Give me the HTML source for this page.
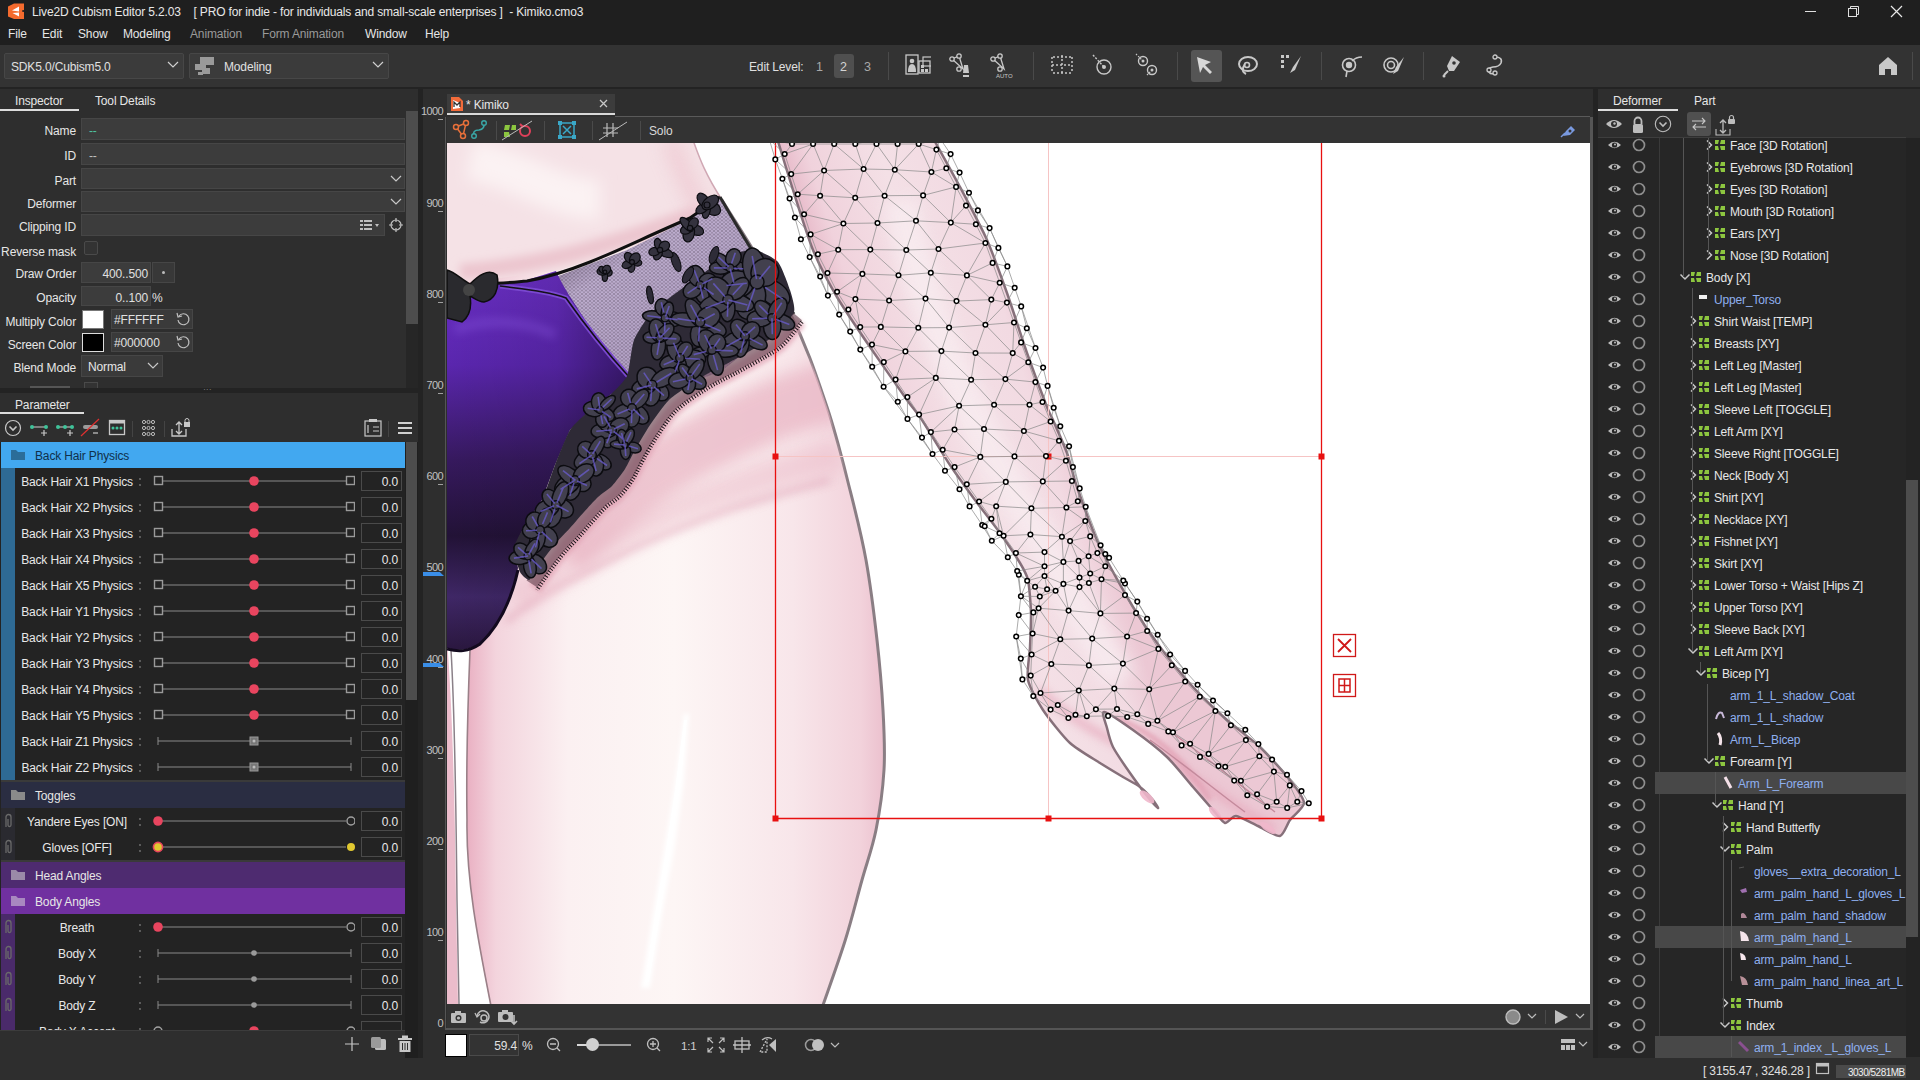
<!DOCTYPE html>
<html><head><meta charset="utf-8"><style>
html,body{margin:0;padding:0;width:1920px;height:1080px;overflow:hidden;background:#2e2e2e;}
.a{position:absolute;}
.t{position:absolute;font-family:"Liberation Sans",sans-serif;white-space:pre;line-height:16px;letter-spacing:-0.15px;}
svg{overflow:hidden}
</style></head><body>
<div class="a" style="left:0px;top:0px;width:1920px;height:45px;background:#1f1f1f;"></div><svg class="a" style="left:7px;top:3px;" width="18" height="18" viewBox="0 0 18 18"><path d="M1 3.5 L7 0.5 L17 0.5 L17 7 L15 7.5 L15 8.5 L17 9 L17 16 L7 16 L1 13.5 Z" fill="#f56b2e"/><path d="M5 7.5 L12 3.5 L12 8.5 Z M5.5 10 L12 9.5 L12 13.5 Z" fill="#fff"/></svg><div class="t" style="left:32px;top:4px;color:#e8e8e8;font-size:12px;">Live2D Cubism Editor 5.2.03&nbsp;&nbsp;&nbsp;&nbsp;[ PRO for indie - for individuals and small-scale enterprises ]&nbsp;&nbsp;- Kimiko.cmo3</div><div class="a" style="left:1805px;top:11px;width:11px;height:1px;background:#e0e0e0;"></div><svg class="a" style="left:1847px;top:5px;" width="14" height="14" viewBox="0 0 14 14"><rect x="1.5" y="3.5" width="8" height="8" fill="none" stroke="#e0e0e0"/><path d="M3.5 3.5 V1.5 H11.5 V9.5 H9.5" fill="none" stroke="#e0e0e0"/></svg><svg class="a" style="left:1890px;top:5px;" width="14" height="14" viewBox="0 0 14 14"><path d="M1 1 L12 12 M12 1 L1 12" stroke="#e8e8e8" stroke-width="1.2"/></svg><div class="t" style="left:8px;top:26px;color:#e6e6e6;font-size:12px;">File</div><div class="t" style="left:42px;top:26px;color:#e6e6e6;font-size:12px;">Edit</div><div class="t" style="left:78px;top:26px;color:#e6e6e6;font-size:12px;">Show</div><div class="t" style="left:123px;top:26px;color:#e6e6e6;font-size:12px;">Modeling</div><div class="t" style="left:190px;top:26px;color:#9a9a9a;font-size:12px;">Animation</div><div class="t" style="left:262px;top:26px;color:#9a9a9a;font-size:12px;">Form Animation</div><div class="t" style="left:365px;top:26px;color:#e6e6e6;font-size:12px;">Window</div><div class="t" style="left:425px;top:26px;color:#e6e6e6;font-size:12px;">Help</div><div class="a" style="left:0px;top:45px;width:1920px;height:42px;background:#333333;"></div><div class="a" style="left:0px;top:87px;width:1920px;height:2px;background:#232323;"></div><div class="a" style="left:4px;top:53px;width:180px;height:26px;background:#3b3b3b;border:1px solid #474747;box-sizing:border-box;border-radius:2px;"></div><div class="t" style="left:11px;top:59px;color:#e0e0e0;font-size:12px;">SDK5.0/Cubism5.0</div><svg class="a" style="left:167px;top:61px;" width="12" height="8" viewBox="0 0 12 8"><path d="M1 1 L6 6 L11 1" fill="none" stroke="#d0d0d0" stroke-width="1.2"/></svg><div class="a" style="left:189px;top:53px;width:200px;height:26px;background:#3b3b3b;border:1px solid #474747;box-sizing:border-box;border-radius:2px;"></div><svg class="a" style="left:194px;top:56px;" width="22" height="20" viewBox="0 0 22 20"><rect x="6" y="1" width="14" height="8" fill="#9a9a9a"/><rect x="1" y="8" width="11" height="6" fill="#9a9a9a"/><rect x="8" y="12" width="8" height="6" fill="#9a9a9a"/><rect x="4" y="16" width="5" height="3" fill="#9a9a9a"/></svg><div class="t" style="left:224px;top:59px;color:#e0e0e0;font-size:12px;">Modeling</div><svg class="a" style="left:372px;top:61px;" width="12" height="8" viewBox="0 0 12 8"><path d="M1 1 L6 6 L11 1" fill="none" stroke="#d0d0d0" stroke-width="1.2"/></svg><div class="t" style="left:749px;top:59px;color:#e0e0e0;font-size:12px;">Edit Level:</div><div class="t" style="left:816px;top:59px;color:#a8a8a8;font-size:12.5px;">1</div><div class="a" style="left:834px;top:54px;width:20px;height:24px;background:#4f4f4f;border-radius:3px;"></div><div class="t" style="left:840px;top:59px;color:#d4d4d4;font-size:12.5px;">2</div><div class="t" style="left:864px;top:59px;color:#a8a8a8;font-size:12.5px;">3</div><div class="a" style="left:888px;top:52px;width:1px;height:28px;background:#4a4a4a;"></div><div class="a" style="left:1033px;top:52px;width:1px;height:28px;background:#4a4a4a;"></div><div class="a" style="left:1177px;top:52px;width:1px;height:28px;background:#4a4a4a;"></div><div class="a" style="left:1321px;top:52px;width:1px;height:28px;background:#4a4a4a;"></div><div class="a" style="left:1423px;top:52px;width:1px;height:28px;background:#4a4a4a;"></div><div class="a" style="left:1191px;top:50px;width:31px;height:32px;background:#555555;border-radius:3px;"></div><svg class="a" style="left:905px;top:53px;" width="26" height="26" viewBox="0 0 26 26"><rect x="1" y="2" width="12" height="19" fill="none" stroke="#c8c8c8" stroke-width="1.3"/><circle cx="7" cy="8" r="2.3" fill="#c8c8c8"/><path d="M3 19 Q3 11 7 11 Q11 11 11 19Z" fill="#c8c8c8"/><rect x="14" y="8" width="11" height="12" fill="none" stroke="#c8c8c8" stroke-width="1.3"/><rect x="18" y="4" width="9" height="9" fill="none" stroke="#c8c8c8" stroke-width="1.2"/><rect x="16" y="12" width="3" height="3" fill="#c8c8c8"/><rect x="16" y="16" width="3" height="3" fill="#c8c8c8"/><rect x="20" y="16" width="3" height="3" fill="#c8c8c8"/></svg><svg class="a" style="left:949px;top:53px;" width="26" height="26" viewBox="0 0 26 26"><path d="M3 6 L10 3 L14 16 Z" fill="none" stroke="#c8c8c8" stroke-width="1.3"/><circle cx="3" cy="6" r="2.2" fill="#333" stroke="#c8c8c8" stroke-width="1.3"/><circle cx="10" cy="3" r="2.2" fill="#333" stroke="#c8c8c8" stroke-width="1.3"/><circle cx="10" cy="16" r="2.2" fill="#333" stroke="#c8c8c8" stroke-width="1.3"/><path d="M15 12 L19 12 L20 20 L14 20 Z" fill="#c8c8c8"/><rect x="14" y="22" width="6" height="2" fill="#c8c8c8"/></svg><svg class="a" style="left:990px;top:53px;" width="26" height="26" viewBox="0 0 26 26"><path d="M3 6 L10 3 L14 16 Z" fill="none" stroke="#c8c8c8" stroke-width="1.3"/><circle cx="3" cy="6" r="2.2" fill="#333" stroke="#c8c8c8" stroke-width="1.3"/><circle cx="10" cy="3" r="2.2" fill="#333" stroke="#c8c8c8" stroke-width="1.3"/><circle cx="10" cy="16" r="2.2" fill="#333" stroke="#c8c8c8" stroke-width="1.3"/><text x="6" y="25" font-size="6" fill="#c8c8c8" font-family="Liberation Sans">AUTO</text></svg><svg class="a" style="left:1050px;top:53px;" width="26" height="26" viewBox="0 0 26 26"><path d="M3 4 H21 M3 20 H21 M2 4 V20 M22 4 V20 M12 2 V22 M2 12 H22" stroke="#c8c8c8" stroke-width="1.5" stroke-dasharray="2 2" fill="none"/></svg><svg class="a" style="left:1091px;top:53px;" width="26" height="26" viewBox="0 0 26 26"><circle cx="13" cy="14" r="7" fill="none" stroke="#c8c8c8" stroke-width="1.4"/><circle cx="13" cy="14" r="2" fill="#c8c8c8"/><path d="M2 2 L13 14" stroke="#c8c8c8" stroke-width="1.4" stroke-dasharray="2 1.5"/></svg><svg class="a" style="left:1135px;top:53px;" width="26" height="26" viewBox="0 0 26 26"><circle cx="8" cy="8" r="4.5" fill="none" stroke="#c8c8c8" stroke-width="1.4"/><circle cx="17" cy="17" r="4.5" fill="none" stroke="#c8c8c8" stroke-width="1.4"/><circle cx="8" cy="8" r="1.5" fill="#c8c8c8"/><circle cx="17" cy="17" r="1.5" fill="#c8c8c8"/><path d="M1 1 L8 8 M12 22 L17 17" stroke="#c8c8c8" stroke-width="1.2" stroke-dasharray="1.5 1.5"/></svg><svg class="a" style="left:1193px;top:53px;" width="26" height="26" viewBox="0 0 26 26"><path d="M4 4 L18 9 L12 12 L19 19 L17 21 L10 14 L7 20 Z" fill="#d8d8d8"/></svg><svg class="a" style="left:1236px;top:53px;" width="26" height="26" viewBox="0 0 26 26"><ellipse cx="12" cy="11" rx="9" ry="7" fill="none" stroke="#c8c8c8" stroke-width="2"/><path d="M9 11 Q4 18 10 21" fill="none" stroke="#c8c8c8" stroke-width="2"/><circle cx="11" cy="12" r="2.5" fill="none" stroke="#c8c8c8" stroke-width="1.6"/></svg><svg class="a" style="left:1279px;top:53px;" width="26" height="26" viewBox="0 0 26 26"><rect x="2" y="2" width="3" height="3" fill="#c8c8c8"/><rect x="7" y="2" width="3" height="3" fill="#c8c8c8"/><rect x="2" y="7" width="3" height="3" fill="#c8c8c8"/><rect x="2" y="12" width="3" height="3" fill="#c8c8c8"/><path d="M22 3 L14 14 L11 20 L16 17 Z" fill="#c8c8c8"/></svg><svg class="a" style="left:1339px;top:53px;" width="26" height="26" viewBox="0 0 26 26"><circle cx="10" cy="12" r="6.5" fill="none" stroke="#c8c8c8" stroke-width="1.6"/><circle cx="10" cy="12" r="3.2" fill="#c8c8c8"/><path d="M13 8 Q17 4 23 4 M8 18 L7 24" stroke="#c8c8c8" stroke-width="1.6" fill="none"/></svg><svg class="a" style="left:1381px;top:53px;" width="26" height="26" viewBox="0 0 26 26"><circle cx="10" cy="12" r="7" fill="none" stroke="#c8c8c8" stroke-width="1.6"/><circle cx="10" cy="12" r="3.5" fill="none" stroke="#c8c8c8" stroke-width="1.6"/><path d="M23 4 L15 14 L12 21 L17 18 Z" fill="#c8c8c8"/></svg><svg class="a" style="left:1440px;top:53px;" width="26" height="26" viewBox="0 0 26 26"><path d="M12 3 L20 9 L14 18 L9 18 L7 13 Z" fill="#c8c8c8"/><circle cx="14" cy="10" r="1.8" fill="#333"/><path d="M8 18 L4 22" stroke="#c8c8c8" stroke-width="2"/><circle cx="4" cy="23" r="1.5" fill="#c8c8c8"/></svg><svg class="a" style="left:1483px;top:53px;" width="26" height="26" viewBox="0 0 26 26"><path d="M12 4 Q20 4 18 10 Q16 14 10 14 Q4 15 6 19 Q8 22 12 20" fill="none" stroke="#c8c8c8" stroke-width="1.6"/><circle cx="12" cy="4" r="2" fill="#333" stroke="#c8c8c8" stroke-width="1.3"/><circle cx="12" cy="20" r="2" fill="#333" stroke="#c8c8c8" stroke-width="1.3"/><circle cx="6" cy="17" r="2" fill="#333" stroke="#c8c8c8" stroke-width="1.3"/></svg><svg class="a" style="left:1877px;top:55px;" width="22" height="22" viewBox="0 0 22 22"><path d="M11 2 L20 10 L20 20 L14 20 L14 14 L8 14 L8 20 L2 20 L2 10 Z" fill="#c8c8c8"/></svg><div class="a" style="left:1912px;top:52px;width:1px;height:28px;background:#4a4a4a;"></div><div class="a" style="left:0px;top:1058px;width:1920px;height:22px;background:#2e2e2e;"></div><div class="t" style="left:1703px;top:1063px;color:#e0e0e0;font-size:12px;">[ 3155.47 , 3246.28 ]</div><svg class="a" style="left:1815px;top:1062px;" width="16" height="14" viewBox="0 0 16 14"><rect x="1.5" y="1.5" width="12" height="10" fill="none" stroke="#c0c0c0" stroke-width="1.2"/><rect x="1.5" y="1.5" width="12" height="3" fill="#c0c0c0"/></svg><div class="a" style="left:1836px;top:1065px;width:70px;height:13px;background:#4a4a4a;"></div><div class="t" style="left:1848px;top:1065px;color:#f0f0f0;font-size:10px;letter-spacing:-0.5px;">3030/5281MB</div>
<div class="a" style="left:0px;top:89px;width:418px;height:299px;background:#2e2e2e;"></div><div class="t" style="left:15px;top:93px;color:#e6e6e6;font-size:12px;">Inspector</div><div class="a" style="left:0px;top:109px;width:79px;height:2px;background:#dcdcdc;"></div><div class="t" style="left:95px;top:93px;color:#e6e6e6;font-size:12px;">Tool Details</div><div class="t" style="right:1844px;top:122.5px;color:#e6e6e6;font-size:12px;">Name</div><div class="t" style="right:1844px;top:147.5px;color:#e6e6e6;font-size:12px;">ID</div><div class="t" style="right:1844px;top:172.5px;color:#e6e6e6;font-size:12px;">Part</div><div class="t" style="right:1844px;top:195.5px;color:#e6e6e6;font-size:12px;">Deformer</div><div class="t" style="right:1844px;top:219px;color:#e6e6e6;font-size:12px;">Clipping ID</div><div class="t" style="right:1844px;top:244px;color:#e6e6e6;font-size:12px;">Reverse mask</div><div class="t" style="right:1844px;top:266px;color:#e6e6e6;font-size:12px;">Draw Order</div><div class="t" style="right:1844px;top:290px;color:#e6e6e6;font-size:12px;">Opacity</div><div class="t" style="right:1844px;top:314px;color:#e6e6e6;font-size:12px;">Multiply Color</div><div class="t" style="right:1844px;top:337px;color:#e6e6e6;font-size:12px;">Screen Color</div><div class="t" style="right:1844px;top:360px;color:#e6e6e6;font-size:12px;">Blend Mode</div><div class="a" style="left:81px;top:118px;width:324px;height:22px;background:#3c3c3c;border:1px solid #464646;box-sizing:border-box;"></div><div class="t" style="left:89px;top:122.5px;color:#4fc3a0;font-size:12px;">--</div><div class="a" style="left:81px;top:143px;width:324px;height:22px;background:#3c3c3c;border:1px solid #464646;box-sizing:border-box;"></div><div class="t" style="left:89px;top:147.5px;color:#c0c0c0;font-size:12px;">--</div><div class="a" style="left:81px;top:168px;width:324px;height:21px;background:#3c3c3c;border:1px solid #464646;box-sizing:border-box;"></div><svg class="a" style="left:390px;top:175px;" width="12" height="8" viewBox="0 0 12 8"><path d="M1 1 L6 6 L11 1" fill="none" stroke="#c8c8c8" stroke-width="1.2"/></svg><div class="a" style="left:81px;top:191px;width:324px;height:21px;background:#3c3c3c;border:1px solid #464646;box-sizing:border-box;"></div><svg class="a" style="left:390px;top:198px;" width="12" height="8" viewBox="0 0 12 8"><path d="M1 1 L6 6 L11 1" fill="none" stroke="#c8c8c8" stroke-width="1.2"/></svg><div class="a" style="left:81px;top:214px;width:304px;height:22px;background:#3c3c3c;border:1px solid #464646;box-sizing:border-box;"></div><svg class="a" style="left:358px;top:218px;" width="24" height="14" viewBox="0 0 24 14"><rect x="2" y="2" width="3" height="2" fill="#c0c0c0"/><rect x="6" y="2" width="8" height="2" fill="#c0c0c0"/><rect x="2" y="6" width="3" height="2" fill="#c0c0c0"/><rect x="6" y="6" width="8" height="2" fill="#c0c0c0"/><rect x="2" y="10" width="3" height="2" fill="#c0c0c0"/><rect x="6" y="10" width="8" height="2" fill="#c0c0c0"/><path d="M17 6 L21 6 L19 9 Z" fill="#c0c0c0"/></svg><svg class="a" style="left:388px;top:217px;" width="16" height="16" viewBox="0 0 16 16"><circle cx="8" cy="8" r="5" fill="none" stroke="#c0c0c0" stroke-width="1.2"/><path d="M8 1 V5 M8 11 V15 M1 8 H5 M11 8 H15" stroke="#c0c0c0" stroke-width="1.2"/></svg><div class="a" style="left:84px;top:241px;width:14px;height:14px;background:#333;border:1px solid #4a4a4a;box-sizing:border-box;border-radius:2px;"></div><div class="a" style="left:81px;top:262px;width:70px;height:21px;background:#3c3c3c;border:1px solid #464646;box-sizing:border-box;"></div><div class="t" style="right:1772px;top:266px;color:#e0e0e0;font-size:12px;">400..500</div><div class="a" style="left:152px;top:262px;width:23px;height:21px;background:#383838;border:1px solid #464646;box-sizing:border-box;"></div><div class="a" style="left:162px;top:271px;width:3px;height:3px;background:#bbb;border-radius:2px;"></div><div class="a" style="left:81px;top:286px;width:70px;height:20px;background:#3c3c3c;border:1px solid #464646;box-sizing:border-box;"></div><div class="t" style="right:1772px;top:290px;color:#e0e0e0;font-size:12px;">0..100</div><div class="t" style="left:152px;top:290px;color:#e0e0e0;font-size:12px;">%</div><div class="a" style="left:82px;top:310px;width:22px;height:19px;background:#ffffff;border:1px solid #777;box-sizing:border-box;"></div><div class="a" style="left:111px;top:309px;width:82px;height:20px;background:#3a3a3a;border:1px solid #464646;box-sizing:border-box;"></div><div class="t" style="left:114px;top:312px;color:#e0e0e0;font-size:12px;">#FFFFFF</div><svg class="a" style="left:175px;top:311px;" width="16" height="16" viewBox="0 0 16 16"><path d="M4 5 A5.5 5.5 0 1 1 3 9" fill="none" stroke="#c0c0c0" stroke-width="1.2"/><path d="M2 2 L3 6 L7 5" fill="none" stroke="#c0c0c0" stroke-width="1.2"/></svg><div class="a" style="left:82px;top:333px;width:22px;height:19px;background:#000000;border:1px solid #ddd;box-sizing:border-box;"></div><div class="a" style="left:111px;top:332px;width:82px;height:20px;background:#3a3a3a;border:1px solid #464646;box-sizing:border-box;"></div><div class="t" style="left:114px;top:335px;color:#e0e0e0;font-size:12px;">#000000</div><svg class="a" style="left:175px;top:334px;" width="16" height="16" viewBox="0 0 16 16"><path d="M4 5 A5.5 5.5 0 1 1 3 9" fill="none" stroke="#c0c0c0" stroke-width="1.2"/><path d="M2 2 L3 6 L7 5" fill="none" stroke="#c0c0c0" stroke-width="1.2"/></svg><div class="a" style="left:81px;top:355px;width:82px;height:22px;background:#3a3a3a;border:1px solid #464646;box-sizing:border-box;"></div><div class="t" style="left:88px;top:359px;color:#e6e6e6;font-size:12px;">Normal</div><svg class="a" style="left:147px;top:362px;" width="12" height="8" viewBox="0 0 12 8"><path d="M1 1 L6 6 L11 1" fill="none" stroke="#c8c8c8" stroke-width="1.2"/></svg><div class="a" style="left:84px;top:382px;width:14px;height:6px;background:#333;border:1px solid #4a4a4a;border-bottom:none;box-sizing:border-box;"></div><div class="a" style="left:30px;top:386px;width:40px;height:2px;background:#555;"></div><div class="a" style="left:406px;top:111px;width:12px;height:277px;background:#262626;"></div><div class="a" style="left:406px;top:111px;width:12px;height:213px;background:#4d4d4d;"></div><div class="a" style="left:0px;top:388px;width:418px;height:5px;background:#232323;"></div><div class="t" style="left:203px;top:381px;color:#777;font-size:9px;">···</div><div class="a" style="left:0px;top:393px;width:418px;height:665px;background:#2e2e2e;"></div><div class="t" style="left:15px;top:397px;color:#e6e6e6;font-size:12px;">Parameter</div><div class="a" style="left:0px;top:412px;width:84px;height:2px;background:#dcdcdc;"></div><svg class="a" style="left:4px;top:419px;" width="18" height="18" viewBox="0 0 18 18"><circle cx="9" cy="9" r="7.5" fill="none" stroke="#c8c8c8" stroke-width="1.2"/><path d="M5.5 7.5 L9 11 L12.5 7.5" fill="none" stroke="#c8c8c8" stroke-width="1.6"/></svg><svg class="a" style="left:29px;top:419px;" width="20" height="18" viewBox="0 0 20 18"><path d="M3 8 H17" stroke="#aaa" stroke-width="1.3"/><circle cx="3" cy="8" r="2" fill="#3fc39a"/><circle cx="17" cy="8" r="2" fill="#3fc39a"/><path d="M12 14 H18 M15 11 V17" stroke="#c8c8c8" stroke-width="1.2"/></svg><svg class="a" style="left:55px;top:419px;" width="20" height="18" viewBox="0 0 20 18"><path d="M3 8 H17" stroke="#aaa" stroke-width="1.3"/><circle cx="3" cy="8" r="2" fill="#3fc39a"/><circle cx="10" cy="8" r="2" fill="#3fc39a"/><circle cx="17" cy="8" r="2" fill="#3fc39a"/><path d="M12 14 H18 M15 11 V17" stroke="#c8c8c8" stroke-width="1.2"/></svg><svg class="a" style="left:80px;top:417px;" width="22" height="20" viewBox="0 0 22 20"><rect x="3" y="8" width="15" height="4" rx="2" fill="#9a9a9a"/><path d="M1 19 L19 2" stroke="#e03030" stroke-width="1.2"/><path d="M13 16 H18" stroke="#c8c8c8" stroke-width="1.2"/></svg><svg class="a" style="left:108px;top:419px;" width="18" height="18" viewBox="0 0 18 18"><rect x="1.5" y="1.5" width="15" height="14" fill="none" stroke="#c8c8c8" stroke-width="1.3"/><rect x="1.5" y="1.5" width="15" height="3" fill="#c8c8c8"/><circle cx="5" cy="9" r="1.5" fill="#3fc39a"/><circle cx="9" cy="9" r="1.5" fill="#3fc39a"/><circle cx="13" cy="9" r="1.5" fill="#3fc39a"/></svg><div class="a" style="left:132px;top:421px;width:1px;height:16px;background:#444;"></div><svg class="a" style="left:141px;top:419px;" width="16" height="18" viewBox="0 0 16 18"><circle cx="3.0" cy="3" r="1.6" fill="none" stroke="#c8c8c8" stroke-width="0.9"/><circle cx="7.5" cy="3" r="1.6" fill="none" stroke="#c8c8c8" stroke-width="0.9"/><circle cx="12.0" cy="3" r="1.6" fill="none" stroke="#c8c8c8" stroke-width="0.9"/><circle cx="3.0" cy="9" r="1.6" fill="none" stroke="#c8c8c8" stroke-width="0.9"/><circle cx="7.5" cy="9" r="1.6" fill="none" stroke="#c8c8c8" stroke-width="0.9"/><circle cx="12.0" cy="9" r="1.6" fill="none" stroke="#c8c8c8" stroke-width="0.9"/><circle cx="3.0" cy="15" r="1.6" fill="none" stroke="#c8c8c8" stroke-width="0.9"/><circle cx="7.5" cy="15" r="1.6" fill="none" stroke="#c8c8c8" stroke-width="0.9"/><circle cx="12.0" cy="15" r="1.6" fill="none" stroke="#c8c8c8" stroke-width="0.9"/></svg><div class="a" style="left:164px;top:421px;width:1px;height:16px;background:#444;"></div><svg class="a" style="left:170px;top:417px;" width="22" height="22" viewBox="0 0 22 22"><path d="M2 12 V19 H16 V12" fill="none" stroke="#c8c8c8" stroke-width="1.3"/><path d="M9 5 V17 M6 8 L9 5 L12 8 M6 14 L9 17 L12 14" fill="none" stroke="#c8c8c8" stroke-width="1.3"/><rect x="14" y="5" width="6" height="5" fill="#c8c8c8"/><path d="M15 5 V3.5 A2 2 0 0 1 19 3.5 V5" fill="none" stroke="#c8c8c8"/></svg><svg class="a" style="left:363px;top:418px;" width="20" height="20" viewBox="0 0 20 20"><rect x="2" y="3" width="16" height="15" fill="none" stroke="#c8c8c8" stroke-width="1.2"/><rect x="6" y="1" width="8" height="3" fill="#c8c8c8"/><path d="M5 7 V15 M10 9 H16 M10 13 H16" stroke="#c8c8c8" stroke-width="1.2"/></svg><div class="a" style="left:388px;top:421px;width:1px;height:16px;background:#444;"></div><svg class="a" style="left:396px;top:419px;" width="18" height="18" viewBox="0 0 18 18"><path d="M2 4 H16 M2 9 H16 M2 14 H16" stroke="#d0d0d0" stroke-width="1.8"/></svg><div class="a" style="left:0px;top:442px;width:405px;height:588px;background:#232323;"></div><div class="a" style="left:1px;top:442px;width:404px;height:26px;background:#42a8f0;"></div><svg class="a" style="left:10px;top:448px;" width="18" height="14" viewBox="0 0 18 14"><path d="M1 2 H6 L8 4 H15 V12 H1 Z" fill="#2b6d99"/></svg><div class="t" style="left:35px;top:448.0px;color:#10304a;font-size:12px;">Back Hair Physics</div><div class="a" style="left:1px;top:468px;width:404px;height:26px;background:#232323;"></div><div class="a" style="left:1px;top:468px;width:14px;height:26px;background:#2e6a94;"></div><div class="t" style="left:0px;top:474px;color:#e8e8e8;font-size:12px;width:154px;text-align:center;">Back Hair X1 Physics</div><svg class="a" style="left:138px;top:477px;" width="4" height="10" viewBox="0 0 4 10"><circle cx="2" cy="2" r="0.9" fill="#777"/><circle cx="2" cy="8" r="0.9" fill="#777"/></svg><svg class="a" style="left:150px;top:468px;" width="205" height="26" viewBox="0 0 205 26"><path d="M12.5 13 H196.5" stroke="#8a8a8a" stroke-width="1"/><rect x="4.5" y="8.5" width="8" height="8" fill="#232323" stroke="#9a9a9a" stroke-width="1.4"/><rect x="196.5" y="8.5" width="8" height="8" fill="#232323" stroke="#9a9a9a" stroke-width="1.4"/><circle cx="104" cy="13" r="4.8" fill="#e8455f"/></svg><div class="a" style="left:361px;top:471px;width:41px;height:20px;background:#232323;border:1px solid #4a4a4a;box-sizing:border-box;"></div><div class="t" style="right:1522px;top:474px;color:#e8e8e8;font-size:12px;">0.0</div><div class="a" style="left:1px;top:494px;width:404px;height:26px;background:#232323;"></div><div class="a" style="left:1px;top:494px;width:14px;height:26px;background:#2e6a94;"></div><div class="t" style="left:0px;top:500px;color:#e8e8e8;font-size:12px;width:154px;text-align:center;">Back Hair X2 Physics</div><svg class="a" style="left:138px;top:503px;" width="4" height="10" viewBox="0 0 4 10"><circle cx="2" cy="2" r="0.9" fill="#777"/><circle cx="2" cy="8" r="0.9" fill="#777"/></svg><svg class="a" style="left:150px;top:494px;" width="205" height="26" viewBox="0 0 205 26"><path d="M12.5 13 H196.5" stroke="#8a8a8a" stroke-width="1"/><rect x="4.5" y="8.5" width="8" height="8" fill="#232323" stroke="#9a9a9a" stroke-width="1.4"/><rect x="196.5" y="8.5" width="8" height="8" fill="#232323" stroke="#9a9a9a" stroke-width="1.4"/><circle cx="104" cy="13" r="4.8" fill="#e8455f"/></svg><div class="a" style="left:361px;top:497px;width:41px;height:20px;background:#232323;border:1px solid #4a4a4a;box-sizing:border-box;"></div><div class="t" style="right:1522px;top:500px;color:#e8e8e8;font-size:12px;">0.0</div><div class="a" style="left:1px;top:520px;width:404px;height:26px;background:#232323;"></div><div class="a" style="left:1px;top:520px;width:14px;height:26px;background:#2e6a94;"></div><div class="t" style="left:0px;top:526px;color:#e8e8e8;font-size:12px;width:154px;text-align:center;">Back Hair X3 Physics</div><svg class="a" style="left:138px;top:529px;" width="4" height="10" viewBox="0 0 4 10"><circle cx="2" cy="2" r="0.9" fill="#777"/><circle cx="2" cy="8" r="0.9" fill="#777"/></svg><svg class="a" style="left:150px;top:520px;" width="205" height="26" viewBox="0 0 205 26"><path d="M12.5 13 H196.5" stroke="#8a8a8a" stroke-width="1"/><rect x="4.5" y="8.5" width="8" height="8" fill="#232323" stroke="#9a9a9a" stroke-width="1.4"/><rect x="196.5" y="8.5" width="8" height="8" fill="#232323" stroke="#9a9a9a" stroke-width="1.4"/><circle cx="104" cy="13" r="4.8" fill="#e8455f"/></svg><div class="a" style="left:361px;top:523px;width:41px;height:20px;background:#232323;border:1px solid #4a4a4a;box-sizing:border-box;"></div><div class="t" style="right:1522px;top:526px;color:#e8e8e8;font-size:12px;">0.0</div><div class="a" style="left:1px;top:546px;width:404px;height:26px;background:#232323;"></div><div class="a" style="left:1px;top:546px;width:14px;height:26px;background:#2e6a94;"></div><div class="t" style="left:0px;top:552px;color:#e8e8e8;font-size:12px;width:154px;text-align:center;">Back Hair X4 Physics</div><svg class="a" style="left:138px;top:555px;" width="4" height="10" viewBox="0 0 4 10"><circle cx="2" cy="2" r="0.9" fill="#777"/><circle cx="2" cy="8" r="0.9" fill="#777"/></svg><svg class="a" style="left:150px;top:546px;" width="205" height="26" viewBox="0 0 205 26"><path d="M12.5 13 H196.5" stroke="#8a8a8a" stroke-width="1"/><rect x="4.5" y="8.5" width="8" height="8" fill="#232323" stroke="#9a9a9a" stroke-width="1.4"/><rect x="196.5" y="8.5" width="8" height="8" fill="#232323" stroke="#9a9a9a" stroke-width="1.4"/><circle cx="104" cy="13" r="4.8" fill="#e8455f"/></svg><div class="a" style="left:361px;top:549px;width:41px;height:20px;background:#232323;border:1px solid #4a4a4a;box-sizing:border-box;"></div><div class="t" style="right:1522px;top:552px;color:#e8e8e8;font-size:12px;">0.0</div><div class="a" style="left:1px;top:572px;width:404px;height:26px;background:#232323;"></div><div class="a" style="left:1px;top:572px;width:14px;height:26px;background:#2e6a94;"></div><div class="t" style="left:0px;top:578px;color:#e8e8e8;font-size:12px;width:154px;text-align:center;">Back Hair X5 Physics</div><svg class="a" style="left:138px;top:581px;" width="4" height="10" viewBox="0 0 4 10"><circle cx="2" cy="2" r="0.9" fill="#777"/><circle cx="2" cy="8" r="0.9" fill="#777"/></svg><svg class="a" style="left:150px;top:572px;" width="205" height="26" viewBox="0 0 205 26"><path d="M12.5 13 H196.5" stroke="#8a8a8a" stroke-width="1"/><rect x="4.5" y="8.5" width="8" height="8" fill="#232323" stroke="#9a9a9a" stroke-width="1.4"/><rect x="196.5" y="8.5" width="8" height="8" fill="#232323" stroke="#9a9a9a" stroke-width="1.4"/><circle cx="104" cy="13" r="4.8" fill="#e8455f"/></svg><div class="a" style="left:361px;top:575px;width:41px;height:20px;background:#232323;border:1px solid #4a4a4a;box-sizing:border-box;"></div><div class="t" style="right:1522px;top:578px;color:#e8e8e8;font-size:12px;">0.0</div><div class="a" style="left:1px;top:598px;width:404px;height:26px;background:#232323;"></div><div class="a" style="left:1px;top:598px;width:14px;height:26px;background:#2e6a94;"></div><div class="t" style="left:0px;top:604px;color:#e8e8e8;font-size:12px;width:154px;text-align:center;">Back Hair Y1 Physics</div><svg class="a" style="left:138px;top:607px;" width="4" height="10" viewBox="0 0 4 10"><circle cx="2" cy="2" r="0.9" fill="#777"/><circle cx="2" cy="8" r="0.9" fill="#777"/></svg><svg class="a" style="left:150px;top:598px;" width="205" height="26" viewBox="0 0 205 26"><path d="M12.5 13 H196.5" stroke="#8a8a8a" stroke-width="1"/><rect x="4.5" y="8.5" width="8" height="8" fill="#232323" stroke="#9a9a9a" stroke-width="1.4"/><rect x="196.5" y="8.5" width="8" height="8" fill="#232323" stroke="#9a9a9a" stroke-width="1.4"/><circle cx="104" cy="13" r="4.8" fill="#e8455f"/></svg><div class="a" style="left:361px;top:601px;width:41px;height:20px;background:#232323;border:1px solid #4a4a4a;box-sizing:border-box;"></div><div class="t" style="right:1522px;top:604px;color:#e8e8e8;font-size:12px;">0.0</div><div class="a" style="left:1px;top:624px;width:404px;height:26px;background:#232323;"></div><div class="a" style="left:1px;top:624px;width:14px;height:26px;background:#2e6a94;"></div><div class="t" style="left:0px;top:630px;color:#e8e8e8;font-size:12px;width:154px;text-align:center;">Back Hair Y2 Physics</div><svg class="a" style="left:138px;top:633px;" width="4" height="10" viewBox="0 0 4 10"><circle cx="2" cy="2" r="0.9" fill="#777"/><circle cx="2" cy="8" r="0.9" fill="#777"/></svg><svg class="a" style="left:150px;top:624px;" width="205" height="26" viewBox="0 0 205 26"><path d="M12.5 13 H196.5" stroke="#8a8a8a" stroke-width="1"/><rect x="4.5" y="8.5" width="8" height="8" fill="#232323" stroke="#9a9a9a" stroke-width="1.4"/><rect x="196.5" y="8.5" width="8" height="8" fill="#232323" stroke="#9a9a9a" stroke-width="1.4"/><circle cx="104" cy="13" r="4.8" fill="#e8455f"/></svg><div class="a" style="left:361px;top:627px;width:41px;height:20px;background:#232323;border:1px solid #4a4a4a;box-sizing:border-box;"></div><div class="t" style="right:1522px;top:630px;color:#e8e8e8;font-size:12px;">0.0</div><div class="a" style="left:1px;top:650px;width:404px;height:26px;background:#232323;"></div><div class="a" style="left:1px;top:650px;width:14px;height:26px;background:#2e6a94;"></div><div class="t" style="left:0px;top:656px;color:#e8e8e8;font-size:12px;width:154px;text-align:center;">Back Hair Y3 Physics</div><svg class="a" style="left:138px;top:659px;" width="4" height="10" viewBox="0 0 4 10"><circle cx="2" cy="2" r="0.9" fill="#777"/><circle cx="2" cy="8" r="0.9" fill="#777"/></svg><svg class="a" style="left:150px;top:650px;" width="205" height="26" viewBox="0 0 205 26"><path d="M12.5 13 H196.5" stroke="#8a8a8a" stroke-width="1"/><rect x="4.5" y="8.5" width="8" height="8" fill="#232323" stroke="#9a9a9a" stroke-width="1.4"/><rect x="196.5" y="8.5" width="8" height="8" fill="#232323" stroke="#9a9a9a" stroke-width="1.4"/><circle cx="104" cy="13" r="4.8" fill="#e8455f"/></svg><div class="a" style="left:361px;top:653px;width:41px;height:20px;background:#232323;border:1px solid #4a4a4a;box-sizing:border-box;"></div><div class="t" style="right:1522px;top:656px;color:#e8e8e8;font-size:12px;">0.0</div><div class="a" style="left:1px;top:676px;width:404px;height:26px;background:#232323;"></div><div class="a" style="left:1px;top:676px;width:14px;height:26px;background:#2e6a94;"></div><div class="t" style="left:0px;top:682px;color:#e8e8e8;font-size:12px;width:154px;text-align:center;">Back Hair Y4 Physics</div><svg class="a" style="left:138px;top:685px;" width="4" height="10" viewBox="0 0 4 10"><circle cx="2" cy="2" r="0.9" fill="#777"/><circle cx="2" cy="8" r="0.9" fill="#777"/></svg><svg class="a" style="left:150px;top:676px;" width="205" height="26" viewBox="0 0 205 26"><path d="M12.5 13 H196.5" stroke="#8a8a8a" stroke-width="1"/><rect x="4.5" y="8.5" width="8" height="8" fill="#232323" stroke="#9a9a9a" stroke-width="1.4"/><rect x="196.5" y="8.5" width="8" height="8" fill="#232323" stroke="#9a9a9a" stroke-width="1.4"/><circle cx="104" cy="13" r="4.8" fill="#e8455f"/></svg><div class="a" style="left:361px;top:679px;width:41px;height:20px;background:#232323;border:1px solid #4a4a4a;box-sizing:border-box;"></div><div class="t" style="right:1522px;top:682px;color:#e8e8e8;font-size:12px;">0.0</div><div class="a" style="left:1px;top:702px;width:404px;height:26px;background:#232323;"></div><div class="a" style="left:1px;top:702px;width:14px;height:26px;background:#2e6a94;"></div><div class="t" style="left:0px;top:708px;color:#e8e8e8;font-size:12px;width:154px;text-align:center;">Back Hair Y5 Physics</div><svg class="a" style="left:138px;top:711px;" width="4" height="10" viewBox="0 0 4 10"><circle cx="2" cy="2" r="0.9" fill="#777"/><circle cx="2" cy="8" r="0.9" fill="#777"/></svg><svg class="a" style="left:150px;top:702px;" width="205" height="26" viewBox="0 0 205 26"><path d="M12.5 13 H196.5" stroke="#8a8a8a" stroke-width="1"/><rect x="4.5" y="8.5" width="8" height="8" fill="#232323" stroke="#9a9a9a" stroke-width="1.4"/><rect x="196.5" y="8.5" width="8" height="8" fill="#232323" stroke="#9a9a9a" stroke-width="1.4"/><circle cx="104" cy="13" r="4.8" fill="#e8455f"/></svg><div class="a" style="left:361px;top:705px;width:41px;height:20px;background:#232323;border:1px solid #4a4a4a;box-sizing:border-box;"></div><div class="t" style="right:1522px;top:708px;color:#e8e8e8;font-size:12px;">0.0</div><div class="a" style="left:1px;top:728px;width:404px;height:26px;background:#232323;"></div><div class="a" style="left:1px;top:728px;width:14px;height:26px;background:#2e6a94;"></div><div class="t" style="left:0px;top:734px;color:#e8e8e8;font-size:12px;width:154px;text-align:center;">Back Hair Z1 Physics</div><svg class="a" style="left:138px;top:737px;" width="4" height="10" viewBox="0 0 4 10"><circle cx="2" cy="2" r="0.9" fill="#777"/><circle cx="2" cy="8" r="0.9" fill="#777"/></svg><svg class="a" style="left:150px;top:728px;" width="205" height="26" viewBox="0 0 205 26"><path d="M8 13 H201 M8 9 V17 M201 9 V17" stroke="#8a8a8a" stroke-width="1"/><rect x="100" y="9" width="8" height="8" fill="#777" stroke="#999"/><circle cx="104" cy="13" r="1.5" fill="#bbb"/></svg><div class="a" style="left:361px;top:731px;width:41px;height:20px;background:#232323;border:1px solid #4a4a4a;box-sizing:border-box;"></div><div class="t" style="right:1522px;top:734px;color:#e8e8e8;font-size:12px;">0.0</div><div class="a" style="left:1px;top:754px;width:404px;height:26px;background:#232323;"></div><div class="a" style="left:1px;top:754px;width:14px;height:26px;background:#2e6a94;"></div><div class="t" style="left:0px;top:760px;color:#e8e8e8;font-size:12px;width:154px;text-align:center;">Back Hair Z2 Physics</div><svg class="a" style="left:138px;top:763px;" width="4" height="10" viewBox="0 0 4 10"><circle cx="2" cy="2" r="0.9" fill="#777"/><circle cx="2" cy="8" r="0.9" fill="#777"/></svg><svg class="a" style="left:150px;top:754px;" width="205" height="26" viewBox="0 0 205 26"><path d="M8 13 H201 M8 9 V17 M201 9 V17" stroke="#8a8a8a" stroke-width="1"/><rect x="100" y="9" width="8" height="8" fill="#777" stroke="#999"/><circle cx="104" cy="13" r="1.5" fill="#bbb"/></svg><div class="a" style="left:361px;top:757px;width:41px;height:20px;background:#232323;border:1px solid #4a4a4a;box-sizing:border-box;"></div><div class="t" style="right:1522px;top:760px;color:#e8e8e8;font-size:12px;">0.0</div><div class="a" style="left:1px;top:780px;width:404px;height:2px;background:#3a3a3a;"></div><div class="a" style="left:1px;top:782px;width:404px;height:26px;background:#2a2d42;"></div><svg class="a" style="left:10px;top:788px;" width="18" height="14" viewBox="0 0 18 14"><path d="M1 2 H6 L8 4 H15 V12 H1 Z" fill="#8a8a8a"/></svg><div class="t" style="left:35px;top:788.0px;color:#e6e6e6;font-size:12px;">Toggles</div><div class="a" style="left:1px;top:808px;width:404px;height:26px;background:#232323;"></div><div class="a" style="left:1px;top:808px;width:14px;height:26px;background:#2a2a30;"></div><svg class="a" style="left:3px;top:813px;" width="10" height="16" viewBox="0 0 10 16"><path d="M3 14 V4 A2.5 2.5 0 0 1 8 4 V12 A1.5 1.5 0 0 1 5 12 V6" fill="none" stroke="#6a6a6a" stroke-width="1.3"/></svg><div class="t" style="left:0px;top:814px;color:#e8e8e8;font-size:12px;width:154px;text-align:center;">Yandere Eyes [ON]</div><svg class="a" style="left:138px;top:817px;" width="4" height="10" viewBox="0 0 4 10"><circle cx="2" cy="2" r="0.9" fill="#777"/><circle cx="2" cy="8" r="0.9" fill="#777"/></svg><svg class="a" style="left:150px;top:808px;" width="205" height="26" viewBox="0 0 205 26"><path d="M8 13 H196" stroke="#8a8a8a" stroke-width="1"/><circle cx="8" cy="13" r="4.8" fill="#e8455f"/><circle cx="201" cy="13" r="4" fill="#232323" stroke="#a0a0a0" stroke-width="1.4"/></svg><div class="a" style="left:361px;top:811px;width:41px;height:20px;background:#232323;border:1px solid #4a4a4a;box-sizing:border-box;"></div><div class="t" style="right:1522px;top:814px;color:#e8e8e8;font-size:12px;">0.0</div><div class="a" style="left:1px;top:834px;width:404px;height:26px;background:#232323;"></div><div class="a" style="left:1px;top:834px;width:14px;height:26px;background:#2a2a30;"></div><svg class="a" style="left:3px;top:839px;" width="10" height="16" viewBox="0 0 10 16"><path d="M3 14 V4 A2.5 2.5 0 0 1 8 4 V12 A1.5 1.5 0 0 1 5 12 V6" fill="none" stroke="#6a6a6a" stroke-width="1.3"/></svg><div class="t" style="left:0px;top:840px;color:#e8e8e8;font-size:12px;width:154px;text-align:center;">Gloves [OFF]</div><svg class="a" style="left:138px;top:843px;" width="4" height="10" viewBox="0 0 4 10"><circle cx="2" cy="2" r="0.9" fill="#777"/><circle cx="2" cy="8" r="0.9" fill="#777"/></svg><svg class="a" style="left:150px;top:834px;" width="205" height="26" viewBox="0 0 205 26"><path d="M8 13 H196" stroke="#8a8a8a" stroke-width="1"/><circle cx="8" cy="13" r="4.6" fill="#e0c830" stroke="#e8455f" stroke-width="1.6"/><circle cx="201" cy="13" r="4" fill="#e0c830"/></svg><div class="a" style="left:361px;top:837px;width:41px;height:20px;background:#232323;border:1px solid #4a4a4a;box-sizing:border-box;"></div><div class="t" style="right:1522px;top:840px;color:#e8e8e8;font-size:12px;">0.0</div><div class="a" style="left:1px;top:860px;width:404px;height:2px;background:#3a3a3a;"></div><div class="a" style="left:1px;top:862px;width:404px;height:26px;background:#4e2b70;"></div><svg class="a" style="left:10px;top:868px;" width="18" height="14" viewBox="0 0 18 14"><path d="M1 2 H6 L8 4 H15 V12 H1 Z" fill="#9a8aa8"/></svg><div class="t" style="left:35px;top:868.0px;color:#e6e6e6;font-size:12px;">Head Angles</div><div class="a" style="left:1px;top:888px;width:404px;height:26px;background:#7030a0;"></div><svg class="a" style="left:10px;top:894px;" width="18" height="14" viewBox="0 0 18 14"><path d="M1 2 H6 L8 4 H15 V12 H1 Z" fill="#a888c0"/></svg><div class="t" style="left:35px;top:894.0px;color:#e6e6e6;font-size:12px;">Body Angles</div><div class="a" style="left:1px;top:914px;width:404px;height:26px;background:#232323;"></div><div class="a" style="left:1px;top:914px;width:14px;height:26px;background:#4a2a6a;"></div><svg class="a" style="left:3px;top:919px;" width="10" height="16" viewBox="0 0 10 16"><path d="M3 14 V4 A2.5 2.5 0 0 1 8 4 V12 A1.5 1.5 0 0 1 5 12 V6" fill="none" stroke="#6a6a6a" stroke-width="1.3"/></svg><div class="t" style="left:0px;top:920px;color:#e8e8e8;font-size:12px;width:154px;text-align:center;">Breath</div><svg class="a" style="left:138px;top:923px;" width="4" height="10" viewBox="0 0 4 10"><circle cx="2" cy="2" r="0.9" fill="#777"/><circle cx="2" cy="8" r="0.9" fill="#777"/></svg><svg class="a" style="left:150px;top:914px;" width="205" height="26" viewBox="0 0 205 26"><path d="M8 13 H196" stroke="#8a8a8a" stroke-width="1"/><circle cx="8" cy="13" r="4.8" fill="#e8455f"/><circle cx="201" cy="13" r="4" fill="#232323" stroke="#a0a0a0" stroke-width="1.4"/></svg><div class="a" style="left:361px;top:917px;width:41px;height:20px;background:#232323;border:1px solid #4a4a4a;box-sizing:border-box;"></div><div class="t" style="right:1522px;top:920px;color:#e8e8e8;font-size:12px;">0.0</div><div class="a" style="left:1px;top:940px;width:404px;height:26px;background:#232323;"></div><div class="a" style="left:1px;top:940px;width:14px;height:26px;background:#4a2a6a;"></div><svg class="a" style="left:3px;top:945px;" width="10" height="16" viewBox="0 0 10 16"><path d="M3 14 V4 A2.5 2.5 0 0 1 8 4 V12 A1.5 1.5 0 0 1 5 12 V6" fill="none" stroke="#6a6a6a" stroke-width="1.3"/></svg><div class="t" style="left:0px;top:946px;color:#e8e8e8;font-size:12px;width:154px;text-align:center;">Body X</div><svg class="a" style="left:138px;top:949px;" width="4" height="10" viewBox="0 0 4 10"><circle cx="2" cy="2" r="0.9" fill="#777"/><circle cx="2" cy="8" r="0.9" fill="#777"/></svg><svg class="a" style="left:150px;top:940px;" width="205" height="26" viewBox="0 0 205 26"><path d="M8 13 H201 M8 9 V17 M201 9 V17" stroke="#8a8a8a" stroke-width="1"/><circle cx="104" cy="13" r="2.8" fill="#9a9a9a"/></svg><div class="a" style="left:361px;top:943px;width:41px;height:20px;background:#232323;border:1px solid #4a4a4a;box-sizing:border-box;"></div><div class="t" style="right:1522px;top:946px;color:#e8e8e8;font-size:12px;">0.0</div><div class="a" style="left:1px;top:966px;width:404px;height:26px;background:#232323;"></div><div class="a" style="left:1px;top:966px;width:14px;height:26px;background:#4a2a6a;"></div><svg class="a" style="left:3px;top:971px;" width="10" height="16" viewBox="0 0 10 16"><path d="M3 14 V4 A2.5 2.5 0 0 1 8 4 V12 A1.5 1.5 0 0 1 5 12 V6" fill="none" stroke="#6a6a6a" stroke-width="1.3"/></svg><div class="t" style="left:0px;top:972px;color:#e8e8e8;font-size:12px;width:154px;text-align:center;">Body Y</div><svg class="a" style="left:138px;top:975px;" width="4" height="10" viewBox="0 0 4 10"><circle cx="2" cy="2" r="0.9" fill="#777"/><circle cx="2" cy="8" r="0.9" fill="#777"/></svg><svg class="a" style="left:150px;top:966px;" width="205" height="26" viewBox="0 0 205 26"><path d="M8 13 H201 M8 9 V17 M201 9 V17" stroke="#8a8a8a" stroke-width="1"/><circle cx="104" cy="13" r="2.8" fill="#9a9a9a"/></svg><div class="a" style="left:361px;top:969px;width:41px;height:20px;background:#232323;border:1px solid #4a4a4a;box-sizing:border-box;"></div><div class="t" style="right:1522px;top:972px;color:#e8e8e8;font-size:12px;">0.0</div><div class="a" style="left:1px;top:992px;width:404px;height:26px;background:#232323;"></div><div class="a" style="left:1px;top:992px;width:14px;height:26px;background:#4a2a6a;"></div><svg class="a" style="left:3px;top:997px;" width="10" height="16" viewBox="0 0 10 16"><path d="M3 14 V4 A2.5 2.5 0 0 1 8 4 V12 A1.5 1.5 0 0 1 5 12 V6" fill="none" stroke="#6a6a6a" stroke-width="1.3"/></svg><div class="t" style="left:0px;top:998px;color:#e8e8e8;font-size:12px;width:154px;text-align:center;">Body Z</div><svg class="a" style="left:138px;top:1001px;" width="4" height="10" viewBox="0 0 4 10"><circle cx="2" cy="2" r="0.9" fill="#777"/><circle cx="2" cy="8" r="0.9" fill="#777"/></svg><svg class="a" style="left:150px;top:992px;" width="205" height="26" viewBox="0 0 205 26"><path d="M8 13 H201 M8 9 V17 M201 9 V17" stroke="#8a8a8a" stroke-width="1"/><circle cx="104" cy="13" r="2.8" fill="#9a9a9a"/></svg><div class="a" style="left:361px;top:995px;width:41px;height:20px;background:#232323;border:1px solid #4a4a4a;box-sizing:border-box;"></div><div class="t" style="right:1522px;top:998px;color:#e8e8e8;font-size:12px;">0.0</div><div class="a" style="left:0;top:1018px;width:405px;height:12px;overflow:hidden"><div class="a" style="left:1px;top:0px;width:404px;height:26px;background:#232323;"></div><div class="a" style="left:1px;top:0px;width:14px;height:26px;background:#4a2a6a;"></div><div class="t" style="left:0px;top:6px;color:#e8e8e8;font-size:12px;width:154px;text-align:center;">Body X Accent</div><svg class="a" style="left:138px;top:9px;" width="4" height="10" viewBox="0 0 4 10"><circle cx="2" cy="2" r="0.9" fill="#777"/><circle cx="2" cy="8" r="0.9" fill="#777"/></svg><svg class="a" style="left:150px;top:0px;" width="205" height="26" viewBox="0 0 205 26"><path d="M12 13 H196" stroke="#8a8a8a" stroke-width="1"/><circle cx="8" cy="13" r="4" fill="#232323" stroke="#a0a0a0" stroke-width="1.4"/><circle cx="104" cy="13" r="4.8" fill="#e8455f"/><circle cx="201" cy="13" r="4" fill="#232323" stroke="#a0a0a0" stroke-width="1.4"/></svg><div class="a" style="left:361px;top:3px;width:41px;height:20px;background:#232323;border:1px solid #4a4a4a;box-sizing:border-box;"></div><div class="t" style="right:1522px;top:6px;color:#e8e8e8;font-size:12px;">0.0</div></div><div class="a" style="left:405px;top:442px;width:13px;height:616px;background:#1f1f1f;"></div><div class="a" style="left:406px;top:442px;width:11px;height:258px;background:#4d4d4d;"></div><div class="a" style="left:0px;top:1030px;width:405px;height:28px;background:#2e2e2e;"></div><div class="a" style="left:0px;top:1030px;width:405px;height:1px;background:#3c3c3c;"></div><svg class="a" style="left:344px;top:1036px;" width="16" height="16" viewBox="0 0 16 16"><path d="M8 1 V15 M1 8 H15" stroke="#c8c8c8" stroke-width="1.2"/></svg><svg class="a" style="left:370px;top:1036px;" width="18" height="16" viewBox="0 0 18 16"><rect x="5" y="3" width="11" height="11" rx="1.5" fill="#bdbdbd"/><rect x="1" y="1" width="10" height="11" rx="1.5" fill="#9a9a9a"/></svg><svg class="a" style="left:397px;top:1035px;" width="16" height="18" viewBox="0 0 16 18"><rect x="1" y="3" width="14" height="2" fill="#c8c8c8"/><rect x="5" y="0.5" width="6" height="2.5" fill="#c8c8c8"/><path d="M2.5 6 H13.5 V17 H2.5 Z" fill="#c8c8c8"/><path d="M5.5 8 V15 M8 8 V15 M10.5 8 V15" stroke="#2e2e2e" stroke-width="1"/></svg>
<div class="a" style="left:418px;top:89px;width:5px;height:969px;background:#232323;"></div><div class="a" style="left:423px;top:89px;width:1170px;height:969px;background:#2e2e2e;"></div><div class="a" style="left:447px;top:94px;width:168px;height:20px;background:#3c3c3c;"></div><div class="a" style="left:447px;top:113px;width:168px;height:2px;background:#d8d8d8;"></div><div class="a" style="left:615px;top:116px;width:975px;height:1px;background:#5a5a5a;"></div><svg class="a" style="left:450px;top:96px;" width="14" height="16" viewBox="0 0 14 16"><path d="M1 1 H9 L13 5 V15 H1 Z" fill="#f26b3a"/><path d="M3 4 L10 7 L10 12 L3 13 Z" fill="#fff"/><path d="M4 11 V6 L7 9 L10 6 V11" fill="none" stroke="#333" stroke-width="1.3"/></svg><div class="t" style="left:466px;top:97px;color:#e6e6e6;font-size:12px;">* Kimiko</div><svg class="a" style="left:598px;top:98px;" width="12" height="12" viewBox="0 0 12 12"><path d="M2 2 L9 9 M9 2 L2 9" stroke="#c8c8c8" stroke-width="1.3"/></svg><div class="t" style="right:1477px;top:103px;color:#c0c0c0;font-size:11px;letter-spacing:-0.6px;">1000</div><div class="a" style="left:438px;top:119px;width:5px;height:1px;background:#a0a0a0;"></div><div class="t" style="right:1477px;top:195px;color:#c0c0c0;font-size:11px;letter-spacing:-0.6px;">900</div><div class="a" style="left:438px;top:211px;width:5px;height:1px;background:#a0a0a0;"></div><div class="t" style="right:1477px;top:286px;color:#c0c0c0;font-size:11px;letter-spacing:-0.6px;">800</div><div class="a" style="left:438px;top:302px;width:5px;height:1px;background:#a0a0a0;"></div><div class="t" style="right:1477px;top:377px;color:#c0c0c0;font-size:11px;letter-spacing:-0.6px;">700</div><div class="a" style="left:438px;top:393px;width:5px;height:1px;background:#a0a0a0;"></div><div class="t" style="right:1477px;top:468px;color:#c0c0c0;font-size:11px;letter-spacing:-0.6px;">600</div><div class="a" style="left:438px;top:484px;width:5px;height:1px;background:#a0a0a0;"></div><div class="t" style="right:1477px;top:559px;color:#c0c0c0;font-size:11px;letter-spacing:-0.6px;">500</div><div class="a" style="left:438px;top:575px;width:5px;height:1px;background:#a0a0a0;"></div><div class="t" style="right:1477px;top:651px;color:#c0c0c0;font-size:11px;letter-spacing:-0.6px;">400</div><div class="a" style="left:438px;top:667px;width:5px;height:1px;background:#a0a0a0;"></div><div class="t" style="right:1477px;top:742px;color:#c0c0c0;font-size:11px;letter-spacing:-0.6px;">300</div><div class="a" style="left:438px;top:758px;width:5px;height:1px;background:#a0a0a0;"></div><div class="t" style="right:1477px;top:833px;color:#c0c0c0;font-size:11px;letter-spacing:-0.6px;">200</div><div class="a" style="left:438px;top:849px;width:5px;height:1px;background:#a0a0a0;"></div><div class="t" style="right:1477px;top:924px;color:#c0c0c0;font-size:11px;letter-spacing:-0.6px;">100</div><div class="a" style="left:438px;top:940px;width:5px;height:1px;background:#a0a0a0;"></div><div class="t" style="right:1477px;top:1015px;color:#c0c0c0;font-size:11px;letter-spacing:-0.6px;">0</div><div class="a" style="left:438px;top:1031px;width:5px;height:1px;background:#a0a0a0;"></div><div class="a" style="left:423px;top:572px;width:21px;height:4px;background:#3a8ee8;clip-path:polygon(0 0,80% 0,100% 100%,0 100%);"></div><div class="a" style="left:423px;top:663px;width:21px;height:4px;background:#3a8ee8;clip-path:polygon(0 0,80% 0,100% 100%,0 100%);"></div><div class="a" style="left:447px;top:117px;width:1143px;height:26px;background:#333333;"></div><svg class="a" style="left:452px;top:119px;" width="36" height="22" viewBox="0 0 36 22"><path d="M4 8 L14 4 L11 17 Z" fill="none" stroke="#e8703a" stroke-width="1.5"/><circle cx="4" cy="8" r="2.5" fill="#333" stroke="#e8703a" stroke-width="1.5"/><circle cx="14" cy="4" r="2.5" fill="#333" stroke="#e8703a" stroke-width="1.5"/><circle cx="11" cy="17" r="2.5" fill="#333" stroke="#e8703a" stroke-width="1.5"/><path d="M22 17 Q20 11 27 11 Q33 10 32 4" fill="none" stroke="#3aa8a8" stroke-width="1.5"/><circle cx="22" cy="17" r="2.3" fill="#333" stroke="#3aa8a8" stroke-width="1.4"/><circle cx="32" cy="4" r="2.3" fill="#333" stroke="#3aa8a8" stroke-width="1.4"/></svg><div class="a" style="left:496px;top:121px;width:1px;height:19px;background:#4a4a4a;"></div><svg class="a" style="left:500px;top:119px;" width="36" height="22" viewBox="0 0 36 22"><path d="M5 6 H10 L9 11 H4 Z M12 6 H16 V11 H11 Z M4 13 H9 L10 18 H4 Z" fill="#8cc63f"/><circle cx="25" cy="12" r="5" fill="none" stroke="#e0405a" stroke-width="2"/><path d="M20 5 L23 8" stroke="#e0405a" stroke-width="2"/><path d="M2 21 L32 2" stroke="#bbb" stroke-width="1"/></svg><div class="a" style="left:544px;top:121px;width:1px;height:19px;background:#4a4a4a;"></div><svg class="a" style="left:557px;top:120px;" width="20" height="20" viewBox="0 0 20 20"><rect x="3" y="3" width="14" height="14" fill="none" stroke="#3aa8c8" stroke-width="1.5"/><rect x="1" y="1" width="4" height="4" fill="#3aa8c8"/><rect x="15" y="1" width="4" height="4" fill="#3aa8c8"/><rect x="1" y="15" width="4" height="4" fill="#3aa8c8"/><rect x="15" y="15" width="4" height="4" fill="#3aa8c8"/><path d="M6 6 L14 14 M14 6 L6 14" stroke="#3aa8c8" stroke-width="1.5"/></svg><div class="a" style="left:592px;top:121px;width:1px;height:19px;background:#4a4a4a;"></div><svg class="a" style="left:597px;top:119px;" width="36" height="22" viewBox="0 0 36 22"><path d="M10 4 V18 M16 4 V18 M6 9 H21 M6 14 H21" stroke="#bbb" stroke-width="1.2"/><path d="M2 21 L30 3" stroke="#bbb" stroke-width="1"/></svg><div class="a" style="left:640px;top:121px;width:1px;height:19px;background:#4a4a4a;"></div><div class="t" style="left:649px;top:123px;color:#d8d8d8;font-size:12px;">Solo</div><svg class="a" style="left:1560px;top:122px;" width="18" height="16" viewBox="0 0 18 16"><path d="M3 14 L6 9 L11 4 L15 8 L10 13 Z" fill="#7a9ae0"/><circle cx="10" cy="9" r="1.5" fill="#333"/><path d="M1 15 L5 11" stroke="#7a9ae0" stroke-width="1.5"/></svg><div class="a" style="left:447px;top:1004px;width:1143px;height:24px;background:#333333;"></div><div class="a" style="left:1590px;top:117px;width:3px;height:913px;background:#555;"></div><div class="a" style="left:445px;top:117px;width:1px;height:913px;background:#555;"></div><div class="a" style="left:445px;top:1028px;width:1148px;height:2px;background:#555;"></div><svg class="a" style="left:450px;top:1009px;" width="18" height="16" viewBox="0 0 18 16"><rect x="1" y="4" width="15" height="10" rx="1" fill="#bdbdbd"/><rect x="5" y="2" width="6" height="3" fill="#bdbdbd"/><circle cx="8.5" cy="9" r="3" fill="#333"/><circle cx="8.5" cy="9" r="1.6" fill="#bdbdbd"/></svg><svg class="a" style="left:474px;top:1008px;" width="18" height="18" viewBox="0 0 18 18"><path d="M3 8 A6 6 0 1 1 6 14" fill="none" stroke="#bdbdbd" stroke-width="1.5"/><circle cx="10" cy="10" r="3" fill="none" stroke="#bdbdbd" stroke-width="1.5"/><path d="M1 5 L3 9 L6 6" fill="none" stroke="#bdbdbd" stroke-width="1.3"/></svg><svg class="a" style="left:497px;top:1008px;" width="22" height="18" viewBox="0 0 22 18"><rect x="1" y="4" width="15" height="10" rx="1" fill="#bdbdbd"/><rect x="5" y="2" width="6" height="3" fill="#bdbdbd"/><circle cx="8.5" cy="9" r="3" fill="#333"/><path d="M17 7 V16 M14 13 L17 16 L20 13" stroke="#bdbdbd" stroke-width="1.6" fill="none"/></svg><svg class="a" style="left:1503px;top:1008px;" width="20" height="18" viewBox="0 0 20 18"><circle cx="10" cy="9" r="7" fill="#8a8a8a" stroke="#bdbdbd" stroke-width="1.4"/></svg><svg class="a" style="left:1527px;top:1012px;" width="10" height="8" viewBox="0 0 10 8"><path d="M1 2 L5 6 L9 2" fill="none" stroke="#bbb" stroke-width="1.2"/></svg><div class="a" style="left:1545px;top:1010px;width:1px;height:14px;background:#4a4a4a;"></div><svg class="a" style="left:1552px;top:1008px;" width="18" height="18" viewBox="0 0 18 18"><path d="M3 2 L16 9 L3 16 Z" fill="#bdbdbd"/></svg><svg class="a" style="left:1575px;top:1012px;" width="10" height="8" viewBox="0 0 10 8"><path d="M1 2 L5 6 L9 2" fill="none" stroke="#bbb" stroke-width="1.2"/></svg><div class="a" style="left:423px;top:1030px;width:1170px;height:28px;background:#2e2e2e;"></div><div class="a" style="left:445px;top:1034px;width:22px;height:23px;background:#ffffff;border:1px solid #000;box-sizing:border-box;"></div><div class="a" style="left:469px;top:1034px;width:50px;height:22px;background:#333333;border:1px solid #4a4a4a;box-sizing:border-box;"></div><div class="t" style="right:1403px;top:1038px;color:#e0e0e0;font-size:12px;">59.4</div><div class="t" style="left:522px;top:1038px;color:#e0e0e0;font-size:12px;">%</div><svg class="a" style="left:546px;top:1037px;" width="16" height="16" viewBox="0 0 16 16"><circle cx="7" cy="7" r="5.5" fill="none" stroke="#c0c0c0" stroke-width="1.3"/><path d="M4 7 H10 M11 11 L14 14" stroke="#c0c0c0" stroke-width="1.3"/></svg><div class="a" style="left:577px;top:1044px;width:54px;height:2px;background:#9a9a9a;"></div><div class="a" style="left:577px;top:1044px;width:16px;height:2px;background:#d8d8d8;"></div><div class="a" style="left:586px;top:1038px;width:13px;height:13px;background:#d0d0d0;border-radius:50%;"></div><svg class="a" style="left:646px;top:1037px;" width="16" height="16" viewBox="0 0 16 16"><circle cx="7" cy="7" r="5.5" fill="none" stroke="#c0c0c0" stroke-width="1.3"/><path d="M4 7 H10 M7 4 V10 M11 11 L14 14" stroke="#c0c0c0" stroke-width="1.3"/></svg><div class="t" style="left:681px;top:1038px;color:#d0d0d0;font-size:11.5px;">1:1</div><svg class="a" style="left:706px;top:1036px;" width="20" height="18" viewBox="0 0 20 18"><path d="M2 6 V2 H6 M14 2 H18 V6 M18 12 V16 H14 M6 16 H2 V12 M2 2 L7 7 M18 2 L13 7 M18 16 L13 11 M2 16 L7 11" fill="none" stroke="#c0c0c0" stroke-width="1.2"/></svg><svg class="a" style="left:732px;top:1036px;" width="20" height="18" viewBox="0 0 20 18"><rect x="3" y="5" width="14" height="8" fill="none" stroke="#c0c0c0" stroke-width="1.3"/><path d="M10 1 V17 M1 9 H19" stroke="#c0c0c0" stroke-width="1.3"/></svg><svg class="a" style="left:758px;top:1036px;" width="20" height="18" viewBox="0 0 20 18"><path d="M2 16 L9 3 L9 16 Z" fill="none" stroke="#c0c0c0" stroke-width="1.3" stroke-dasharray="2 1.5"/><path d="M11 9 L18 3 L18 16 Z" fill="#c0c0c0"/><path d="M4 4 Q9 0 14 3" fill="none" stroke="#c0c0c0" stroke-width="1.2"/></svg><svg class="a" style="left:803px;top:1037px;" width="26" height="16" viewBox="0 0 26 16"><circle cx="8" cy="8" r="5.5" fill="none" stroke="#9a9a9a" stroke-width="1.5"/><circle cx="15" cy="8" r="6" fill="#c0c0c0"/></svg><svg class="a" style="left:830px;top:1041px;" width="10" height="8" viewBox="0 0 10 8"><path d="M1 2 L5 6 L9 2" fill="none" stroke="#bbb" stroke-width="1.2"/></svg><svg class="a" style="left:1559px;top:1036px;" width="22" height="18" viewBox="0 0 22 18"><rect x="2" y="3" width="14" height="4" fill="#c0c0c0"/><rect x="2" y="9" width="4" height="5" fill="#c0c0c0"/><rect x="7" y="9" width="4" height="5" fill="#c0c0c0"/><rect x="12" y="9" width="4" height="5" fill="#c0c0c0"/></svg><svg class="a" style="left:1578px;top:1040px;" width="10" height="8" viewBox="0 0 10 8"><path d="M1 2 L5 6 L9 2" fill="none" stroke="#bbb" stroke-width="1.2"/></svg>
<svg class="a" style="left:447px;top:143px" width="1143" height="861" viewBox="447 143 1143 861"><defs><linearGradient id="thighG" x1="462" y1="0" x2="886" y2="0" gradientUnits="userSpaceOnUse"><stop offset="0" stop-color="#e8aabe"/><stop offset="0.08" stop-color="#f3d4dd"/><stop offset="0.25" stop-color="#fbf0f1"/><stop offset="0.5" stop-color="#fdf6f5"/><stop offset="0.78" stop-color="#f8e6ea"/><stop offset="0.94" stop-color="#f2d2db"/><stop offset="1" stop-color="#ebbfcd"/></linearGradient><linearGradient id="purG" x1="0" y1="270" x2="0" y2="650" gradientUnits="userSpaceOnUse"><stop offset="0" stop-color="#6a2fc4"/><stop offset="0.25" stop-color="#5a26ae"/><stop offset="0.5" stop-color="#36195e"/><stop offset="0.7" stop-color="#221236"/><stop offset="0.86" stop-color="#3f2766"/><stop offset="1" stop-color="#2a173f"/></linearGradient><linearGradient id="purH" x1="447" y1="0" x2="630" y2="0" gradientUnits="userSpaceOnUse"><stop offset="0" stop-color="#000" stop-opacity="0"/><stop offset="0.6" stop-color="#000" stop-opacity="0.1"/><stop offset="1" stop-color="#000" stop-opacity="0.4"/></linearGradient><linearGradient id="armG" x1="800" y1="230" x2="990" y2="170" gradientUnits="userSpaceOnUse"><stop offset="0" stop-color="#e6b6c6"/><stop offset="0.15" stop-color="#f0d2dc"/><stop offset="0.5" stop-color="#f4e0e6"/><stop offset="0.85" stop-color="#f2dae2"/><stop offset="1" stop-color="#ecc8d4"/></linearGradient><linearGradient id="laceG" x1="600" y1="200" x2="700" y2="360" gradientUnits="userSpaceOnUse"><stop offset="0" stop-color="#70607a"/><stop offset="0.35" stop-color="#c4b4d6"/><stop offset="1" stop-color="#b4a2c8"/></linearGradient><filter id="b2" filterUnits="userSpaceOnUse" x="400" y="100" width="1250" height="950"><feGaussianBlur stdDeviation="2"/></filter><filter id="b4" filterUnits="userSpaceOnUse" x="400" y="100" width="1250" height="950"><feGaussianBlur stdDeviation="4"/></filter><filter id="b8" filterUnits="userSpaceOnUse" x="400" y="100" width="1250" height="950"><feGaussianBlur stdDeviation="8"/></filter><pattern id="net" width="4" height="3.5" patternUnits="userSpaceOnUse"><circle cx="2" cy="1.75" r="1.5" fill="none" stroke="#4a4050" stroke-width="0.6" opacity="0.55"/></pattern><clipPath id="cv"><rect x="447" y="143" width="1143" height="861"/></clipPath></defs><g clip-path="url(#cv)"><rect x="447" y="143" width="1143" height="861" fill="#fff"/><path d="M447,640 C452,700 455,800 456,900 L458,1004 L447,1004 Z" fill="#ebbccb"/><path d="M451,650 C454,700 456,800 457,900 L459,1004" fill="none" stroke="#8a8088" stroke-width="1.5"/><path d="M447,138 L693,138 C700,160 706,175 722,200 C733.3,218.8 772.5,278.5 790.0,313.0 C807.5,347.5 817.0,377.5 827.0,407.0 C837.0,436.5 843.5,464.5 850.0,490.0 C856.5,515.5 861.5,535.0 866.0,560.0 C870.5,585.0 874.2,615.0 877.0,640.0 C879.8,665.0 881.8,688.3 883.0,710.0 C884.2,731.7 885.2,750.0 884.0,770.0 C882.8,790.0 879.7,811.7 876.0,830.0 C872.3,848.3 867.2,861.5 862.0,880.0 C856.8,898.5 851.7,919.7 845.0,941.0 C838.3,962.3 825.8,996.8 822.0,1008.0  L491,1008 C478,940 466,880 467,820 C466,760 468,700 470,650 L447,647 Z" fill="url(#thighG)"/><clipPath id="thc"><path d="M447,138 L693,138 C700,160 706,175 722,200 C733.3,218.8 772.5,278.5 790.0,313.0 C807.5,347.5 817.0,377.5 827.0,407.0 C837.0,436.5 843.5,464.5 850.0,490.0 C856.5,515.5 861.5,535.0 866.0,560.0 C870.5,585.0 874.2,615.0 877.0,640.0 C879.8,665.0 881.8,688.3 883.0,710.0 C884.2,731.7 885.2,750.0 884.0,770.0 C882.8,790.0 879.7,811.7 876.0,830.0 C872.3,848.3 867.2,861.5 862.0,880.0 C856.8,898.5 851.7,919.7 845.0,941.0 C838.3,962.3 825.8,996.8 822.0,1008.0  L491,1008 C478,940 466,880 467,820 C466,760 468,700 470,650 L447,647 Z"/></clipPath><g clip-path="url(#thc)"><path d="M447,138 L693,138 C700,160 706,175 722,200 L650,240 L560,270 L447,285 Z" fill="#f5e2e6"/><path d="M470,160 C520,170 560,200 600,200" fill="none" stroke="#fbf2f3" stroke-width="40" filter="url(#b8)"/><path d="M460,272 C540,265 600,250 700,212" fill="none" stroke="#ecc6cf" stroke-width="16" filter="url(#b4)"/><path d="M670,140 C685,180 695,200 705,215" fill="none" stroke="#efcad3" stroke-width="20" opacity="0.7" filter="url(#b8)"/></g><path d="M722.0,200.0 C733.3,218.8 772.5,278.5 790.0,313.0 C807.5,347.5 817.0,377.5 827.0,407.0 C837.0,436.5 843.5,464.5 850.0,490.0 C856.5,515.5 861.5,535.0 866.0,560.0 C870.5,585.0 874.2,615.0 877.0,640.0 C879.8,665.0 881.8,688.3 883.0,710.0 C884.2,731.7 885.2,750.0 884.0,770.0 C882.8,790.0 879.7,811.7 876.0,830.0 C872.3,848.3 867.2,861.5 862.0,880.0 C856.8,898.5 851.7,919.7 845.0,941.0 C838.3,962.3 825.8,996.8 822.0,1008.0 " fill="none" stroke="#8a7e84" stroke-width="3"/><path d="M693,140 C700,160 706,175 722,200" fill="none" stroke="#d0a8b4" stroke-width="1.5"/><path d="M491,1006 C478,940 466,880 467,820 C466,760 468,700 470,650" fill="none" stroke="#9a8088" stroke-width="1.6"/><g clip-path="url(#thc)"><path d="M506,622 C530,600 558,586 620,555 C650,540 687,524 739,506 C760,500 790,490 830,480" fill="none" stroke="#dc98ae" stroke-width="5" opacity="0.6" filter="url(#b4)"/><path d="M515,600 C560,570 620,530 700,500 C740,485 780,470 840,455" fill="none" stroke="#eab8c6" stroke-width="30" opacity="0.5" filter="url(#b8)"/><path d="M560,550 C600,510 650,470 710,440 C750,420 790,400 840,390" fill="none" stroke="#e9b6c4" stroke-width="60" filter="url(#b8)" opacity="0.75"/></g><path d="M684,714 L674,790 L664,850 L652,920 L641,988 L650,988 L662,915 L675,845 L684,780 L689,714 Z" fill="#fff" filter="url(#b2)"/><path d="M684,720 L675,790 L666,850 L655,915 L645,982 L649,982 L660,915 L671,845 L681,780 L687,720 Z" fill="#fff"/><path d="M540,283 L590,264 L627,250 L690,219 L720,199 L794,314 L720,372 L640,400 L600,380 L560,320 Z" fill="url(#laceG)"/><path d="M540,283 L590,264 L627,250 L690,219 L720,199 L794,314 L720,372 L640,400 L600,380 L560,320 Z" fill="url(#net)"/><path d="M447,285 L500,283 L527,280 L556,271 C562,285 572,300 590,327 C600,340 615,358 633,380 L610,395 L590,410 L570,430 L555,465 L542,500 L525,525 L514,548 L518,568 C512,595 502,622 480,643 C468,651 458,651 447,648 Z" fill="url(#purG)"/><path d="M447,285 L500,283 L527,280 L556,271 C562,285 572,300 590,327 C600,340 615,358 633,380 L610,395 L590,410 L570,430 L555,465 L542,500 L525,525 L514,548 L518,568 C512,595 502,622 480,643 C468,651 458,651 447,648 Z" fill="url(#purH)"/><path d="M455,330 C480,320 520,318 555,335" fill="none" stroke="#8a58e0" stroke-width="10" opacity="0.35" filter="url(#b4)"/><path d="M518,570 C512,597 502,623 480,644 C468,652 458,652 447,649" fill="none" stroke="#130a1e" stroke-width="3"/><path d="M500,286 C530,290 550,292 566,298 C580,318 600,345 630,378" fill="none" stroke="#7a48d0" stroke-width="5"/><path d="M500,286 C530,290 550,292 566,298 C580,318 600,345 630,378" fill="none" stroke="#141018" stroke-width="1.6"/><path d="M447,286 C480,284 510,283 527,281 C550,277 575,268 590,262 C620,250 650,235 690,218 L720,197" fill="none" stroke="#101010" stroke-width="3"/><path d="M720,197 C745,240 770,280 794,314" fill="none" stroke="#2a2a2a" stroke-width="3"/><path d="M800.0,321.0 C796.8,324.8 787.2,338.2 781.0,344.0 C774.8,349.8 770.5,351.5 763.0,356.0 C755.5,360.5 745.5,365.8 736.0,371.0 C726.5,376.2 716.2,380.7 706.0,387.0 C695.8,393.3 683.3,401.2 675.0,409.0 C666.7,416.8 661.7,425.7 656.0,434.0 C650.3,442.3 645.2,451.7 641.0,459.0 C636.8,466.3 634.8,472.0 631.0,478.0 C627.2,484.0 622.5,490.3 618.0,495.0 C613.5,499.7 608.7,501.7 604.0,506.0 C599.3,510.3 594.7,515.8 590.0,521.0 C585.3,526.2 580.7,531.8 576.0,537.0 C571.3,542.2 566.2,547.2 562.0,552.0 C557.8,556.8 554.5,561.3 551.0,566.0 C547.5,570.7 543.7,576.2 541.0,580.0 C538.3,583.8 536.0,587.5 535.0,589.0 " fill="none" stroke="#e0a0b2" stroke-width="14" opacity="0.7" filter="url(#b2)"/><path d="M797.0,316.0 C795.1,318.3 781.7,335.5 778.0,339.0 C774.3,342.5 764.5,348.3 760.0,351.0 C755.5,353.7 738.7,362.9 733.0,366.0 C727.3,369.1 709.1,378.2 703.0,382.0 C696.9,385.8 677.0,399.3 672.0,404.0 C667.0,408.7 656.4,424.0 653.0,429.0 C649.6,434.0 640.5,449.6 638.0,454.0 C635.5,458.4 630.3,469.4 628.0,473.0 C625.7,476.6 617.7,487.2 615.0,490.0 C612.3,492.8 603.8,498.4 601.0,501.0 C598.2,503.6 589.8,512.9 587.0,516.0 C584.2,519.1 575.8,528.9 573.0,532.0 C570.2,535.1 561.5,544.1 559.0,547.0 C556.5,549.9 550.1,558.2 548.0,561.0 C545.9,563.8 539.6,572.7 538.0,575.0 C536.4,577.3 532.6,583.1 532.0,584.0 " fill="none" stroke="#6a4a56" stroke-width="13" opacity="0.65"/><path d="M802.0,322.0 C798.8,325.8 789.2,339.2 783.0,345.0 C776.8,350.8 772.5,352.5 765.0,357.0 C757.5,361.5 747.5,366.8 738.0,372.0 C728.5,377.2 718.2,381.7 708.0,388.0 C697.8,394.3 685.3,402.2 677.0,410.0 C668.7,417.8 663.7,426.7 658.0,435.0 C652.3,443.3 647.2,452.7 643.0,460.0 C638.8,467.3 636.8,473.0 633.0,479.0 C629.2,485.0 624.5,491.3 620.0,496.0 C615.5,500.7 610.7,502.7 606.0,507.0 C601.3,511.3 596.7,516.8 592.0,522.0 C587.3,527.2 582.7,532.8 578.0,538.0 C573.3,543.2 568.2,548.2 564.0,553.0 C559.8,557.8 556.5,562.3 553.0,567.0 C549.5,571.7 545.7,577.2 543.0,581.0 C540.3,584.8 538.0,588.5 537.0,590.0 " fill="none" stroke="#1a1418" stroke-width="4" stroke-dasharray="1 1.8" /><path d="M794.0,312.0 C792.5,316.5 778.7,331.5 775.0,335.0 C771.3,338.5 761.5,344.3 757.0,347.0 C752.5,349.7 735.7,358.9 730.0,362.0 C724.3,365.1 706.1,374.2 700.0,378.0 C693.9,381.8 674.0,395.3 669.0,400.0 C664.0,404.7 653.4,420.0 650.0,425.0 C646.6,430.0 637.5,445.6 635.0,450.0 C632.5,454.4 627.3,465.4 625.0,469.0 C622.7,472.6 614.7,483.2 612.0,486.0 C609.3,488.8 600.8,494.4 598.0,497.0 C595.2,499.6 586.8,508.9 584.0,512.0 C581.2,515.1 572.8,524.9 570.0,528.0 C567.2,531.1 558.5,540.1 556.0,543.0 C553.5,545.9 547.1,554.2 545.0,557.0 C542.9,559.8 536.6,568.7 535.0,571.0 C533.4,573.3 530.5,579.9 529.0,580.0 C527.5,580.1 521.5,575.2 520.0,572.0 C518.5,568.8 513.5,552.7 514.0,548.0 C514.5,543.3 522.2,529.8 525.0,525.0 C527.8,520.2 539.0,506.0 542.0,500.0 C545.0,494.0 552.2,472.0 555.0,465.0 C557.8,458.0 566.5,435.5 570.0,430.0 C573.5,424.5 586.0,413.5 590.0,410.0 C594.0,406.5 606.3,398.4 610.0,395.0 C613.7,391.6 624.6,381.5 627.0,376.0 C629.4,370.5 631.5,346.4 634.0,340.0 C636.5,333.6 647.4,317.0 652.0,312.0 C656.6,307.0 674.7,294.0 680.0,290.0 C685.3,286.0 700.0,275.5 705.0,272.0 C710.0,268.5 725.0,257.2 730.0,255.0 C735.0,252.8 750.2,249.3 755.0,250.0 C759.8,250.7 774.5,258.0 778.0,262.0 C781.5,266.0 788.4,285.0 790.0,290.0 C791.6,295.0 795.5,307.5 794.0,312.0 Z" fill="#2e2a36"/><g fill="#42404e" stroke="#0c0c10" stroke-width="1.5"><ellipse cx="671.6" cy="319.0" rx="10.2" ry="7.6" transform="rotate(8 671.6 319.0)"/><ellipse cx="664.8" cy="327.1" rx="7.9" ry="6.8" transform="rotate(91 664.8 327.1)"/><ellipse cx="654.1" cy="316.6" rx="11.6" ry="5.6" transform="rotate(187 654.1 316.6)"/><ellipse cx="662.5" cy="307.3" rx="8.7" ry="7.3" transform="rotate(257 662.5 307.3)"/><ellipse cx="667.3" cy="311.3" rx="9.5" ry="5.7" transform="rotate(289 667.3 311.3)"/><circle cx="665" cy="318" r="3.9"/><ellipse cx="708.9" cy="291.2" rx="9.6" ry="6.3" transform="rotate(35 708.9 291.2)"/><ellipse cx="701.6" cy="291.8" rx="11.6" ry="7.2" transform="rotate(77 701.6 291.8)"/><ellipse cx="692.5" cy="290.0" rx="9.9" ry="8.0" transform="rotate(147 692.5 290.0)"/><ellipse cx="696.5" cy="276.0" rx="10.7" ry="8.3" transform="rotate(249 696.5 276.0)"/><ellipse cx="707.4" cy="281.3" rx="9.1" ry="7.8" transform="rotate(333 707.4 281.3)"/><circle cx="700" cy="285" r="3.9"/><ellipse cx="738.4" cy="268.4" rx="8.2" ry="6.3" transform="rotate(3 738.4 268.4)"/><ellipse cx="732.1" cy="275.8" rx="12.0" ry="8.2" transform="rotate(75 732.1 275.8)"/><ellipse cx="720.5" cy="267.9" rx="11.0" ry="6.4" transform="rotate(180 720.5 267.9)"/><ellipse cx="723.6" cy="261.9" rx="11.7" ry="5.4" transform="rotate(224 723.6 261.9)"/><ellipse cx="733.4" cy="258.0" rx="9.4" ry="7.5" transform="rotate(289 733.4 258.0)"/><circle cx="730" cy="268" r="3.9"/><ellipse cx="773.9" cy="293.2" rx="17.6" ry="11.4" transform="rotate(34 773.9 293.2)"/><ellipse cx="750.9" cy="299.7" rx="20.0" ry="14.0" transform="rotate(109 750.9 299.7)"/><ellipse cx="736.6" cy="284.3" rx="17.0" ry="13.6" transform="rotate(173 736.6 284.3)"/><ellipse cx="754.3" cy="267.5" rx="19.6" ry="11.4" transform="rotate(260 754.3 267.5)"/><ellipse cx="764.8" cy="272.5" rx="14.1" ry="13.7" transform="rotate(309 764.8 272.5)"/><circle cx="757" cy="282" r="7.0"/><ellipse cx="782.2" cy="321.8" rx="13.0" ry="7.3" transform="rotate(21 782.2 321.8)"/><ellipse cx="772.2" cy="326.2" rx="13.3" ry="8.8" transform="rotate(89 772.2 326.2)"/><ellipse cx="759.7" cy="318.5" rx="12.5" ry="8.3" transform="rotate(178 759.7 318.5)"/><ellipse cx="763.7" cy="309.7" rx="10.6" ry="7.4" transform="rotate(225 763.7 309.7)"/><ellipse cx="777.7" cy="309.1" rx="12.5" ry="7.9" transform="rotate(303 777.7 309.1)"/><circle cx="772" cy="318" r="4.3"/><ellipse cx="737.9" cy="302.6" rx="16.3" ry="8.3" transform="rotate(15 737.9 302.6)"/><ellipse cx="727.7" cy="309.3" rx="12.5" ry="7.3" transform="rotate(92 727.7 309.3)"/><ellipse cx="715.2" cy="304.7" rx="17.2" ry="9.7" transform="rotate(160 715.2 304.7)"/><ellipse cx="719.2" cy="290.1" rx="14.8" ry="10.6" transform="rotate(228 719.2 290.1)"/><ellipse cx="738.2" cy="288.9" rx="13.3" ry="8.2" transform="rotate(312 738.2 288.9)"/><circle cx="728" cy="300" r="5.2"/><ellipse cx="712.7" cy="327.6" rx="14.2" ry="8.3" transform="rotate(24 712.7 327.6)"/><ellipse cx="699.0" cy="334.1" rx="12.4" ry="8.6" transform="rotate(95 699.0 334.1)"/><ellipse cx="686.2" cy="319.9" rx="14.9" ry="6.9" transform="rotate(189 686.2 319.9)"/><ellipse cx="695.1" cy="312.9" rx="15.4" ry="7.6" transform="rotate(242 695.1 312.9)"/><ellipse cx="708.3" cy="317.3" rx="12.3" ry="10.2" transform="rotate(331 708.3 317.3)"/><circle cx="700" cy="322" r="4.8"/><ellipse cx="756.2" cy="341.8" rx="11.8" ry="6.6" transform="rotate(27 756.2 341.8)"/><ellipse cx="742.4" cy="345.9" rx="11.6" ry="6.3" transform="rotate(105 742.4 345.9)"/><ellipse cx="734.0" cy="342.2" rx="14.2" ry="9.3" transform="rotate(151 734.0 342.2)"/><ellipse cx="740.4" cy="330.0" rx="11.9" ry="8.5" transform="rotate(232 740.4 330.0)"/><ellipse cx="750.6" cy="330.9" rx="10.1" ry="8.4" transform="rotate(318 750.6 330.9)"/><circle cx="745" cy="336" r="4.3"/><ellipse cx="724.1" cy="350.5" rx="14.4" ry="6.7" transform="rotate(3 724.1 350.5)"/><ellipse cx="715.5" cy="362.5" rx="13.1" ry="7.4" transform="rotate(74 715.5 362.5)"/><ellipse cx="699.8" cy="353.1" rx="10.8" ry="6.0" transform="rotate(166 699.8 353.1)"/><ellipse cx="708.0" cy="341.8" rx="12.7" ry="9.2" transform="rotate(244 708.0 341.8)"/><ellipse cx="716.9" cy="342.8" rx="9.0" ry="8.8" transform="rotate(305 716.9 342.8)"/><circle cx="712" cy="350" r="4.3"/><ellipse cx="692.7" cy="358.8" rx="12.8" ry="9.1" transform="rotate(4 692.7 358.8)"/><ellipse cx="677.2" cy="365.9" rx="9.7" ry="9.3" transform="rotate(109 677.2 365.9)"/><ellipse cx="669.1" cy="362.6" rx="9.7" ry="6.9" transform="rotate(157 669.1 362.6)"/><ellipse cx="676.6" cy="350.0" rx="13.1" ry="9.0" transform="rotate(247 676.6 350.0)"/><ellipse cx="684.9" cy="350.4" rx="8.9" ry="7.3" transform="rotate(303 684.9 350.4)"/><circle cx="680" cy="358" r="4.3"/><ellipse cx="669.5" cy="338.5" rx="11.4" ry="7.1" transform="rotate(3 669.5 338.5)"/><ellipse cx="658.4" cy="347.5" rx="12.5" ry="7.0" transform="rotate(100 658.4 347.5)"/><ellipse cx="651.7" cy="337.5" rx="8.6" ry="5.9" transform="rotate(183 651.7 337.5)"/><ellipse cx="657.7" cy="330.6" rx="11.9" ry="8.2" transform="rotate(252 657.7 330.6)"/><ellipse cx="665.0" cy="332.7" rx="11.1" ry="6.5" transform="rotate(313 665.0 332.7)"/><circle cx="660" cy="338" r="3.9"/><ellipse cx="659.0" cy="391.2" rx="11.1" ry="8.3" transform="rotate(42 659.0 391.2)"/><ellipse cx="651.3" cy="394.1" rx="12.0" ry="9.0" transform="rotate(95 651.3 394.1)"/><ellipse cx="643.9" cy="387.1" rx="12.2" ry="8.0" transform="rotate(166 643.9 387.1)"/><ellipse cx="647.5" cy="378.2" rx="11.3" ry="10.2" transform="rotate(237 647.5 378.2)"/><ellipse cx="663.9" cy="377.7" rx="14.4" ry="8.1" transform="rotate(328 663.9 377.7)"/><circle cx="652" cy="385" r="4.8"/><ellipse cx="638.6" cy="414.1" rx="12.1" ry="7.9" transform="rotate(43 638.6 414.1)"/><ellipse cx="631.7" cy="416.7" rx="10.6" ry="8.1" transform="rotate(92 631.7 416.7)"/><ellipse cx="623.5" cy="411.6" rx="10.8" ry="7.0" transform="rotate(157 623.5 411.6)"/><ellipse cx="629.1" cy="398.0" rx="8.8" ry="8.5" transform="rotate(254 629.1 398.0)"/><ellipse cx="639.7" cy="399.1" rx="11.6" ry="6.9" transform="rotate(311 639.7 399.1)"/><circle cx="632" cy="408" r="4.3"/><ellipse cx="618.5" cy="435.1" rx="10.3" ry="7.6" transform="rotate(38 618.5 435.1)"/><ellipse cx="609.1" cy="437.4" rx="10.7" ry="7.7" transform="rotate(111 609.1 437.4)"/><ellipse cx="604.2" cy="430.7" rx="13.1" ry="7.8" transform="rotate(175 604.2 430.7)"/><ellipse cx="607.2" cy="421.8" rx="10.5" ry="9.0" transform="rotate(240 607.2 421.8)"/><ellipse cx="619.4" cy="426.3" rx="9.9" ry="8.2" transform="rotate(334 619.4 426.3)"/><circle cx="612" cy="430" r="4.3"/><ellipse cx="601.8" cy="461.9" rx="10.5" ry="6.6" transform="rotate(35 601.8 461.9)"/><ellipse cx="594.4" cy="464.1" rx="12.0" ry="9.0" transform="rotate(75 594.4 464.1)"/><ellipse cx="585.6" cy="459.4" rx="12.5" ry="8.2" transform="rotate(146 585.6 459.4)"/><ellipse cx="586.2" cy="449.8" rx="8.9" ry="8.2" transform="rotate(222 586.2 449.8)"/><ellipse cx="596.4" cy="447.6" rx="12.6" ry="6.2" transform="rotate(301 596.4 447.6)"/><circle cx="592" cy="455" r="4.3"/><ellipse cx="582.1" cy="483.2" rx="9.1" ry="8.2" transform="rotate(25 582.1 483.2)"/><ellipse cx="571.9" cy="489.4" rx="11.0" ry="8.3" transform="rotate(108 571.9 489.4)"/><ellipse cx="567.5" cy="484.8" rx="14.0" ry="9.2" transform="rotate(147 567.5 484.8)"/><ellipse cx="569.3" cy="475.5" rx="13.2" ry="7.4" transform="rotate(218 569.3 475.5)"/><ellipse cx="583.8" cy="473.4" rx="11.3" ry="8.4" transform="rotate(323 583.8 473.4)"/><circle cx="575" cy="480" r="4.3"/><ellipse cx="562.5" cy="508.4" rx="11.4" ry="9.0" transform="rotate(28 562.5 508.4)"/><ellipse cx="552.6" cy="515.5" rx="12.3" ry="8.8" transform="rotate(108 552.6 515.5)"/><ellipse cx="547.2" cy="508.7" rx="12.4" ry="8.8" transform="rotate(157 547.2 508.7)"/><ellipse cx="550.8" cy="498.6" rx="10.3" ry="7.4" transform="rotate(231 550.8 498.6)"/><ellipse cx="560.2" cy="494.9" rx="13.9" ry="7.0" transform="rotate(293 560.2 494.9)"/><circle cx="556" cy="505" r="4.3"/><ellipse cx="547.0" cy="536.7" rx="11.8" ry="9.3" transform="rotate(44 547.0 536.7)"/><ellipse cx="537.4" cy="539.9" rx="13.1" ry="7.5" transform="rotate(105 537.4 539.9)"/><ellipse cx="531.5" cy="530.4" rx="9.1" ry="8.0" transform="rotate(177 531.5 530.4)"/><ellipse cx="535.0" cy="521.4" rx="9.4" ry="9.2" transform="rotate(240 535.0 521.4)"/><ellipse cx="545.1" cy="518.2" rx="10.5" ry="6.8" transform="rotate(293 545.1 518.2)"/><circle cx="540" cy="530" r="4.3"/><ellipse cx="536.4" cy="563.9" rx="11.5" ry="8.3" transform="rotate(43 536.4 563.9)"/><ellipse cx="529.9" cy="566.8" rx="11.1" ry="6.2" transform="rotate(80 529.9 566.8)"/><ellipse cx="521.0" cy="557.1" rx="12.0" ry="7.3" transform="rotate(171 521.0 557.1)"/><ellipse cx="522.2" cy="551.0" rx="9.4" ry="6.8" transform="rotate(221 522.2 551.0)"/><ellipse cx="531.9" cy="548.9" rx="10.7" ry="5.7" transform="rotate(299 531.9 548.9)"/><circle cx="528" cy="556" r="3.9"/><ellipse cx="606.5" cy="414.5" rx="8.8" ry="6.3" transform="rotate(35 606.5 414.5)"/><ellipse cx="601.9" cy="419.8" rx="7.5" ry="6.2" transform="rotate(79 601.9 419.8)"/><ellipse cx="593.6" cy="409.1" rx="10.2" ry="7.5" transform="rotate(188 593.6 409.1)"/><ellipse cx="598.9" cy="402.7" rx="9.9" ry="7.4" transform="rotate(262 598.9 402.7)"/><ellipse cx="607.2" cy="403.2" rx="10.2" ry="4.7" transform="rotate(317 607.2 403.2)"/><circle cx="600" cy="410" r="3.5"/><ellipse cx="633.4" cy="447.4" rx="8.0" ry="5.2" transform="rotate(16 633.4 447.4)"/><ellipse cx="625.4" cy="450.7" rx="8.8" ry="5.1" transform="rotate(86 625.4 450.7)"/><ellipse cx="619.8" cy="444.6" rx="9.6" ry="4.3" transform="rotate(184 619.8 444.6)"/><ellipse cx="623.1" cy="438.3" rx="9.1" ry="5.2" transform="rotate(254 623.1 438.3)"/><ellipse cx="628.8" cy="436.9" rx="8.7" ry="4.6" transform="rotate(295 628.8 436.9)"/><circle cx="625" cy="445" r="3.0"/><ellipse cx="696.8" cy="381.5" rx="9.9" ry="7.2" transform="rotate(27 696.8 381.5)"/><ellipse cx="688.8" cy="385.0" rx="8.8" ry="6.7" transform="rotate(100 688.8 385.0)"/><ellipse cx="679.3" cy="380.4" rx="10.8" ry="7.9" transform="rotate(168 679.3 380.4)"/><ellipse cx="685.5" cy="372.0" rx="9.3" ry="5.3" transform="rotate(233 685.5 372.0)"/><ellipse cx="695.6" cy="369.9" rx="12.2" ry="6.0" transform="rotate(305 695.6 369.9)"/><circle cx="690" cy="378" r="3.9"/></g><g stroke="#6a5cd0" stroke-width="1.6" fill="none" opacity="0.75"><path d="M665.5,318.1 L677.6,319.8"/><path d="M664.9,322.3 L664.7,331.8"/><path d="M661.0,317.5 L647.2,315.8"/><path d="M663.7,312.4 L661.3,302.2"/><path d="M665.5,316.6 L669.2,305.9"/><path d="M704.1,287.9 L713.6,294.5"/><path d="M700.0,285.0 L703.1,298.5"/><path d="M697.4,286.7 L687.5,293.3"/><path d="M698.8,282.0 L694.2,270.0"/><path d="M702.5,283.7 L712.3,278.8"/><path d="M733.5,268.2 L743.3,268.7"/><path d="M730.2,268.8 L733.9,282.7"/><path d="M727.2,268.0 L713.9,267.9"/><path d="M728.7,266.7 L718.6,257.1"/><path d="M731.6,263.4 L735.3,252.7"/><path d="M765.1,287.4 L782.7,299.1"/><path d="M754.8,288.3 L747.0,311.0"/><path d="M746.8,283.2 L726.5,285.5"/><path d="M756.5,279.1 L752.2,256.0"/><path d="M759.4,279.0 L770.1,265.9"/><path d="M774.9,319.1 L789.4,324.6"/><path d="M772.0,318.2 L772.3,334.2"/><path d="M767.2,318.2 L752.2,318.8"/><path d="M768.2,314.2 L759.2,305.2"/><path d="M773.6,315.4 L781.7,302.8"/><path d="M728.4,300.1 L747.4,305.0"/><path d="M727.9,301.8 L727.4,316.8"/><path d="M724.9,301.1 L705.5,308.3"/><path d="M725.1,296.7 L713.3,283.4"/><path d="M732.8,294.8 L743.6,283.0"/><path d="M704.9,324.2 L720.5,331.0"/><path d="M699.6,326.6 L698.4,341.5"/><path d="M695.1,321.3 L677.4,318.6"/><path d="M699.5,321.1 L690.7,304.8"/><path d="M701.9,320.9 L714.7,313.7"/><path d="M749.9,338.6 L762.6,345.1"/><path d="M744.2,339.2 L740.6,352.7"/><path d="M741.4,338.0 L726.5,346.4"/><path d="M744.8,335.7 L736.1,324.4"/><path d="M746.1,335.0 L755.1,326.9"/><path d="M715.5,350.2 L732.8,350.9"/><path d="M713.3,354.9 L717.6,370.1"/><path d="M706.1,351.5 L693.6,354.6"/><path d="M711.4,348.7 L704.7,335.0"/><path d="M713.9,347.3 L720.0,338.4"/><path d="M685.1,358.3 L700.4,359.3"/><path d="M679.2,360.4 L675.3,371.4"/><path d="M674.4,360.3 L663.7,364.8"/><path d="M679.7,357.2 L673.5,342.8"/><path d="M682.0,354.9 L687.7,346.0"/><path d="M662.7,338.1 L676.4,338.9"/><path d="M659.6,340.1 L657.1,354.9"/><path d="M656.8,337.8 L646.5,337.2"/><path d="M659.8,337.4 L655.5,323.9"/><path d="M660.4,337.5 L669.5,327.8"/><path d="M654.1,386.8 L664.0,395.7"/><path d="M651.8,387.0 L650.7,401.3"/><path d="M651.0,385.3 L636.8,388.9"/><path d="M651.3,383.9 L643.8,372.6"/><path d="M656.5,382.2 L671.3,373.2"/><path d="M633.3,409.2 L643.9,419.1"/><path d="M631.9,410.3 L631.4,423.1"/><path d="M629.4,409.1 L617.5,414.1"/><path d="M630.6,403.1 L627.7,392.9"/><path d="M635.2,404.4 L644.3,393.9"/><path d="M613.6,431.3 L623.3,439.0"/><path d="M611.4,431.4 L606.8,443.3"/><path d="M612.0,430.0 L596.3,431.3"/><path d="M610.4,427.3 L604.0,416.4"/><path d="M614.1,429.0 L624.7,423.7"/><path d="M596.7,458.3 L607.0,465.5"/><path d="M592.6,457.2 L596.2,471.1"/><path d="M591.8,455.2 L579.4,463.6"/><path d="M590.1,453.3 L582.2,446.3"/><path d="M592.6,454.0 L600.3,441.1"/><path d="M577.1,481.0 L587.0,485.5"/><path d="M574.0,483.1 L569.8,495.7"/><path d="M574.6,480.3 L560.5,489.3"/><path d="M575.5,480.4 L563.0,470.7"/><path d="M578.4,477.5 L589.2,469.3"/><path d="M556.4,505.2 L568.6,511.6"/><path d="M554.9,508.5 L550.4,522.6"/><path d="M554.0,505.8 L540.4,511.5"/><path d="M554.7,503.4 L546.9,493.9"/><path d="M557.0,502.6 L563.4,487.2"/><path d="M541.9,531.8 L552.1,541.6"/><path d="M539.4,532.3 L535.5,547.4"/><path d="M537.0,530.2 L526.0,530.7"/><path d="M537.9,526.3 L532.2,516.5"/><path d="M542.6,524.0 L547.5,512.4"/><path d="M531.4,559.2 L541.5,568.6"/><path d="M528.8,560.3 L531.1,573.4"/><path d="M528.1,556.0 L513.9,558.1"/><path d="M526.4,554.7 L518.0,547.3"/><path d="M528.8,554.5 L534.9,543.3"/><path d="M602.1,411.5 L610.9,417.5"/><path d="M601.0,415.3 L602.7,424.2"/><path d="M599.7,410.0 L587.6,408.2"/><path d="M599.8,408.5 L598.1,396.8"/><path d="M602.7,407.4 L611.6,399.0"/><path d="M628.8,446.1 L638.0,448.7"/><path d="M625.0,445.4 L625.8,456.0"/><path d="M625.5,445.0 L614.0,444.1"/><path d="M624.6,443.6 L621.5,433.1"/><path d="M626.6,441.6 L631.0,432.2"/><path d="M691.5,378.8 L702.1,384.2"/><path d="M689.7,379.8 L687.9,390.2"/><path d="M685.6,379.0 L672.9,381.7"/><path d="M688.8,376.5 L682.1,367.6"/><path d="M691.4,375.9 L699.8,363.9"/></g><g fill="#2e2c38" stroke="#0c0c10" stroke-width="1"><ellipse cx="676" cy="262" rx="4" ry="10" transform="rotate(-20 676 262)"/><ellipse cx="688" cy="275" rx="4" ry="9" transform="rotate(30 688 275)"/><ellipse cx="650" cy="295" rx="3" ry="9" transform="rotate(-10 650 295)"/><ellipse cx="714" cy="255" rx="4" ry="9" transform="rotate(20 714 255)"/></g><g fill="#34323e" stroke="#0c0c10" stroke-width="1.2"><ellipse cx="712.3" cy="208.3" rx="8.8" ry="6.4" transform="rotate(32 712.3 208.3)"/><ellipse cx="706.2" cy="210.3" rx="8.1" ry="4.0" transform="rotate(99 706.2 210.3)"/><ellipse cx="702.5" cy="208.2" rx="7.5" ry="4.3" transform="rotate(144 702.5 208.2)"/><ellipse cx="703.4" cy="200.3" rx="8.1" ry="5.0" transform="rotate(232 703.4 200.3)"/><ellipse cx="710.3" cy="202.5" rx="9.5" ry="5.7" transform="rotate(323 710.3 202.5)"/><circle cx="707" cy="205" r="3.0"/><ellipse cx="695.2" cy="229.8" rx="8.8" ry="5.1" transform="rotate(19 695.2 229.8)"/><ellipse cx="688.8" cy="233.4" rx="8.7" ry="5.6" transform="rotate(103 688.8 233.4)"/><ellipse cx="686.6" cy="229.4" rx="6.4" ry="4.4" transform="rotate(157 686.6 229.4)"/><ellipse cx="686.7" cy="224.4" rx="8.8" ry="4.0" transform="rotate(227 686.7 224.4)"/><ellipse cx="693.4" cy="223.2" rx="5.9" ry="4.4" transform="rotate(305 693.4 223.2)"/><circle cx="690" cy="228" r="2.7"/><ellipse cx="665.1" cy="252.4" rx="8.5" ry="4.2" transform="rotate(25 665.1 252.4)"/><ellipse cx="657.9" cy="254.3" rx="5.9" ry="4.0" transform="rotate(116 657.9 254.3)"/><ellipse cx="654.4" cy="251.6" rx="5.6" ry="4.1" transform="rotate(164 654.4 251.6)"/><ellipse cx="658.3" cy="244.4" rx="6.1" ry="3.7" transform="rotate(253 658.3 244.4)"/><ellipse cx="664.3" cy="246.2" rx="5.6" ry="4.8" transform="rotate(318 664.3 246.2)"/><circle cx="660" cy="250" r="2.7"/><ellipse cx="636.6" cy="262.5" rx="5.2" ry="3.5" transform="rotate(7 636.6 262.5)"/><ellipse cx="631.4" cy="267.4" rx="4.9" ry="3.4" transform="rotate(97 631.4 267.4)"/><ellipse cx="627.4" cy="264.3" rx="5.6" ry="3.7" transform="rotate(153 627.4 264.3)"/><ellipse cx="629.0" cy="257.7" rx="5.7" ry="4.1" transform="rotate(236 629.0 257.7)"/><ellipse cx="634.8" cy="258.6" rx="6.2" ry="4.8" transform="rotate(310 634.8 258.6)"/><circle cx="632" cy="262" r="2.4"/><ellipse cx="608.3" cy="272.5" rx="3.9" ry="3.7" transform="rotate(9 608.3 272.5)"/><ellipse cx="604.9" cy="276.2" rx="5.2" ry="2.7" transform="rotate(91 604.9 276.2)"/><ellipse cx="602.1" cy="271.7" rx="5.1" ry="3.5" transform="rotate(186 602.1 271.7)"/><ellipse cx="602.9" cy="270.2" rx="4.6" ry="2.9" transform="rotate(221 602.9 270.2)"/><ellipse cx="606.5" cy="269.6" rx="4.5" ry="3.9" transform="rotate(302 606.5 269.6)"/><circle cx="605" cy="272" r="1.8"/></g><path d="M447,270 C455,272 462,280 470,284 C478,276 488,268 497,275 C500,290 494,300 484,302 C478,302 474,298 470,296 C472,308 470,316 462,322 L447,318 Z" fill="#2a2a2e" stroke="#0e0e0e" stroke-width="1.5"/><ellipse cx="469" cy="290" rx="6" ry="6" fill="#444"/><path d="M777.0,138.0 C778.9,144.1 788.8,176.9 793.0,190.0 C797.2,203.1 807.9,237.5 813.0,250.0 C818.1,262.5 830.4,285.7 837.0,297.0 C843.6,308.3 861.8,335.0 870.0,347.0 C878.2,359.0 900.9,391.5 907.0,400.0 C913.1,408.5 917.0,412.4 922.0,420.0 C927.0,427.6 943.8,455.7 950.0,465.0 C956.2,474.3 969.2,492.1 975.0,500.0 C980.8,507.9 994.8,525.6 1000.0,533.0 C1005.2,540.4 1016.7,557.5 1020.0,563.0 C1023.3,568.5 1026.7,574.2 1028.0,580.0 C1029.3,585.8 1030.8,605.2 1031.0,613.0 C1031.2,620.8 1030.3,639.2 1030.0,647.0 C1029.7,654.8 1026.5,672.6 1028.0,680.0 C1029.5,687.4 1038.1,702.6 1043.0,710.0 C1047.9,717.4 1063.3,736.8 1070.0,743.0 C1076.7,749.2 1093.8,759.0 1100.0,763.0 C1106.2,767.0 1118.3,774.2 1123.0,777.0 C1127.7,779.8 1136.5,784.3 1140.0,787.0 C1143.5,789.7 1150.9,797.5 1153.0,800.0 C1155.1,802.5 1158.7,808.5 1158.0,808.0 C1157.3,807.5 1150.3,800.1 1147.0,796.0 C1143.7,791.9 1134.0,778.7 1130.0,773.0 C1126.0,767.3 1115.7,752.2 1113.0,747.0 C1110.3,741.8 1108.0,732.1 1107.0,728.0 C1106.0,723.9 1101.0,711.8 1104.0,712.0 C1107.0,712.2 1125.7,724.8 1133.0,730.0 C1140.3,735.2 1160.0,750.4 1167.0,757.0 C1174.0,763.6 1187.6,780.8 1193.0,787.0 C1198.4,793.2 1209.3,805.8 1213.0,810.0 C1216.7,814.2 1222.3,822.3 1225.0,823.0 C1227.7,823.7 1232.2,815.6 1236.0,816.0 C1239.8,816.4 1252.9,823.7 1258.0,826.0 C1263.1,828.3 1276.3,836.7 1280.0,836.0 C1283.7,835.3 1287.2,823.9 1290.0,820.0 C1292.8,816.1 1304.0,807.7 1304.0,803.0 C1304.0,798.3 1295.1,786.5 1290.0,780.0 C1284.9,773.5 1267.3,754.0 1260.0,747.0 C1252.7,740.0 1234.8,727.0 1227.0,720.0 C1219.2,713.0 1200.8,695.5 1193.0,687.0 C1185.2,678.5 1167.0,656.3 1160.0,647.0 C1153.0,637.7 1140.0,618.7 1133.0,607.0 C1126.0,595.3 1106.5,561.0 1100.0,547.0 C1093.5,533.0 1080.8,498.0 1077.0,487.0 C1073.2,476.0 1069.8,460.8 1067.0,453.0 C1064.2,445.2 1055.3,425.4 1053.0,420.0 C1050.7,414.6 1050.0,414.8 1047.0,407.0 C1044.0,399.2 1031.7,366.3 1027.0,353.0 C1022.3,339.7 1011.7,306.2 1007.0,293.0 C1002.3,279.8 992.5,252.4 987.0,240.0 C981.5,227.6 966.3,198.9 960.0,187.0 C953.7,175.1 936.1,143.7 933.0,138.0  Z" fill="url(#armG)"/><clipPath id="armc"><path d="M777.0,138.0 C778.9,144.1 788.8,176.9 793.0,190.0 C797.2,203.1 807.9,237.5 813.0,250.0 C818.1,262.5 830.4,285.7 837.0,297.0 C843.6,308.3 861.8,335.0 870.0,347.0 C878.2,359.0 900.9,391.5 907.0,400.0 C913.1,408.5 917.0,412.4 922.0,420.0 C927.0,427.6 943.8,455.7 950.0,465.0 C956.2,474.3 969.2,492.1 975.0,500.0 C980.8,507.9 994.8,525.6 1000.0,533.0 C1005.2,540.4 1016.7,557.5 1020.0,563.0 C1023.3,568.5 1026.7,574.2 1028.0,580.0 C1029.3,585.8 1030.8,605.2 1031.0,613.0 C1031.2,620.8 1030.3,639.2 1030.0,647.0 C1029.7,654.8 1026.5,672.6 1028.0,680.0 C1029.5,687.4 1038.1,702.6 1043.0,710.0 C1047.9,717.4 1063.3,736.8 1070.0,743.0 C1076.7,749.2 1093.8,759.0 1100.0,763.0 C1106.2,767.0 1118.3,774.2 1123.0,777.0 C1127.7,779.8 1136.5,784.3 1140.0,787.0 C1143.5,789.7 1150.9,797.5 1153.0,800.0 C1155.1,802.5 1158.7,808.5 1158.0,808.0 C1157.3,807.5 1150.3,800.1 1147.0,796.0 C1143.7,791.9 1134.0,778.7 1130.0,773.0 C1126.0,767.3 1115.7,752.2 1113.0,747.0 C1110.3,741.8 1108.0,732.1 1107.0,728.0 C1106.0,723.9 1101.0,711.8 1104.0,712.0 C1107.0,712.2 1125.7,724.8 1133.0,730.0 C1140.3,735.2 1160.0,750.4 1167.0,757.0 C1174.0,763.6 1187.6,780.8 1193.0,787.0 C1198.4,793.2 1209.3,805.8 1213.0,810.0 C1216.7,814.2 1222.3,822.3 1225.0,823.0 C1227.7,823.7 1232.2,815.6 1236.0,816.0 C1239.8,816.4 1252.9,823.7 1258.0,826.0 C1263.1,828.3 1276.3,836.7 1280.0,836.0 C1283.7,835.3 1287.2,823.9 1290.0,820.0 C1292.8,816.1 1304.0,807.7 1304.0,803.0 C1304.0,798.3 1295.1,786.5 1290.0,780.0 C1284.9,773.5 1267.3,754.0 1260.0,747.0 C1252.7,740.0 1234.8,727.0 1227.0,720.0 C1219.2,713.0 1200.8,695.5 1193.0,687.0 C1185.2,678.5 1167.0,656.3 1160.0,647.0 C1153.0,637.7 1140.0,618.7 1133.0,607.0 C1126.0,595.3 1106.5,561.0 1100.0,547.0 C1093.5,533.0 1080.8,498.0 1077.0,487.0 C1073.2,476.0 1069.8,460.8 1067.0,453.0 C1064.2,445.2 1055.3,425.4 1053.0,420.0 C1050.7,414.6 1050.0,414.8 1047.0,407.0 C1044.0,399.2 1031.7,366.3 1027.0,353.0 C1022.3,339.7 1011.7,306.2 1007.0,293.0 C1002.3,279.8 992.5,252.4 987.0,240.0 C981.5,227.6 966.3,198.9 960.0,187.0 C953.7,175.1 936.1,143.7 933.0,138.0  Z"/></clipPath><g clip-path="url(#armc)"><path d="M900,200 C920,300 960,400 1030,520 C1060,570 1080,620 1120,680" fill="none" stroke="#f8ecf0" stroke-width="34" filter="url(#b8)" opacity="0.8"/><path d="M1040,690 C1080,730 1130,750 1180,770 C1220,795 1250,815 1275,830" fill="none" stroke="#e6a6ba" stroke-width="8" filter="url(#b4)" opacity="0.7"/><path d="M1115,718 C1150,730 1180,755 1210,800" fill="none" stroke="#e2a0b4" stroke-width="6" filter="url(#b2)" opacity="0.8"/></g><path d="M777.0,138.0 C778.9,144.1 788.8,176.9 793.0,190.0 C797.2,203.1 807.9,237.5 813.0,250.0 C818.1,262.5 830.4,285.7 837.0,297.0 C843.6,308.3 861.8,335.0 870.0,347.0 C878.2,359.0 900.9,391.5 907.0,400.0 C913.1,408.5 917.0,412.4 922.0,420.0 C927.0,427.6 943.8,455.7 950.0,465.0 C956.2,474.3 969.2,492.1 975.0,500.0 C980.8,507.9 994.8,525.6 1000.0,533.0 C1005.2,540.4 1016.7,557.5 1020.0,563.0 C1023.3,568.5 1026.7,574.2 1028.0,580.0 C1029.3,585.8 1030.8,605.2 1031.0,613.0 C1031.2,620.8 1030.3,639.2 1030.0,647.0 C1029.7,654.8 1026.5,672.6 1028.0,680.0 C1029.5,687.4 1038.1,702.6 1043.0,710.0 C1047.9,717.4 1063.3,736.8 1070.0,743.0 C1076.7,749.2 1093.8,759.0 1100.0,763.0 C1106.2,767.0 1118.3,774.2 1123.0,777.0 C1127.7,779.8 1136.5,784.3 1140.0,787.0 C1143.5,789.7 1150.9,797.5 1153.0,800.0 C1155.1,802.5 1158.7,808.5 1158.0,808.0 C1157.3,807.5 1150.3,800.1 1147.0,796.0 C1143.7,791.9 1134.0,778.7 1130.0,773.0 C1126.0,767.3 1115.7,752.2 1113.0,747.0 C1110.3,741.8 1108.0,732.1 1107.0,728.0 C1106.0,723.9 1101.0,711.8 1104.0,712.0 C1107.0,712.2 1125.7,724.8 1133.0,730.0 C1140.3,735.2 1160.0,750.4 1167.0,757.0 C1174.0,763.6 1187.6,780.8 1193.0,787.0 C1198.4,793.2 1209.3,805.8 1213.0,810.0 C1216.7,814.2 1222.3,822.3 1225.0,823.0 C1227.7,823.7 1232.2,815.6 1236.0,816.0 C1239.8,816.4 1252.9,823.7 1258.0,826.0 C1263.1,828.3 1276.3,836.7 1280.0,836.0 C1283.7,835.3 1287.2,823.9 1290.0,820.0 C1292.8,816.1 1304.0,807.7 1304.0,803.0 C1304.0,798.3 1295.1,786.5 1290.0,780.0 C1284.9,773.5 1267.3,754.0 1260.0,747.0 C1252.7,740.0 1234.8,727.0 1227.0,720.0 C1219.2,713.0 1200.8,695.5 1193.0,687.0 C1185.2,678.5 1167.0,656.3 1160.0,647.0 C1153.0,637.7 1140.0,618.7 1133.0,607.0 C1126.0,595.3 1106.5,561.0 1100.0,547.0 C1093.5,533.0 1080.8,498.0 1077.0,487.0 C1073.2,476.0 1069.8,460.8 1067.0,453.0 C1064.2,445.2 1055.3,425.4 1053.0,420.0 C1050.7,414.6 1050.0,414.8 1047.0,407.0 C1044.0,399.2 1031.7,366.3 1027.0,353.0 C1022.3,339.7 1011.7,306.2 1007.0,293.0 C1002.3,279.8 992.5,252.4 987.0,240.0 C981.5,227.6 966.3,198.9 960.0,187.0 C953.7,175.1 936.1,143.7 933.0,138.0 " fill="none" stroke="#86707a" stroke-width="2.5"/><path d="M1150,740 C1185,765 1215,790 1245,812 M1175,735 C1210,760 1240,785 1275,812" fill="none" stroke="#c48a9c" stroke-width="1.5"/><g fill="#f0b8cc" opacity="0.9"><ellipse cx="1147" cy="797" rx="9" ry="4" transform="rotate(40 1147 797)"/><ellipse cx="1215" cy="813" rx="8" ry="3.5" transform="rotate(45 1215 813)"/><ellipse cx="1268" cy="828" rx="9" ry="3.5" transform="rotate(35 1268 828)"/></g><g stroke="#f6c4c4" stroke-width="1"><path d="M1048.5,143 V818 M775,456.5 H1321"/></g><g stroke="#e81010" stroke-width="1.3" fill="none"><path d="M775.5,143 V818.5 H1321.5 V143"/></g><g fill="#e81010"><rect x="772.5" y="453.5" width="6" height="6"/><rect x="1045.5" y="453.5" width="6" height="6"/><rect x="1318.5" y="453.5" width="6" height="6"/><rect x="772.5" y="815.5" width="6" height="6"/><rect x="1045.5" y="815.5" width="6" height="6"/><rect x="1318.5" y="815.5" width="6" height="6"/></g><path d="M1157.7,634.8L1137.3,601.6 M877.5,223.0L870.3,249.6 M775.3,159.4L784.7,154.0 M1035.5,348.0L1026.8,328.3 M883.6,386.7L883.8,362.1 M907.4,397.1L919.1,414.6 M998.4,247.9L985.4,243.0 M946.3,168.3L936.4,149.6 M1147.1,618.7L1147.2,631.0 M827.9,295.6L839.2,314.6 M1234.2,780.6L1247.3,795.2 M1039.8,596.5L1020.9,596.2 M919.1,414.6L930.9,432.1 M784.7,154.0L813.1,144.0 M1190.1,743.7L1215.4,711.0 M1230.9,725.3L1215.4,711.0 M1137.3,601.6L1136.1,613.1 M1147.2,631.0L1127.1,636.5 M862.4,273.9L889.1,300.5 M1247.3,795.2L1267.1,806.6 M989.6,228.1L977.9,210.4 M959.5,489.2L954.6,467.1 M999.7,282.8L991.3,299.6 M897.6,144.0L894.8,169.7 M1215.4,711.0L1199.8,696.7 M1079.5,587.1L1079.5,577.6 M897.8,401.8L907.5,418.9 M919.1,414.6L959.1,405.8 M977.9,210.4L969.0,192.8 M969.6,506.4L966.8,484.3 M1208.6,753.9L1215.4,711.0 M813.1,144.0L792.0,144.0 M1042.8,481.4L1031.4,508.3 M1137.3,601.6L1123.3,580.5 M907.5,418.9L922.0,437.6 M1085.3,521.0L1061.9,536.7 M1272.1,759.5L1258.4,744.1 M1078.8,690.5L1114.3,688.6 M1003.6,535.8L1015.9,553.0 M966.8,484.3L980.3,456.9 M1032.6,633.5L1038.6,608.2 M1053.7,407.8L1050.6,421.5 M975.5,353.0L1012.7,353.1 M956.5,301.1L985.4,324.8 M1258.4,744.1L1245.3,729.8 M1158.4,648.9L1122.9,663.6 M897.0,138.7L876.3,139.5 M1101.5,579.2L1123.3,580.5 M1200.0,756.9L1190.1,743.7 M1092.2,638.6L1088.9,665.4 M1061.9,536.7L1070.1,541.1 M876.3,139.5L853.6,137.8 M1005.4,379.1L1029.5,404.7 M1020.8,658.6L1031.6,654.5 M999.7,282.8L966.9,275.4 M1061.9,536.7L1063.4,561.9 M1086.8,716.3L1078.8,690.5 M1021.1,342.4L1012.7,353.1 M855.2,197.8L884.6,195.7 M1007.4,266.4L992.6,262.9 M991.8,540.8L1007.8,557.2 M810.6,234.4L843.4,223.5 M1070.1,541.1L1090.2,536.4 M1057.8,705.0L1075.5,714.8 M1105.3,554.0L1097.4,553.1 M949.1,327.6L941.4,351.1 M1157.7,634.8L1147.1,618.7 M1301.5,791.1L1289.8,785.4 M1042.5,402.0L1035.4,382.1 M954.5,429.5L984.0,429.0 M1097.4,553.1L1088.6,556.2 M980.3,456.9L1005.8,481.9 M1287.0,774.8L1273.9,771.6 M1028.3,362.2L1005.4,379.1 M872.0,344.6L905.4,351.4 M940.3,138.9L918.7,144.0 M1005.8,481.9L996.2,506.2 M1088.6,556.2L1078.6,560.9 M862.4,273.9L855.4,299.1 M827.9,295.6L837.1,291.8 M1003.6,535.8L996.2,506.2 M971.1,379.7L994.1,404.7 M870.3,249.6L906.3,250.0 M917.7,137.1L897.6,144.0 M1257.1,794.2L1273.9,771.6 M1060.3,426.2L1059.0,440.8 M1027.2,580.8L1035.1,586.8 M843.4,223.5L838.2,249.7 M1197.6,684.7L1185.2,681.5 M1007.8,557.2L1015.9,553.0 M956.1,186.9L931.4,172.0 M1055.6,590.8L1063.4,583.9 M1185.1,670.9L1171.8,665.2 M982.2,525.0L991.8,540.8 M956.5,301.1L949.1,327.6 M907.5,418.9L919.1,414.6 M1040.5,693.0L1057.8,705.0 M1014.7,287.7L1006.9,302.6 M994.1,404.7L1029.5,404.7 M1170.1,654.5L1157.7,634.8 M1050.6,421.5L1042.5,402.0 M1137.3,714.3L1149.2,689.3 M1007.4,266.4L999.7,282.8 M834.2,144.0L863.6,169.0 M1027.2,580.8L1020.9,596.2 M791.2,174.1L797.7,194.2 M1108.1,715.9L1117.0,709.0 M1079.7,488.4L1071.9,481.0 M794.9,217.5L810.6,234.4 M1085.3,521.0L1066.4,507.5 M1022.4,679.4L1033.3,696.1 M1032.6,633.5L1060.3,639.3 M1085.3,521.0L1100.6,545.2 M941.4,351.1L971.1,379.7 M991.8,540.8L1003.6,535.8 M797.7,194.2L804.1,214.3 M1127.2,717.0L1137.3,714.3 M1173.0,732.3L1190.1,743.7 M1301.5,791.1L1297.3,801.8 M838.2,249.7L870.3,249.6 M966.0,205.6L950.8,222.6 M1033.3,696.1L1050.6,709.6 M1072.9,467.1L1069.1,446.3 M820.2,276.5L817.9,254.2 M1057.8,705.0L1078.8,690.5 M1158.4,648.9L1149.2,689.3 M1190.1,743.7L1208.6,753.9 M999.7,282.8L992.6,262.9 M940.3,138.9L936.4,149.6 M782.4,178.7L789.6,198.5 M820.1,195.7L843.4,223.5 M1005.8,481.9L1042.8,481.4 M1018.7,615.1L1020.9,596.2 M907.4,397.1L935.8,377.9 M1069.1,446.3L1060.3,426.2 M848.4,309.5L860.2,327.1 M827.9,295.6L827.5,273.0 M1234.2,780.6L1240.9,780.8 M992.6,262.9L985.4,243.0 M971.1,379.7L959.1,405.8 M789.6,198.5L794.9,217.5 M827.5,273.0L838.2,249.7 M1148.2,723.9L1168.3,731.4 M1027.2,580.8L1017.2,571.0 M860.2,327.1L872.0,344.6 M1247.3,795.2L1257.1,794.2 M1297.3,801.8L1289.8,785.4 M1197.6,684.7L1199.8,696.7 M839.2,314.6L860.3,349.6 M1100.6,545.2L1109.1,557.8 M1168.3,731.4L1181.6,745.4 M1026.8,328.3L1021.2,306.4 M897.8,401.8L895.6,379.6 M1289.8,785.4L1273.9,771.6 M936.4,149.6L918.7,144.0 M1059.0,440.8L1023.9,431.0 M1023.9,431.0L1046.0,456.1 M791.2,137.3L792.0,144.0 M1173.0,732.3L1199.8,696.7 M1060.3,639.3L1092.2,638.6 M1105.3,566.3L1090.2,573.5 M1021.2,306.4L1014.7,287.7 M907.5,418.9L907.4,397.1 M930.9,432.1L942.7,449.7 M918.7,144.0L897.6,144.0 M1085.7,506.8L1077.8,501.2 M850.2,331.6L860.3,349.6 M918.7,144.0L931.4,172.0 M1063.4,561.9L1044.5,576.0 M1063.4,561.9L1063.4,583.9 M950.6,154.1L946.3,168.3 M942.7,449.7L954.6,467.1 M938.5,249.0L930.8,272.8 M918.3,327.8L949.1,327.6 M1287.2,807.9L1308.8,803.3 M827.5,273.0L862.4,273.9 M1185.2,681.5L1171.8,665.2 M1108.1,715.9L1095.9,709.2 M1065.9,460.7L1046.0,456.1 M966.9,275.4L991.3,299.6 M1213.0,700.5L1215.4,711.0 M1114.3,688.6L1149.2,689.3 M1109.1,557.8L1123.3,580.5 M959.6,172.6L950.6,154.1 M824.1,170.5L863.6,169.0 M1043.1,367.6L1028.3,362.2 M1227.4,713.2L1197.6,684.7 M1078.6,560.9L1090.2,573.5 M1068.6,610.6L1079.5,587.1 M1117.0,709.0L1114.3,688.6 M833.1,137.5L791.2,137.3 M994.1,404.7L1023.9,431.0 M1100.4,613.4L1088.9,583.0 M1063.4,561.9L1079.5,577.6 M1225.2,766.7L1259.4,756.3 M1234.2,780.6L1225.2,766.7 M1051.3,664.0L1078.8,690.5 M1125.0,595.1L1100.4,613.4 M989.6,228.1L975.9,224.3 M1044.5,576.0L1055.6,590.8 M984.0,429.0L980.3,456.9 M839.2,314.6L850.2,331.6 M1088.9,583.0L1101.5,579.2 M950.8,222.6L938.5,249.0 M789.6,198.5L797.7,194.2 M942.7,449.7L980.3,456.9 M1031.4,508.3L1061.9,536.7 M930.8,272.8L956.5,301.1 M824.1,170.5L855.2,197.8 M1023.9,431.0L1014.5,456.4 M1267.1,806.6L1287.2,807.9 M1068.6,610.6L1055.6,590.8 M931.4,172.0L923.1,195.4 M797.7,194.2L824.1,170.5 M1272.1,759.5L1259.4,756.3 M1199.8,696.7L1185.2,681.5 M1015.9,553.0L1044.5,566.3 M1063.4,561.9L1044.5,566.3 M1136.1,613.1L1127.1,636.5 M1090.2,536.4L1088.6,556.2 M969.0,192.8L959.6,172.6 M1014.0,322.5L985.4,324.8 M982.2,525.0L979.1,501.5 M959.1,405.8L984.0,429.0 M897.0,138.7L876.5,144.0 M922.0,437.6L932.5,454.0 M1030.4,534.5L1044.5,552.1 M930.9,432.1L959.1,405.8 M850.2,331.6L860.2,327.1 M1085.7,506.8L1100.6,545.2 M769.2,139.1L792.0,144.0 M876.3,139.5L855.3,144.0 M1044.5,576.0L1063.4,583.9 M1245.3,729.8L1227.4,713.2 M1287.2,807.9L1289.8,785.4 M811.8,137.9L813.1,144.0 M916.0,220.8L906.3,250.0 M1033.4,612.4L1032.6,633.5 M1043.1,367.6L1035.4,382.1 M935.8,377.9L971.1,379.7 M860.2,327.1L880.8,326.9 M1047.1,589.3L1039.8,596.5 M1227.4,713.2L1213.0,700.5 M853.6,137.8L833.1,137.5 M1105.3,566.3L1123.3,580.5 M1022.4,679.4L1030.7,675.6 M1068.6,610.6L1063.4,583.9 M1157.7,634.8L1147.2,631.0 M1077.8,501.2L1071.9,481.0 M797.7,194.2L820.1,195.7 M1090.2,536.4L1100.6,545.2 M1125.0,583.5L1125.0,595.1 M833.1,137.5L811.8,137.9 M1033.3,696.1L1040.5,693.0 M1014.0,322.5L1012.7,353.1 M985.4,324.8L975.5,353.0 M1147.1,618.7L1137.3,601.6 M996.2,506.2L999.5,533.2 M1006.9,302.6L991.3,299.6 M898.5,275.3L889.1,300.5 M1095.9,709.2L1117.0,709.0 M989.6,228.1L985.4,243.0 M1044.5,576.0L1047.1,589.3 M1030.7,675.6L1051.3,664.0 M984.0,429.0L1023.9,431.0 M1088.9,583.0L1079.5,577.6 M1137.3,601.6L1125.0,583.5 M804.1,214.3L810.6,234.4 M1148.2,723.9L1157.4,720.7 M930.8,272.8L925.5,298.6 M791.2,174.1L813.1,144.0 M1028.3,362.2L1021.1,342.4 M860.2,327.1L855.4,299.1 M1050.6,709.6L1068.4,718.0 M1060.3,426.2L1047.6,385.9 M1047.6,385.9L1042.5,402.0 M839.2,314.6L848.4,309.5 M1078.6,560.9L1063.4,561.9 M810.6,234.4L817.9,254.2 M1168.3,731.4L1173.0,732.3 M1272.1,759.5L1273.9,771.6 M876.5,144.0L894.8,169.7 M883.8,362.1L905.4,351.4 M906.3,250.0L938.5,249.0 M1015.9,553.0L1044.5,552.1 M1068.4,718.0L1086.8,716.3 M1225.2,766.7L1240.9,780.8 M959.1,405.8L954.5,429.5 M897.0,138.7L897.6,144.0 M996.2,506.2L1031.4,508.3 M884.6,195.7L923.1,195.4 M1053.7,407.8L1047.6,385.9 M850.2,331.6L848.4,309.5 M880.8,326.9L905.4,351.4 M975.9,224.3L966.0,205.6 M1170.1,654.5L1158.4,648.9 M800.9,239.2L809.7,257.1 M1200.0,756.9L1234.2,780.6 M1035.1,586.8L1047.1,589.3 M998.4,247.9L992.6,262.9 M922.0,437.6L930.9,432.1 M883.8,362.1L895.6,379.6 M1287.2,807.9L1297.3,801.8 M1071.9,481.0L1042.8,481.4 M860.3,349.6L883.6,386.7 M889.1,300.5L925.5,298.6 M1035.4,382.1L1028.3,362.2 M979.1,501.5L996.2,506.2 M1185.2,681.5L1149.2,689.3 M1007.4,266.4L989.6,228.1 M932.5,454.0L942.7,449.7 M1068.6,610.6L1038.6,608.2 M1014.5,456.4L1042.8,481.4 M810.6,234.4L838.2,249.7 M1072.9,467.1L1065.9,460.7 M1208.6,753.9L1225.2,766.7 M1044.5,566.3L1017.2,571.0 M1208.6,753.9L1230.9,725.3 M930.9,432.1L954.5,429.5 M1050.6,421.5L1029.5,404.7 M1044.5,576.0L1035.1,586.8 M1276.7,801.8L1273.9,771.6 M1125.0,583.5L1123.3,580.5 M1148.2,723.9L1137.3,714.3 M1068.6,610.6L1092.2,638.6 M982.2,525.0L984.7,526.3 M889.1,300.5L918.3,327.8 M1060.3,426.2L1053.7,407.8 M839.2,314.6L837.1,291.8 M991.3,299.6L985.4,324.8 M1042.5,402.0L1029.5,404.7 M1026.8,328.3L1014.0,322.5 M1100.4,613.4L1127.1,636.5 M876.5,144.0L863.6,169.0 M1005.4,379.1L994.1,404.7 M794.9,217.5L800.9,239.2 M1007.8,557.2L1017.2,571.0 M1267.1,806.6L1276.7,801.8 M1070.1,541.1L1063.4,561.9 M992.6,262.9L966.9,275.4 M895.6,379.6L905.4,351.4 M1105.3,554.0L1105.3,566.3 M1181.6,745.4L1200.0,756.9 M985.4,243.0L950.8,222.6 M956.1,186.9L923.1,195.4 M1016.2,636.5L1022.4,679.4 M966.8,484.3L1005.8,481.9 M1014.7,287.7L1007.4,266.4 M922.0,437.6L919.1,414.6 M1259.4,756.3L1245.9,740.1 M975.5,353.0L1005.4,379.1 M860.3,349.6L872.2,366.8 M1287.0,774.8L1289.8,785.4 M800.9,239.2L810.6,234.4 M1060.3,639.3L1038.6,608.2 M932.5,454.0L930.9,432.1 M876.5,144.0L855.3,144.0 M1014.5,456.4L1005.8,481.9 M1308.8,803.3L1301.5,791.1 M809.7,257.1L817.9,254.2 M1079.5,587.1L1088.9,583.0 M917.7,137.1L918.7,144.0 M855.2,197.8L877.5,223.0 M1077.8,501.2L1066.4,507.5 M1044.5,566.3L1027.2,580.8 M985.4,243.0L975.9,224.3 M1031.6,654.5L1060.3,639.3 M1208.6,753.9L1245.9,740.1 M1007.8,557.2L1003.6,535.8 M884.6,195.7L916.0,220.8 M1158.4,648.9L1147.2,631.0 M872.0,344.6L883.8,362.1 M985.4,243.0L938.5,249.0 M945.0,470.8L959.5,489.2 M956.1,186.9L950.8,222.6 M1055.6,590.8L1038.6,608.2 M984.7,526.3L999.5,533.2 M1185.1,670.9L1185.2,681.5 M855.4,299.1L889.1,300.5 M1276.7,801.8L1289.8,785.4 M1075.5,714.8L1078.8,690.5 M946.3,168.3L931.4,172.0 M894.8,169.7L931.4,172.0 M1068.6,610.6L1060.3,639.3 M1273.9,771.6L1259.4,756.3 M1031.6,654.5L1030.7,675.6 M1092.2,638.6L1127.1,636.5 M1088.9,665.4L1114.3,688.6 M897.6,144.0L876.5,144.0 M1137.3,714.3L1114.3,688.6 M1050.6,709.6L1057.8,705.0 M870.3,249.6L898.5,275.3 M834.2,144.0L824.1,170.5 M1267.1,806.6L1257.1,794.2 M1065.9,460.7L1059.0,440.8 M1063.4,583.9L1079.5,587.1 M954.6,467.1L966.8,484.3 M1122.9,663.6L1149.2,689.3 M1070.1,541.1L1078.6,560.9 M1105.3,554.0L1109.1,557.8 M1079.7,488.4L1077.8,501.2 M794.9,217.5L804.1,214.3 M1157.4,720.7L1149.2,689.3 M949.1,327.6L985.4,324.8 M1068.4,718.0L1075.5,714.8 M1085.3,521.0L1090.2,536.4 M941.4,351.1L935.8,377.9 M877.5,223.0L916.0,220.8 M969.0,192.8L956.1,186.9 M1017.2,571.0L1020.9,596.2 M1171.8,665.2L1158.4,648.9 M1127.2,717.0L1117.0,709.0 M855.4,299.1L880.8,326.9 M1137.3,714.3L1157.4,720.7 M837.1,291.8L862.4,273.9 M950.6,154.1L940.3,138.9 M975.5,353.0L971.1,379.7 M980.3,456.9L1014.5,456.4 M863.6,169.0L894.8,169.7 M1035.5,348.0L1021.1,342.4 M991.4,518.7L999.5,533.2 M1014.0,322.5L1006.9,302.6 M1245.3,729.8L1230.9,725.3 M1032.6,633.5L1031.6,654.5 M1044.5,552.1L1044.5,566.3 M860.3,349.6L872.0,344.6 M971.1,379.7L1005.4,379.1 M1003.6,535.8L1030.4,534.5 M1213.0,700.5L1197.6,684.7 M855.2,197.8L843.4,223.5 M919.1,414.6L935.8,377.9 M853.6,137.8L834.2,144.0 M1247.3,795.2L1240.9,780.8 M1071.9,481.0L1065.9,460.7 M872.2,366.8L883.8,362.1 M1100.6,545.2L1105.3,554.0 M1029.5,404.7L1023.9,431.0 M775.3,159.4L791.2,174.1 M977.9,210.4L966.0,205.6 M1173.0,732.3L1215.4,711.0 M838.2,249.7L862.4,273.9 M1147.1,618.7L1136.1,613.1 M837.1,291.8L855.4,299.1 M1158.4,648.9L1127.1,636.5 M945.0,470.8L954.6,467.1 M1085.7,506.8L1085.3,521.0 M863.6,169.0L884.6,195.7 M784.7,154.0L792.0,144.0 M918.7,144.0L894.8,169.7 M820.2,276.5L827.9,295.6 M804.1,214.3L820.1,195.7 M1088.9,665.4L1078.8,690.5 M1258.4,744.1L1245.9,740.1 M1018.7,615.1L1016.2,636.5 M989.6,228.1L969.0,192.8 M959.5,489.2L966.8,484.3 M1050.6,709.6L1040.5,693.0 M932.5,454.0L945.0,470.8 M1125.0,595.1L1101.5,579.2 M966.9,275.4L956.5,301.1 M1085.3,521.0L1070.1,541.1 M809.7,257.1L827.9,295.6 M1059.0,440.8L1046.0,456.1 M1181.6,745.4L1190.1,743.7 M1060.3,639.3L1088.9,665.4 M897.0,138.7L853.6,137.8 M1016.2,636.5L1031.6,654.5 M1035.5,348.0L1028.3,362.2 M1028.3,362.2L1012.7,353.1 M991.4,518.7L984.7,526.3 M1092.2,638.6L1122.9,663.6 M994.1,404.7L984.0,429.0 M1100.4,613.4L1079.5,587.1 M769.2,139.1L784.7,154.0 M860.3,349.6L860.2,327.1 M918.3,327.8L941.4,351.1 M811.8,137.9L791.2,137.3 M1063.4,583.9L1079.5,577.6 M1240.9,780.8L1259.4,756.3 M843.4,223.5L877.5,223.0 M949.1,327.6L975.5,353.0 M1031.4,508.3L1030.4,534.5 M1117.0,709.0L1137.3,714.3 M1055.6,590.8L1039.8,596.5 M977.9,210.4L975.9,224.3 M824.1,170.5L820.1,195.7 M1090.2,573.5L1101.5,579.2 M954.6,467.1L980.3,456.9 M956.5,301.1L991.3,299.6 M1021.1,342.4L1014.0,322.5 M991.4,518.7L996.2,506.2 M945.0,470.8L942.7,449.7 M863.6,169.0L855.2,197.8 M1063.4,561.9L1044.5,552.1 M1090.2,536.4L1097.4,553.1 M817.9,254.2L827.5,273.0 M1005.8,481.9L1031.4,508.3 M1088.9,665.4L1122.9,663.6 M1258.4,744.1L1259.4,756.3 M991.8,540.8L999.5,533.2 M1003.6,535.8L1031.4,508.3 M1100.4,613.4L1101.5,579.2 M1086.8,716.3L1108.1,715.9 M1033.4,612.4L1038.6,608.2 M1060.3,426.2L1050.6,421.5 M834.2,144.0L813.1,144.0 M1006.9,302.6L985.4,324.8 M1240.9,780.8L1257.1,794.2 M1040.5,693.0L1051.3,664.0 M876.3,139.5L876.5,144.0 M1018.7,615.1L1032.6,633.5 M843.4,223.5L870.3,249.6 M1031.4,508.3L1066.4,507.5 M1047.6,385.9L1043.1,367.6 M1100.6,545.2L1097.4,553.1 M941.4,351.1L975.5,353.0 M966.0,205.6L956.1,186.9 M809.7,257.1L820.2,276.5 M1181.6,745.4L1173.0,732.3 M1047.1,589.3L1055.6,590.8 M1136.1,613.1L1125.0,595.1 M895.6,379.6L907.4,397.1 M1060.3,639.3L1051.3,664.0 M1105.3,566.3L1101.5,579.2 M1157.7,634.8L1158.4,648.9 M925.5,298.6L956.5,301.1 M1016.2,636.5L1032.6,633.5 M1218.5,766.1L1234.2,780.6 M872.0,344.6L880.8,326.9 M1015.9,553.0L1017.2,571.0 M820.1,195.7L855.2,197.8 M1014.7,287.7L999.7,282.8 M1035.4,382.1L1005.4,379.1 M1033.3,696.1L1030.7,675.6 M1245.9,740.1L1230.9,725.3 M769.2,139.1L791.2,137.3 M883.6,386.7L907.5,418.9 M1051.3,664.0L1088.9,665.4 M998.4,247.9L989.6,228.1 M918.3,327.8L905.4,351.4 M855.3,144.0L834.2,144.0 M1240.9,780.8L1273.9,771.6 M1069.1,446.3L1059.0,440.8 M1308.8,803.3L1297.3,801.8 M1088.9,583.0L1090.2,573.5 M1065.9,460.7L1042.8,481.4 M975.9,224.3L950.8,222.6 M905.4,351.4L941.4,351.1 M1090.2,573.5L1079.5,577.6 M1168.3,731.4L1157.4,720.7 M1157.4,720.7L1185.2,681.5 M820.2,276.5L827.5,273.0 M925.5,298.6L949.1,327.6 M782.4,178.7L794.9,217.5 M1021.2,306.4L1006.9,302.6 M991.8,540.8L984.7,526.3 M1185.1,670.9L1157.7,634.8 M923.1,195.4L950.8,222.6 M1030.4,534.5L1061.9,536.7 M1033.4,612.4L1020.9,596.2 M1170.1,654.5L1171.8,665.2 M855.3,144.0L863.6,169.0 M1018.7,615.1L1033.4,612.4 M1200.0,756.9L1218.5,766.1 M1287.2,807.9L1276.7,801.8 M897.8,401.8L907.4,397.1 M1105.3,566.3L1088.6,556.2 M1007.4,266.4L998.4,247.9 M936.4,149.6L931.4,172.0 M959.6,172.6L946.3,168.3 M872.2,366.8L883.6,386.7 M1079.7,488.4L1069.1,446.3 M906.3,250.0L930.8,272.8 M1171.8,665.2L1149.2,689.3 M966.8,484.3L979.1,501.5 M950.6,154.1L936.4,149.6 M1072.9,467.1L1071.9,481.0 M1046.0,456.1L1042.8,481.4 M883.6,386.7L897.8,401.8 M1018.8,574.7L1020.9,596.2 M1301.5,791.1L1287.0,774.8 M895.6,379.6L935.8,377.9 M938.5,249.0L966.9,275.4 M979.1,501.5L991.4,518.7 M817.9,254.2L838.2,249.7 M1069.1,446.3L1065.9,460.7 M1040.5,693.0L1078.8,690.5 M1287.0,774.8L1272.1,759.5 M940.3,138.9L917.7,137.1 M1035.1,586.8L1020.9,596.2 M942.7,449.7L954.5,429.5 M1213.0,700.5L1199.8,696.7 M1125.0,583.5L1101.5,579.2 M1147.2,631.0L1136.1,613.1 M1071.9,481.0L1066.4,507.5 M959.5,489.2L969.6,506.4 M889.1,300.5L880.8,326.9 M917.7,137.1L897.0,138.7 M935.8,377.9L959.1,405.8 M1095.9,709.2L1114.3,688.6 M1157.4,720.7L1199.8,696.7 M1026.8,328.3L1021.1,342.4 M1100.4,613.4L1092.2,638.6 M1078.6,560.9L1079.5,577.6 M969.6,506.4L982.2,525.0 M925.5,298.6L918.3,327.8 M1197.6,684.7L1185.1,670.9 M1136.1,613.1L1100.4,613.4 M1030.7,675.6L1040.5,693.0 M1035.4,382.1L1029.5,404.7 M1021.2,306.4L1014.0,322.5 M1225.2,766.7L1245.9,740.1 M959.1,405.8L994.1,404.7 M1018.8,574.7L1017.2,571.0 M1185.1,670.9L1170.1,654.5 M923.1,195.4L916.0,220.8 M782.4,178.7L797.7,194.2 M1059.0,440.8L1050.6,421.5 M1050.6,421.5L1023.9,431.0 M1016.2,636.5L1020.8,658.6 M985.4,243.0L966.9,275.4 M1109.1,557.8L1105.3,566.3 M784.7,154.0L791.2,174.1 M984.0,429.0L1014.5,456.4 M1086.8,716.3L1095.9,709.2 M789.6,198.5L804.1,214.3 M916.0,220.8L950.8,222.6 M894.8,169.7L923.1,195.4 M1020.8,658.6L1022.4,679.4 M791.2,174.1L824.1,170.5 M905.4,351.4L935.8,377.9 M1105.3,566.3L1097.4,553.1 M979.1,501.5L1005.8,481.9 M1157.4,720.7L1173.0,732.3 M1012.7,353.1L1005.4,379.1 M959.6,172.6L956.1,186.9 M1014.5,456.4L1046.0,456.1 M1079.7,488.4L1072.9,467.1 M906.3,250.0L898.5,275.3 M809.7,257.1L810.6,234.4 M1088.6,556.2L1090.2,573.5 M1006.9,302.6L999.7,282.8 M1227.4,713.2L1215.4,711.0 M775.3,159.4L782.4,178.7 M982.2,525.0L991.4,518.7 M1044.5,566.3L1044.5,576.0 M837.1,291.8L848.4,309.5 M1218.5,766.1L1225.2,766.7 M884.6,195.7L877.5,223.0 M898.5,275.3L930.8,272.8 M833.1,137.5L813.1,144.0 M877.5,223.0L906.3,250.0 M1044.5,576.0L1027.2,580.8 M1035.5,348.0L1021.2,306.4 M883.6,386.7L895.6,379.6 M1035.1,586.8L1039.8,596.5 M954.5,429.5L980.3,456.9 M930.8,272.8L966.9,275.4 M811.8,137.9L792.0,144.0 M916.0,220.8L938.5,249.0 M1068.6,610.6L1100.4,613.4 M1039.8,596.5L1038.6,608.2 M1137.3,601.6L1125.0,595.1 M1095.9,709.2L1078.8,690.5 M1015.9,553.0L1030.4,534.5 M1127.1,636.5L1122.9,663.6 M870.3,249.6L862.4,273.9 M1122.9,663.6L1114.3,688.6 M1070.1,541.1L1088.6,556.2 M1018.8,574.7L1027.2,580.8 M1020.9,596.2L1038.6,608.2 M985.4,324.8L1012.7,353.1 M969.6,506.4L979.1,501.5 M1066.4,507.5L1061.9,536.7 M1031.6,654.5L1051.3,664.0 M1068.4,718.0L1057.8,705.0 M813.1,144.0L824.1,170.5 M782.4,178.7L791.2,174.1 M1042.8,481.4L1066.4,507.5 M907.5,418.9L932.5,454.0 M969.0,192.8L966.0,205.6 M880.8,326.9L918.3,327.8 M898.5,275.3L925.5,298.6 M1085.7,506.8L1079.7,488.4 M848.4,309.5L855.4,299.1 M1086.8,716.3L1075.5,714.8 M1053.7,407.8L1042.5,402.0 M769.2,139.1L775.3,159.4 M894.8,169.7L884.6,195.7 M827.5,273.0L837.1,291.8 M1200.0,756.9L1208.6,753.9 M1047.6,385.9L1035.4,382.1 M1245.3,729.8L1245.9,740.1 M862.4,273.9L898.5,275.3 M804.1,214.3L843.4,223.5 M1108.1,715.9L1127.2,717.0 M1061.9,536.7L1044.5,552.1 M1020.8,658.6L1030.7,675.6 M1003.6,535.8L999.5,533.2 M1257.1,794.2L1276.7,801.8 M1227.4,713.2L1230.9,725.3 M853.6,137.8L855.3,144.0 M1127.2,717.0L1148.2,723.9 M1043.1,367.6L1035.5,348.0 M872.2,366.8L872.0,344.6 M1085.7,506.8L1066.4,507.5 M1218.5,766.1L1208.6,753.9 M956.1,186.9L946.3,168.3 M833.1,137.5L834.2,144.0" stroke="#8a8a8a" stroke-width="0.8" fill="none" opacity="0.9"/><g fill="#fff" stroke="#000" stroke-width="1.5"><circle cx="775.3" cy="159.4" r="2.3"/><circle cx="782.4" cy="178.7" r="2.3"/><circle cx="789.6" cy="198.5" r="2.3"/><circle cx="794.9" cy="217.5" r="2.3"/><circle cx="800.9" cy="239.2" r="2.3"/><circle cx="809.7" cy="257.1" r="2.3"/><circle cx="820.2" cy="276.5" r="2.3"/><circle cx="827.9" cy="295.6" r="2.3"/><circle cx="839.2" cy="314.6" r="2.3"/><circle cx="850.2" cy="331.6" r="2.3"/><circle cx="860.3" cy="349.6" r="2.3"/><circle cx="872.2" cy="366.8" r="2.3"/><circle cx="883.6" cy="386.7" r="2.3"/><circle cx="897.8" cy="401.8" r="2.3"/><circle cx="907.5" cy="418.9" r="2.3"/><circle cx="922.0" cy="437.6" r="2.3"/><circle cx="932.5" cy="454.0" r="2.3"/><circle cx="945.0" cy="470.8" r="2.3"/><circle cx="959.5" cy="489.2" r="2.3"/><circle cx="969.6" cy="506.4" r="2.3"/><circle cx="982.2" cy="525.0" r="2.3"/><circle cx="991.8" cy="540.8" r="2.3"/><circle cx="1007.8" cy="557.2" r="2.3"/><circle cx="1018.8" cy="574.7" r="2.3"/><circle cx="1018.7" cy="615.1" r="2.3"/><circle cx="1016.2" cy="636.5" r="2.3"/><circle cx="1020.8" cy="658.6" r="2.3"/><circle cx="1022.4" cy="679.4" r="2.3"/><circle cx="1033.3" cy="696.1" r="2.3"/><circle cx="1050.6" cy="709.6" r="2.3"/><circle cx="1068.4" cy="718.0" r="2.3"/><circle cx="1086.8" cy="716.3" r="2.3"/><circle cx="1108.1" cy="715.9" r="2.3"/><circle cx="1127.2" cy="717.0" r="2.3"/><circle cx="1148.2" cy="723.9" r="2.3"/><circle cx="1168.3" cy="731.4" r="2.3"/><circle cx="1181.6" cy="745.4" r="2.3"/><circle cx="1200.0" cy="756.9" r="2.3"/><circle cx="1218.5" cy="766.1" r="2.3"/><circle cx="1234.2" cy="780.6" r="2.3"/><circle cx="1247.3" cy="795.2" r="2.3"/><circle cx="1267.1" cy="806.6" r="2.3"/><circle cx="1287.2" cy="807.9" r="2.3"/><circle cx="1308.8" cy="803.3" r="2.3"/><circle cx="1301.5" cy="791.1" r="2.3"/><circle cx="1287.0" cy="774.8" r="2.3"/><circle cx="1272.1" cy="759.5" r="2.3"/><circle cx="1258.4" cy="744.1" r="2.3"/><circle cx="1245.3" cy="729.8" r="2.3"/><circle cx="1227.4" cy="713.2" r="2.3"/><circle cx="1213.0" cy="700.5" r="2.3"/><circle cx="1197.6" cy="684.7" r="2.3"/><circle cx="1185.1" cy="670.9" r="2.3"/><circle cx="1170.1" cy="654.5" r="2.3"/><circle cx="1157.7" cy="634.8" r="2.3"/><circle cx="1147.1" cy="618.7" r="2.3"/><circle cx="1137.3" cy="601.6" r="2.3"/><circle cx="1125.0" cy="583.5" r="2.3"/><circle cx="1085.7" cy="506.8" r="2.3"/><circle cx="1079.7" cy="488.4" r="2.3"/><circle cx="1072.9" cy="467.1" r="2.3"/><circle cx="1069.1" cy="446.3" r="2.3"/><circle cx="1060.3" cy="426.2" r="2.3"/><circle cx="1053.7" cy="407.8" r="2.3"/><circle cx="1047.6" cy="385.9" r="2.3"/><circle cx="1043.1" cy="367.6" r="2.3"/><circle cx="1035.5" cy="348.0" r="2.3"/><circle cx="1026.8" cy="328.3" r="2.3"/><circle cx="1021.2" cy="306.4" r="2.3"/><circle cx="1014.7" cy="287.7" r="2.3"/><circle cx="1007.4" cy="266.4" r="2.3"/><circle cx="998.4" cy="247.9" r="2.3"/><circle cx="989.6" cy="228.1" r="2.3"/><circle cx="977.9" cy="210.4" r="2.3"/><circle cx="969.0" cy="192.8" r="2.3"/><circle cx="959.6" cy="172.6" r="2.3"/><circle cx="950.6" cy="154.1" r="2.3"/><circle cx="784.7" cy="154.0" r="2.3"/><circle cx="791.2" cy="174.1" r="2.3"/><circle cx="797.7" cy="194.2" r="2.3"/><circle cx="804.1" cy="214.3" r="2.3"/><circle cx="810.6" cy="234.4" r="2.3"/><circle cx="817.9" cy="254.2" r="2.3"/><circle cx="827.5" cy="273.0" r="2.3"/><circle cx="837.1" cy="291.8" r="2.3"/><circle cx="848.4" cy="309.5" r="2.3"/><circle cx="860.2" cy="327.1" r="2.3"/><circle cx="872.0" cy="344.6" r="2.3"/><circle cx="883.8" cy="362.1" r="2.3"/><circle cx="895.6" cy="379.6" r="2.3"/><circle cx="907.4" cy="397.1" r="2.3"/><circle cx="919.1" cy="414.6" r="2.3"/><circle cx="930.9" cy="432.1" r="2.3"/><circle cx="942.7" cy="449.7" r="2.3"/><circle cx="954.6" cy="467.1" r="2.3"/><circle cx="966.8" cy="484.3" r="2.3"/><circle cx="979.1" cy="501.5" r="2.3"/><circle cx="991.4" cy="518.7" r="2.3"/><circle cx="1003.6" cy="535.8" r="2.3"/><circle cx="1015.9" cy="553.0" r="2.3"/><circle cx="1033.4" cy="612.4" r="2.3"/><circle cx="1032.6" cy="633.5" r="2.3"/><circle cx="1031.6" cy="654.5" r="2.3"/><circle cx="1030.7" cy="675.6" r="2.3"/><circle cx="1040.5" cy="693.0" r="2.3"/><circle cx="1057.8" cy="705.0" r="2.3"/><circle cx="1075.5" cy="714.8" r="2.3"/><circle cx="1095.9" cy="709.2" r="2.3"/><circle cx="1117.0" cy="709.0" r="2.3"/><circle cx="1137.3" cy="714.3" r="2.3"/><circle cx="1157.4" cy="720.7" r="2.3"/><circle cx="1173.0" cy="732.3" r="2.3"/><circle cx="1190.1" cy="743.7" r="2.3"/><circle cx="1208.6" cy="753.9" r="2.3"/><circle cx="1225.2" cy="766.7" r="2.3"/><circle cx="1240.9" cy="780.8" r="2.3"/><circle cx="1257.1" cy="794.2" r="2.3"/><circle cx="1276.7" cy="801.8" r="2.3"/><circle cx="1297.3" cy="801.8" r="2.3"/><circle cx="1289.8" cy="785.4" r="2.3"/><circle cx="1273.9" cy="771.6" r="2.3"/><circle cx="1259.4" cy="756.3" r="2.3"/><circle cx="1245.9" cy="740.1" r="2.3"/><circle cx="1230.9" cy="725.3" r="2.3"/><circle cx="1215.4" cy="711.0" r="2.3"/><circle cx="1199.8" cy="696.7" r="2.3"/><circle cx="1185.2" cy="681.5" r="2.3"/><circle cx="1171.8" cy="665.2" r="2.3"/><circle cx="1158.4" cy="648.9" r="2.3"/><circle cx="1147.2" cy="631.0" r="2.3"/><circle cx="1136.1" cy="613.1" r="2.3"/><circle cx="1125.0" cy="595.1" r="2.3"/><circle cx="1085.3" cy="521.0" r="2.3"/><circle cx="1077.8" cy="501.2" r="2.3"/><circle cx="1071.9" cy="481.0" r="2.3"/><circle cx="1065.9" cy="460.7" r="2.3"/><circle cx="1059.0" cy="440.8" r="2.3"/><circle cx="1050.6" cy="421.5" r="2.3"/><circle cx="1042.5" cy="402.0" r="2.3"/><circle cx="1035.4" cy="382.1" r="2.3"/><circle cx="1028.3" cy="362.2" r="2.3"/><circle cx="1021.1" cy="342.4" r="2.3"/><circle cx="1014.0" cy="322.5" r="2.3"/><circle cx="1006.9" cy="302.6" r="2.3"/><circle cx="999.7" cy="282.8" r="2.3"/><circle cx="992.6" cy="262.9" r="2.3"/><circle cx="985.4" cy="243.0" r="2.3"/><circle cx="975.9" cy="224.3" r="2.3"/><circle cx="966.0" cy="205.6" r="2.3"/><circle cx="956.1" cy="186.9" r="2.3"/><circle cx="946.3" cy="168.3" r="2.3"/><circle cx="936.4" cy="149.6" r="2.3"/><circle cx="918.7" cy="144.0" r="2.3"/><circle cx="897.6" cy="144.0" r="2.3"/><circle cx="876.5" cy="144.0" r="2.3"/><circle cx="855.3" cy="144.0" r="2.3"/><circle cx="834.2" cy="144.0" r="2.3"/><circle cx="813.1" cy="144.0" r="2.3"/><circle cx="792.0" cy="144.0" r="2.3"/><circle cx="824.1" cy="170.5" r="2.3"/><circle cx="863.6" cy="169.0" r="2.3"/><circle cx="894.8" cy="169.7" r="2.3"/><circle cx="931.4" cy="172.0" r="2.3"/><circle cx="820.1" cy="195.7" r="2.3"/><circle cx="855.2" cy="197.8" r="2.3"/><circle cx="884.6" cy="195.7" r="2.3"/><circle cx="923.1" cy="195.4" r="2.3"/><circle cx="843.4" cy="223.5" r="2.3"/><circle cx="877.5" cy="223.0" r="2.3"/><circle cx="916.0" cy="220.8" r="2.3"/><circle cx="950.8" cy="222.6" r="2.3"/><circle cx="838.2" cy="249.7" r="2.3"/><circle cx="870.3" cy="249.6" r="2.3"/><circle cx="906.3" cy="250.0" r="2.3"/><circle cx="938.5" cy="249.0" r="2.3"/><circle cx="862.4" cy="273.9" r="2.3"/><circle cx="898.5" cy="275.3" r="2.3"/><circle cx="930.8" cy="272.8" r="2.3"/><circle cx="966.9" cy="275.4" r="2.3"/><circle cx="855.4" cy="299.1" r="2.3"/><circle cx="889.1" cy="300.5" r="2.3"/><circle cx="925.5" cy="298.6" r="2.3"/><circle cx="956.5" cy="301.1" r="2.3"/><circle cx="991.3" cy="299.6" r="2.3"/><circle cx="880.8" cy="326.9" r="2.3"/><circle cx="918.3" cy="327.8" r="2.3"/><circle cx="949.1" cy="327.6" r="2.3"/><circle cx="985.4" cy="324.8" r="2.3"/><circle cx="905.4" cy="351.4" r="2.3"/><circle cx="941.4" cy="351.1" r="2.3"/><circle cx="975.5" cy="353.0" r="2.3"/><circle cx="1012.7" cy="353.1" r="2.3"/><circle cx="935.8" cy="377.9" r="2.3"/><circle cx="971.1" cy="379.7" r="2.3"/><circle cx="1005.4" cy="379.1" r="2.3"/><circle cx="959.1" cy="405.8" r="2.3"/><circle cx="994.1" cy="404.7" r="2.3"/><circle cx="1029.5" cy="404.7" r="2.3"/><circle cx="954.5" cy="429.5" r="2.3"/><circle cx="984.0" cy="429.0" r="2.3"/><circle cx="1023.9" cy="431.0" r="2.3"/><circle cx="980.3" cy="456.9" r="2.3"/><circle cx="1014.5" cy="456.4" r="2.3"/><circle cx="1046.0" cy="456.1" r="2.3"/><circle cx="1005.8" cy="481.9" r="2.3"/><circle cx="1042.8" cy="481.4" r="2.3"/><circle cx="996.2" cy="506.2" r="2.3"/><circle cx="1031.4" cy="508.3" r="2.3"/><circle cx="1066.4" cy="507.5" r="2.3"/><circle cx="1068.6" cy="610.6" r="2.3"/><circle cx="1100.4" cy="613.4" r="2.3"/><circle cx="1060.3" cy="639.3" r="2.3"/><circle cx="1092.2" cy="638.6" r="2.3"/><circle cx="1127.1" cy="636.5" r="2.3"/><circle cx="1051.3" cy="664.0" r="2.3"/><circle cx="1088.9" cy="665.4" r="2.3"/><circle cx="1122.9" cy="663.6" r="2.3"/><circle cx="1078.8" cy="690.5" r="2.3"/><circle cx="1114.3" cy="688.6" r="2.3"/><circle cx="1149.2" cy="689.3" r="2.3"/><circle cx="984.7" cy="526.3" r="2.3"/><circle cx="999.5" cy="533.2" r="2.3"/><circle cx="1030.4" cy="534.5" r="2.3"/><circle cx="1061.9" cy="536.7" r="2.3"/><circle cx="1070.1" cy="541.1" r="2.3"/><circle cx="1090.2" cy="536.4" r="2.3"/><circle cx="1100.6" cy="545.2" r="2.3"/><circle cx="1105.3" cy="554.0" r="2.3"/><circle cx="1109.1" cy="557.8" r="2.3"/><circle cx="1105.3" cy="566.3" r="2.3"/><circle cx="1097.4" cy="553.1" r="2.3"/><circle cx="1088.6" cy="556.2" r="2.3"/><circle cx="1078.6" cy="560.9" r="2.3"/><circle cx="1063.4" cy="561.9" r="2.3"/><circle cx="1044.5" cy="552.1" r="2.3"/><circle cx="1044.5" cy="566.3" r="2.3"/><circle cx="1044.5" cy="576.0" r="2.3"/><circle cx="1027.2" cy="580.8" r="2.3"/><circle cx="1017.2" cy="571.0" r="2.3"/><circle cx="1035.1" cy="586.8" r="2.3"/><circle cx="1047.1" cy="589.3" r="2.3"/><circle cx="1055.6" cy="590.8" r="2.3"/><circle cx="1039.8" cy="596.5" r="2.3"/><circle cx="1020.9" cy="596.2" r="2.3"/><circle cx="1038.6" cy="608.2" r="2.3"/><circle cx="1063.4" cy="583.9" r="2.3"/><circle cx="1079.5" cy="587.1" r="2.3"/><circle cx="1088.9" cy="583.0" r="2.3"/><circle cx="1090.2" cy="573.5" r="2.3"/><circle cx="1079.5" cy="577.6" r="2.3"/><circle cx="1101.5" cy="579.2" r="2.3"/><circle cx="1123.3" cy="580.5" r="2.3"/></g><g fill="#fff" stroke="#d01818" stroke-width="1.3"><rect x="1333.5" y="634.5" width="22" height="22"/><rect x="1333.5" y="674.5" width="22" height="22"/></g><path d="M1338,639 L1351,652 M1351,639 L1338,652" stroke="#d01818" stroke-width="1.8"/><path d="M1339,679 H1350 V692 H1339 Z M1344.5,679 V692 M1339,685.5 H1350" stroke="#d01818" stroke-width="1.5" fill="none"/></g></svg>
<div class="a" style="left:1593px;top:89px;width:5px;height:969px;background:#232323;"></div><div class="a" style="left:1598px;top:89px;width:322px;height:969px;background:#2e2e2e;"></div><div class="t" style="left:1613px;top:93px;color:#e6e6e6;font-size:12px;">Deformer</div><div class="a" style="left:1598px;top:109px;width:80px;height:2px;background:#dcdcdc;"></div><div class="t" style="left:1694px;top:93px;color:#e6e6e6;font-size:12px;">Part</div><svg class="a" style="left:1605px;top:117px;" width="18" height="14" viewBox="0 0 18 14"><path d="M1 7 Q9 -1 17 7 Q9 15 1 7Z" fill="#bdbdbd"/><circle cx="9" cy="7" r="3" fill="#2e2e2e"/><circle cx="9.5" cy="6.5" r="1.2" fill="#bdbdbd"/></svg><svg class="a" style="left:1631px;top:116px;" width="14" height="18" viewBox="0 0 14 18"><path d="M3.5 8 V5 A3.5 3.5 0 0 1 10.5 5 V8" fill="none" stroke="#bdbdbd" stroke-width="1.8"/><rect x="2" y="8" width="10" height="9" rx="1.5" fill="#bdbdbd"/></svg><svg class="a" style="left:1654px;top:115px;" width="18" height="18" viewBox="0 0 18 18"><circle cx="9" cy="9" r="7.7" fill="none" stroke="#bdbdbd" stroke-width="1.1"/><path d="M5.5 7.5 L9 11 L12.5 7.5" fill="none" stroke="#bdbdbd" stroke-width="1.6"/></svg><div class="a" style="left:1687px;top:112px;width:24px;height:24px;background:#505050;border-radius:3px;"></div><svg class="a" style="left:1689px;top:115px;" width="20" height="18" viewBox="0 0 20 18"><path d="M3 6 H16 M13 3 L16 6 L13 9 M17 12 H4 M7 9 L4 12 L7 15" fill="none" stroke="#c8c8c8" stroke-width="1.1"/></svg><svg class="a" style="left:1714px;top:114px;" width="24" height="22" viewBox="0 0 24 22"><path d="M2 15 V21 H16 V15" fill="none" stroke="#bdbdbd" stroke-width="1.1"/><path d="M9 6 V19 M6 9 L9 6 L12 9 M6 16 L9 19 L12 16" fill="none" stroke="#bdbdbd" stroke-width="1.3"/><rect x="14" y="5" width="7" height="5" rx="1" fill="#bdbdbd"/><path d="M15.5 5 V3.5 A2 2 0 0 1 19.5 3.5 V5" fill="none" stroke="#bdbdbd" stroke-width="1.2"/></svg><div class="a" style="left:1598px;top:137px;width:308px;height:921px;background:#262626;border-top:1px solid #3e3e3e;box-sizing:border-box;"></div><div class="a" style="left:1659px;top:138px;width:1px;height:920px;background:#3a3a3a;"></div><div class="a" style="left:1906px;top:138px;width:14px;height:919px;background:#232323;"></div><div class="a" style="left:1906px;top:480px;width:12px;height:457px;background:#4d4d4d;"></div><svg class="a" style="left:1607px;top:139px;" width="15" height="12" viewBox="0 0 15 12"><path d="M1 6 Q7.5 -0.5 14 6 Q7.5 12.5 1 6Z" fill="#bdbdbd"/><circle cx="7.5" cy="6" r="2.6" fill="#262626"/><circle cx="8" cy="5.6" r="1" fill="#bdbdbd"/></svg><svg class="a" style="left:1632px;top:138px;" width="14" height="14" viewBox="0 0 14 14"><circle cx="7" cy="7" r="5.5" fill="none" stroke="#8e8e8e" stroke-width="1.7"/></svg><svg class="a" style="left:1704px;top:139px;" width="10" height="12" viewBox="0 0 10 12"><path d="M3 1.5 L7.5 6 L3 10.5" fill="none" stroke="#c8c8c8" stroke-width="1.5"/></svg><svg class="a" style="left:1714px;top:139px;" width="12" height="12" viewBox="0 0 12 12"><path d="M1 1 H5 L4 5 H1 Z M7 1 H11 V5 H6 Z M1 7 H4 L5 11 H1 Z M6 7 H11 V11 H7 Z" fill="#8dc63f"/></svg><div class="t" style="left:1730px;top:138px;color:#e8e8e8;font-size:12px;">Face [3D Rotation]</div><svg class="a" style="left:1607px;top:161px;" width="15" height="12" viewBox="0 0 15 12"><path d="M1 6 Q7.5 -0.5 14 6 Q7.5 12.5 1 6Z" fill="#bdbdbd"/><circle cx="7.5" cy="6" r="2.6" fill="#262626"/><circle cx="8" cy="5.6" r="1" fill="#bdbdbd"/></svg><svg class="a" style="left:1632px;top:160px;" width="14" height="14" viewBox="0 0 14 14"><circle cx="7" cy="7" r="5.5" fill="none" stroke="#8e8e8e" stroke-width="1.7"/></svg><svg class="a" style="left:1704px;top:161px;" width="10" height="12" viewBox="0 0 10 12"><path d="M3 1.5 L7.5 6 L3 10.5" fill="none" stroke="#c8c8c8" stroke-width="1.5"/></svg><svg class="a" style="left:1714px;top:161px;" width="12" height="12" viewBox="0 0 12 12"><path d="M1 1 H5 L4 5 H1 Z M7 1 H11 V5 H6 Z M1 7 H4 L5 11 H1 Z M6 7 H11 V11 H7 Z" fill="#8dc63f"/></svg><div class="t" style="left:1730px;top:160px;color:#e8e8e8;font-size:12px;">Eyebrows [3D Rotation]</div><svg class="a" style="left:1607px;top:183px;" width="15" height="12" viewBox="0 0 15 12"><path d="M1 6 Q7.5 -0.5 14 6 Q7.5 12.5 1 6Z" fill="#bdbdbd"/><circle cx="7.5" cy="6" r="2.6" fill="#262626"/><circle cx="8" cy="5.6" r="1" fill="#bdbdbd"/></svg><svg class="a" style="left:1632px;top:182px;" width="14" height="14" viewBox="0 0 14 14"><circle cx="7" cy="7" r="5.5" fill="none" stroke="#8e8e8e" stroke-width="1.7"/></svg><svg class="a" style="left:1704px;top:183px;" width="10" height="12" viewBox="0 0 10 12"><path d="M3 1.5 L7.5 6 L3 10.5" fill="none" stroke="#c8c8c8" stroke-width="1.5"/></svg><svg class="a" style="left:1714px;top:183px;" width="12" height="12" viewBox="0 0 12 12"><path d="M1 1 H5 L4 5 H1 Z M7 1 H11 V5 H6 Z M1 7 H4 L5 11 H1 Z M6 7 H11 V11 H7 Z" fill="#8dc63f"/></svg><div class="t" style="left:1730px;top:182px;color:#e8e8e8;font-size:12px;">Eyes [3D Rotation]</div><svg class="a" style="left:1607px;top:205px;" width="15" height="12" viewBox="0 0 15 12"><path d="M1 6 Q7.5 -0.5 14 6 Q7.5 12.5 1 6Z" fill="#bdbdbd"/><circle cx="7.5" cy="6" r="2.6" fill="#262626"/><circle cx="8" cy="5.6" r="1" fill="#bdbdbd"/></svg><svg class="a" style="left:1632px;top:204px;" width="14" height="14" viewBox="0 0 14 14"><circle cx="7" cy="7" r="5.5" fill="none" stroke="#8e8e8e" stroke-width="1.7"/></svg><svg class="a" style="left:1704px;top:205px;" width="10" height="12" viewBox="0 0 10 12"><path d="M3 1.5 L7.5 6 L3 10.5" fill="none" stroke="#c8c8c8" stroke-width="1.5"/></svg><svg class="a" style="left:1714px;top:205px;" width="12" height="12" viewBox="0 0 12 12"><path d="M1 1 H5 L4 5 H1 Z M7 1 H11 V5 H6 Z M1 7 H4 L5 11 H1 Z M6 7 H11 V11 H7 Z" fill="#8dc63f"/></svg><div class="t" style="left:1730px;top:204px;color:#e8e8e8;font-size:12px;">Mouth [3D Rotation]</div><svg class="a" style="left:1607px;top:227px;" width="15" height="12" viewBox="0 0 15 12"><path d="M1 6 Q7.5 -0.5 14 6 Q7.5 12.5 1 6Z" fill="#bdbdbd"/><circle cx="7.5" cy="6" r="2.6" fill="#262626"/><circle cx="8" cy="5.6" r="1" fill="#bdbdbd"/></svg><svg class="a" style="left:1632px;top:226px;" width="14" height="14" viewBox="0 0 14 14"><circle cx="7" cy="7" r="5.5" fill="none" stroke="#8e8e8e" stroke-width="1.7"/></svg><svg class="a" style="left:1704px;top:227px;" width="10" height="12" viewBox="0 0 10 12"><path d="M3 1.5 L7.5 6 L3 10.5" fill="none" stroke="#c8c8c8" stroke-width="1.5"/></svg><svg class="a" style="left:1714px;top:227px;" width="12" height="12" viewBox="0 0 12 12"><path d="M1 1 H5 L4 5 H1 Z M7 1 H11 V5 H6 Z M1 7 H4 L5 11 H1 Z M6 7 H11 V11 H7 Z" fill="#8dc63f"/></svg><div class="t" style="left:1730px;top:226px;color:#e8e8e8;font-size:12px;">Ears [XY]</div><svg class="a" style="left:1607px;top:249px;" width="15" height="12" viewBox="0 0 15 12"><path d="M1 6 Q7.5 -0.5 14 6 Q7.5 12.5 1 6Z" fill="#bdbdbd"/><circle cx="7.5" cy="6" r="2.6" fill="#262626"/><circle cx="8" cy="5.6" r="1" fill="#bdbdbd"/></svg><svg class="a" style="left:1632px;top:248px;" width="14" height="14" viewBox="0 0 14 14"><circle cx="7" cy="7" r="5.5" fill="none" stroke="#8e8e8e" stroke-width="1.7"/></svg><svg class="a" style="left:1704px;top:249px;" width="10" height="12" viewBox="0 0 10 12"><path d="M3 1.5 L7.5 6 L3 10.5" fill="none" stroke="#c8c8c8" stroke-width="1.5"/></svg><svg class="a" style="left:1714px;top:249px;" width="12" height="12" viewBox="0 0 12 12"><path d="M1 1 H5 L4 5 H1 Z M7 1 H11 V5 H6 Z M1 7 H4 L5 11 H1 Z M6 7 H11 V11 H7 Z" fill="#8dc63f"/></svg><div class="t" style="left:1730px;top:248px;color:#e8e8e8;font-size:12px;">Nose [3D Rotation]</div><svg class="a" style="left:1607px;top:271px;" width="15" height="12" viewBox="0 0 15 12"><path d="M1 6 Q7.5 -0.5 14 6 Q7.5 12.5 1 6Z" fill="#bdbdbd"/><circle cx="7.5" cy="6" r="2.6" fill="#262626"/><circle cx="8" cy="5.6" r="1" fill="#bdbdbd"/></svg><svg class="a" style="left:1632px;top:270px;" width="14" height="14" viewBox="0 0 14 14"><circle cx="7" cy="7" r="5.5" fill="none" stroke="#8e8e8e" stroke-width="1.7"/></svg><svg class="a" style="left:1679px;top:272px;" width="12" height="10" viewBox="0 0 12 10"><path d="M1.5 2.5 L6 7 L10.5 2.5" fill="none" stroke="#c8c8c8" stroke-width="1.5"/></svg><svg class="a" style="left:1690px;top:271px;" width="12" height="12" viewBox="0 0 12 12"><path d="M1 1 H5 L4 5 H1 Z M7 1 H11 V5 H6 Z M1 7 H4 L5 11 H1 Z M6 7 H11 V11 H7 Z" fill="#8dc63f"/></svg><div class="t" style="left:1706px;top:270px;color:#e8e8e8;font-size:12px;">Body [X]</div><svg class="a" style="left:1607px;top:293px;" width="15" height="12" viewBox="0 0 15 12"><path d="M1 6 Q7.5 -0.5 14 6 Q7.5 12.5 1 6Z" fill="#bdbdbd"/><circle cx="7.5" cy="6" r="2.6" fill="#262626"/><circle cx="8" cy="5.6" r="1" fill="#bdbdbd"/></svg><svg class="a" style="left:1632px;top:292px;" width="14" height="14" viewBox="0 0 14 14"><circle cx="7" cy="7" r="5.5" fill="none" stroke="#8e8e8e" stroke-width="1.7"/></svg><div class="t" style="left:1714px;top:292px;color:#8fb0f0;font-size:12px;">Upper_Torso</div><svg class="a" style="left:1607px;top:315px;" width="15" height="12" viewBox="0 0 15 12"><path d="M1 6 Q7.5 -0.5 14 6 Q7.5 12.5 1 6Z" fill="#bdbdbd"/><circle cx="7.5" cy="6" r="2.6" fill="#262626"/><circle cx="8" cy="5.6" r="1" fill="#bdbdbd"/></svg><svg class="a" style="left:1632px;top:314px;" width="14" height="14" viewBox="0 0 14 14"><circle cx="7" cy="7" r="5.5" fill="none" stroke="#8e8e8e" stroke-width="1.7"/></svg><svg class="a" style="left:1688px;top:315px;" width="10" height="12" viewBox="0 0 10 12"><path d="M3 1.5 L7.5 6 L3 10.5" fill="none" stroke="#c8c8c8" stroke-width="1.5"/></svg><svg class="a" style="left:1698px;top:315px;" width="12" height="12" viewBox="0 0 12 12"><path d="M1 1 H5 L4 5 H1 Z M7 1 H11 V5 H6 Z M1 7 H4 L5 11 H1 Z M6 7 H11 V11 H7 Z" fill="#8dc63f"/></svg><div class="t" style="left:1714px;top:314px;color:#e8e8e8;font-size:12px;">Shirt Waist [TEMP]</div><svg class="a" style="left:1607px;top:337px;" width="15" height="12" viewBox="0 0 15 12"><path d="M1 6 Q7.5 -0.5 14 6 Q7.5 12.5 1 6Z" fill="#bdbdbd"/><circle cx="7.5" cy="6" r="2.6" fill="#262626"/><circle cx="8" cy="5.6" r="1" fill="#bdbdbd"/></svg><svg class="a" style="left:1632px;top:336px;" width="14" height="14" viewBox="0 0 14 14"><circle cx="7" cy="7" r="5.5" fill="none" stroke="#8e8e8e" stroke-width="1.7"/></svg><svg class="a" style="left:1688px;top:337px;" width="10" height="12" viewBox="0 0 10 12"><path d="M3 1.5 L7.5 6 L3 10.5" fill="none" stroke="#c8c8c8" stroke-width="1.5"/></svg><svg class="a" style="left:1698px;top:337px;" width="12" height="12" viewBox="0 0 12 12"><path d="M1 1 H5 L4 5 H1 Z M7 1 H11 V5 H6 Z M1 7 H4 L5 11 H1 Z M6 7 H11 V11 H7 Z" fill="#8dc63f"/></svg><div class="t" style="left:1714px;top:336px;color:#e8e8e8;font-size:12px;">Breasts [XY]</div><svg class="a" style="left:1607px;top:359px;" width="15" height="12" viewBox="0 0 15 12"><path d="M1 6 Q7.5 -0.5 14 6 Q7.5 12.5 1 6Z" fill="#bdbdbd"/><circle cx="7.5" cy="6" r="2.6" fill="#262626"/><circle cx="8" cy="5.6" r="1" fill="#bdbdbd"/></svg><svg class="a" style="left:1632px;top:358px;" width="14" height="14" viewBox="0 0 14 14"><circle cx="7" cy="7" r="5.5" fill="none" stroke="#8e8e8e" stroke-width="1.7"/></svg><svg class="a" style="left:1688px;top:359px;" width="10" height="12" viewBox="0 0 10 12"><path d="M3 1.5 L7.5 6 L3 10.5" fill="none" stroke="#c8c8c8" stroke-width="1.5"/></svg><svg class="a" style="left:1698px;top:359px;" width="12" height="12" viewBox="0 0 12 12"><path d="M1 1 H5 L4 5 H1 Z M7 1 H11 V5 H6 Z M1 7 H4 L5 11 H1 Z M6 7 H11 V11 H7 Z" fill="#8dc63f"/></svg><div class="t" style="left:1714px;top:358px;color:#e8e8e8;font-size:12px;">Left Leg [Master]</div><svg class="a" style="left:1607px;top:381px;" width="15" height="12" viewBox="0 0 15 12"><path d="M1 6 Q7.5 -0.5 14 6 Q7.5 12.5 1 6Z" fill="#bdbdbd"/><circle cx="7.5" cy="6" r="2.6" fill="#262626"/><circle cx="8" cy="5.6" r="1" fill="#bdbdbd"/></svg><svg class="a" style="left:1632px;top:380px;" width="14" height="14" viewBox="0 0 14 14"><circle cx="7" cy="7" r="5.5" fill="none" stroke="#8e8e8e" stroke-width="1.7"/></svg><svg class="a" style="left:1688px;top:381px;" width="10" height="12" viewBox="0 0 10 12"><path d="M3 1.5 L7.5 6 L3 10.5" fill="none" stroke="#c8c8c8" stroke-width="1.5"/></svg><svg class="a" style="left:1698px;top:381px;" width="12" height="12" viewBox="0 0 12 12"><path d="M1 1 H5 L4 5 H1 Z M7 1 H11 V5 H6 Z M1 7 H4 L5 11 H1 Z M6 7 H11 V11 H7 Z" fill="#8dc63f"/></svg><div class="t" style="left:1714px;top:380px;color:#e8e8e8;font-size:12px;">Left Leg [Master]</div><svg class="a" style="left:1607px;top:403px;" width="15" height="12" viewBox="0 0 15 12"><path d="M1 6 Q7.5 -0.5 14 6 Q7.5 12.5 1 6Z" fill="#bdbdbd"/><circle cx="7.5" cy="6" r="2.6" fill="#262626"/><circle cx="8" cy="5.6" r="1" fill="#bdbdbd"/></svg><svg class="a" style="left:1632px;top:402px;" width="14" height="14" viewBox="0 0 14 14"><circle cx="7" cy="7" r="5.5" fill="none" stroke="#8e8e8e" stroke-width="1.7"/></svg><svg class="a" style="left:1688px;top:403px;" width="10" height="12" viewBox="0 0 10 12"><path d="M3 1.5 L7.5 6 L3 10.5" fill="none" stroke="#c8c8c8" stroke-width="1.5"/></svg><svg class="a" style="left:1698px;top:403px;" width="12" height="12" viewBox="0 0 12 12"><path d="M1 1 H5 L4 5 H1 Z M7 1 H11 V5 H6 Z M1 7 H4 L5 11 H1 Z M6 7 H11 V11 H7 Z" fill="#8dc63f"/></svg><div class="t" style="left:1714px;top:402px;color:#e8e8e8;font-size:12px;">Sleeve Left [TOGGLE]</div><svg class="a" style="left:1607px;top:425px;" width="15" height="12" viewBox="0 0 15 12"><path d="M1 6 Q7.5 -0.5 14 6 Q7.5 12.5 1 6Z" fill="#bdbdbd"/><circle cx="7.5" cy="6" r="2.6" fill="#262626"/><circle cx="8" cy="5.6" r="1" fill="#bdbdbd"/></svg><svg class="a" style="left:1632px;top:424px;" width="14" height="14" viewBox="0 0 14 14"><circle cx="7" cy="7" r="5.5" fill="none" stroke="#8e8e8e" stroke-width="1.7"/></svg><svg class="a" style="left:1688px;top:425px;" width="10" height="12" viewBox="0 0 10 12"><path d="M3 1.5 L7.5 6 L3 10.5" fill="none" stroke="#c8c8c8" stroke-width="1.5"/></svg><svg class="a" style="left:1698px;top:425px;" width="12" height="12" viewBox="0 0 12 12"><path d="M1 1 H5 L4 5 H1 Z M7 1 H11 V5 H6 Z M1 7 H4 L5 11 H1 Z M6 7 H11 V11 H7 Z" fill="#8dc63f"/></svg><div class="t" style="left:1714px;top:424px;color:#e8e8e8;font-size:12px;">Left Arm [XY]</div><svg class="a" style="left:1607px;top:447px;" width="15" height="12" viewBox="0 0 15 12"><path d="M1 6 Q7.5 -0.5 14 6 Q7.5 12.5 1 6Z" fill="#bdbdbd"/><circle cx="7.5" cy="6" r="2.6" fill="#262626"/><circle cx="8" cy="5.6" r="1" fill="#bdbdbd"/></svg><svg class="a" style="left:1632px;top:446px;" width="14" height="14" viewBox="0 0 14 14"><circle cx="7" cy="7" r="5.5" fill="none" stroke="#8e8e8e" stroke-width="1.7"/></svg><svg class="a" style="left:1688px;top:447px;" width="10" height="12" viewBox="0 0 10 12"><path d="M3 1.5 L7.5 6 L3 10.5" fill="none" stroke="#c8c8c8" stroke-width="1.5"/></svg><svg class="a" style="left:1698px;top:447px;" width="12" height="12" viewBox="0 0 12 12"><path d="M1 1 H5 L4 5 H1 Z M7 1 H11 V5 H6 Z M1 7 H4 L5 11 H1 Z M6 7 H11 V11 H7 Z" fill="#8dc63f"/></svg><div class="t" style="left:1714px;top:446px;color:#e8e8e8;font-size:12px;">Sleeve Right [TOGGLE]</div><svg class="a" style="left:1607px;top:469px;" width="15" height="12" viewBox="0 0 15 12"><path d="M1 6 Q7.5 -0.5 14 6 Q7.5 12.5 1 6Z" fill="#bdbdbd"/><circle cx="7.5" cy="6" r="2.6" fill="#262626"/><circle cx="8" cy="5.6" r="1" fill="#bdbdbd"/></svg><svg class="a" style="left:1632px;top:468px;" width="14" height="14" viewBox="0 0 14 14"><circle cx="7" cy="7" r="5.5" fill="none" stroke="#8e8e8e" stroke-width="1.7"/></svg><svg class="a" style="left:1688px;top:469px;" width="10" height="12" viewBox="0 0 10 12"><path d="M3 1.5 L7.5 6 L3 10.5" fill="none" stroke="#c8c8c8" stroke-width="1.5"/></svg><svg class="a" style="left:1698px;top:469px;" width="12" height="12" viewBox="0 0 12 12"><path d="M1 1 H5 L4 5 H1 Z M7 1 H11 V5 H6 Z M1 7 H4 L5 11 H1 Z M6 7 H11 V11 H7 Z" fill="#8dc63f"/></svg><div class="t" style="left:1714px;top:468px;color:#e8e8e8;font-size:12px;">Neck [Body X]</div><svg class="a" style="left:1607px;top:491px;" width="15" height="12" viewBox="0 0 15 12"><path d="M1 6 Q7.5 -0.5 14 6 Q7.5 12.5 1 6Z" fill="#bdbdbd"/><circle cx="7.5" cy="6" r="2.6" fill="#262626"/><circle cx="8" cy="5.6" r="1" fill="#bdbdbd"/></svg><svg class="a" style="left:1632px;top:490px;" width="14" height="14" viewBox="0 0 14 14"><circle cx="7" cy="7" r="5.5" fill="none" stroke="#8e8e8e" stroke-width="1.7"/></svg><svg class="a" style="left:1688px;top:491px;" width="10" height="12" viewBox="0 0 10 12"><path d="M3 1.5 L7.5 6 L3 10.5" fill="none" stroke="#c8c8c8" stroke-width="1.5"/></svg><svg class="a" style="left:1698px;top:491px;" width="12" height="12" viewBox="0 0 12 12"><path d="M1 1 H5 L4 5 H1 Z M7 1 H11 V5 H6 Z M1 7 H4 L5 11 H1 Z M6 7 H11 V11 H7 Z" fill="#8dc63f"/></svg><div class="t" style="left:1714px;top:490px;color:#e8e8e8;font-size:12px;">Shirt [XY]</div><svg class="a" style="left:1607px;top:513px;" width="15" height="12" viewBox="0 0 15 12"><path d="M1 6 Q7.5 -0.5 14 6 Q7.5 12.5 1 6Z" fill="#bdbdbd"/><circle cx="7.5" cy="6" r="2.6" fill="#262626"/><circle cx="8" cy="5.6" r="1" fill="#bdbdbd"/></svg><svg class="a" style="left:1632px;top:512px;" width="14" height="14" viewBox="0 0 14 14"><circle cx="7" cy="7" r="5.5" fill="none" stroke="#8e8e8e" stroke-width="1.7"/></svg><svg class="a" style="left:1688px;top:513px;" width="10" height="12" viewBox="0 0 10 12"><path d="M3 1.5 L7.5 6 L3 10.5" fill="none" stroke="#c8c8c8" stroke-width="1.5"/></svg><svg class="a" style="left:1698px;top:513px;" width="12" height="12" viewBox="0 0 12 12"><path d="M1 1 H5 L4 5 H1 Z M7 1 H11 V5 H6 Z M1 7 H4 L5 11 H1 Z M6 7 H11 V11 H7 Z" fill="#8dc63f"/></svg><div class="t" style="left:1714px;top:512px;color:#e8e8e8;font-size:12px;">Necklace [XY]</div><svg class="a" style="left:1607px;top:535px;" width="15" height="12" viewBox="0 0 15 12"><path d="M1 6 Q7.5 -0.5 14 6 Q7.5 12.5 1 6Z" fill="#bdbdbd"/><circle cx="7.5" cy="6" r="2.6" fill="#262626"/><circle cx="8" cy="5.6" r="1" fill="#bdbdbd"/></svg><svg class="a" style="left:1632px;top:534px;" width="14" height="14" viewBox="0 0 14 14"><circle cx="7" cy="7" r="5.5" fill="none" stroke="#8e8e8e" stroke-width="1.7"/></svg><svg class="a" style="left:1688px;top:535px;" width="10" height="12" viewBox="0 0 10 12"><path d="M3 1.5 L7.5 6 L3 10.5" fill="none" stroke="#c8c8c8" stroke-width="1.5"/></svg><svg class="a" style="left:1698px;top:535px;" width="12" height="12" viewBox="0 0 12 12"><path d="M1 1 H5 L4 5 H1 Z M7 1 H11 V5 H6 Z M1 7 H4 L5 11 H1 Z M6 7 H11 V11 H7 Z" fill="#8dc63f"/></svg><div class="t" style="left:1714px;top:534px;color:#e8e8e8;font-size:12px;">Fishnet [XY]</div><svg class="a" style="left:1607px;top:557px;" width="15" height="12" viewBox="0 0 15 12"><path d="M1 6 Q7.5 -0.5 14 6 Q7.5 12.5 1 6Z" fill="#bdbdbd"/><circle cx="7.5" cy="6" r="2.6" fill="#262626"/><circle cx="8" cy="5.6" r="1" fill="#bdbdbd"/></svg><svg class="a" style="left:1632px;top:556px;" width="14" height="14" viewBox="0 0 14 14"><circle cx="7" cy="7" r="5.5" fill="none" stroke="#8e8e8e" stroke-width="1.7"/></svg><svg class="a" style="left:1688px;top:557px;" width="10" height="12" viewBox="0 0 10 12"><path d="M3 1.5 L7.5 6 L3 10.5" fill="none" stroke="#c8c8c8" stroke-width="1.5"/></svg><svg class="a" style="left:1698px;top:557px;" width="12" height="12" viewBox="0 0 12 12"><path d="M1 1 H5 L4 5 H1 Z M7 1 H11 V5 H6 Z M1 7 H4 L5 11 H1 Z M6 7 H11 V11 H7 Z" fill="#8dc63f"/></svg><div class="t" style="left:1714px;top:556px;color:#e8e8e8;font-size:12px;">Skirt [XY]</div><svg class="a" style="left:1607px;top:579px;" width="15" height="12" viewBox="0 0 15 12"><path d="M1 6 Q7.5 -0.5 14 6 Q7.5 12.5 1 6Z" fill="#bdbdbd"/><circle cx="7.5" cy="6" r="2.6" fill="#262626"/><circle cx="8" cy="5.6" r="1" fill="#bdbdbd"/></svg><svg class="a" style="left:1632px;top:578px;" width="14" height="14" viewBox="0 0 14 14"><circle cx="7" cy="7" r="5.5" fill="none" stroke="#8e8e8e" stroke-width="1.7"/></svg><svg class="a" style="left:1688px;top:579px;" width="10" height="12" viewBox="0 0 10 12"><path d="M3 1.5 L7.5 6 L3 10.5" fill="none" stroke="#c8c8c8" stroke-width="1.5"/></svg><svg class="a" style="left:1698px;top:579px;" width="12" height="12" viewBox="0 0 12 12"><path d="M1 1 H5 L4 5 H1 Z M7 1 H11 V5 H6 Z M1 7 H4 L5 11 H1 Z M6 7 H11 V11 H7 Z" fill="#8dc63f"/></svg><div class="t" style="left:1714px;top:578px;color:#e8e8e8;font-size:12px;">Lower Torso + Waist [Hips Z]</div><svg class="a" style="left:1607px;top:601px;" width="15" height="12" viewBox="0 0 15 12"><path d="M1 6 Q7.5 -0.5 14 6 Q7.5 12.5 1 6Z" fill="#bdbdbd"/><circle cx="7.5" cy="6" r="2.6" fill="#262626"/><circle cx="8" cy="5.6" r="1" fill="#bdbdbd"/></svg><svg class="a" style="left:1632px;top:600px;" width="14" height="14" viewBox="0 0 14 14"><circle cx="7" cy="7" r="5.5" fill="none" stroke="#8e8e8e" stroke-width="1.7"/></svg><svg class="a" style="left:1688px;top:601px;" width="10" height="12" viewBox="0 0 10 12"><path d="M3 1.5 L7.5 6 L3 10.5" fill="none" stroke="#c8c8c8" stroke-width="1.5"/></svg><svg class="a" style="left:1698px;top:601px;" width="12" height="12" viewBox="0 0 12 12"><path d="M1 1 H5 L4 5 H1 Z M7 1 H11 V5 H6 Z M1 7 H4 L5 11 H1 Z M6 7 H11 V11 H7 Z" fill="#8dc63f"/></svg><div class="t" style="left:1714px;top:600px;color:#e8e8e8;font-size:12px;">Upper Torso [XY]</div><svg class="a" style="left:1607px;top:623px;" width="15" height="12" viewBox="0 0 15 12"><path d="M1 6 Q7.5 -0.5 14 6 Q7.5 12.5 1 6Z" fill="#bdbdbd"/><circle cx="7.5" cy="6" r="2.6" fill="#262626"/><circle cx="8" cy="5.6" r="1" fill="#bdbdbd"/></svg><svg class="a" style="left:1632px;top:622px;" width="14" height="14" viewBox="0 0 14 14"><circle cx="7" cy="7" r="5.5" fill="none" stroke="#8e8e8e" stroke-width="1.7"/></svg><svg class="a" style="left:1688px;top:623px;" width="10" height="12" viewBox="0 0 10 12"><path d="M3 1.5 L7.5 6 L3 10.5" fill="none" stroke="#c8c8c8" stroke-width="1.5"/></svg><svg class="a" style="left:1698px;top:623px;" width="12" height="12" viewBox="0 0 12 12"><path d="M1 1 H5 L4 5 H1 Z M7 1 H11 V5 H6 Z M1 7 H4 L5 11 H1 Z M6 7 H11 V11 H7 Z" fill="#8dc63f"/></svg><div class="t" style="left:1714px;top:622px;color:#e8e8e8;font-size:12px;">Sleeve Back [XY]</div><svg class="a" style="left:1607px;top:645px;" width="15" height="12" viewBox="0 0 15 12"><path d="M1 6 Q7.5 -0.5 14 6 Q7.5 12.5 1 6Z" fill="#bdbdbd"/><circle cx="7.5" cy="6" r="2.6" fill="#262626"/><circle cx="8" cy="5.6" r="1" fill="#bdbdbd"/></svg><svg class="a" style="left:1632px;top:644px;" width="14" height="14" viewBox="0 0 14 14"><circle cx="7" cy="7" r="5.5" fill="none" stroke="#8e8e8e" stroke-width="1.7"/></svg><svg class="a" style="left:1687px;top:646px;" width="12" height="10" viewBox="0 0 12 10"><path d="M1.5 2.5 L6 7 L10.5 2.5" fill="none" stroke="#c8c8c8" stroke-width="1.5"/></svg><svg class="a" style="left:1698px;top:645px;" width="12" height="12" viewBox="0 0 12 12"><path d="M1 1 H5 L4 5 H1 Z M7 1 H11 V5 H6 Z M1 7 H4 L5 11 H1 Z M6 7 H11 V11 H7 Z" fill="#8dc63f"/></svg><div class="t" style="left:1714px;top:644px;color:#e8e8e8;font-size:12px;">Left Arm [XY]</div><svg class="a" style="left:1607px;top:667px;" width="15" height="12" viewBox="0 0 15 12"><path d="M1 6 Q7.5 -0.5 14 6 Q7.5 12.5 1 6Z" fill="#bdbdbd"/><circle cx="7.5" cy="6" r="2.6" fill="#262626"/><circle cx="8" cy="5.6" r="1" fill="#bdbdbd"/></svg><svg class="a" style="left:1632px;top:666px;" width="14" height="14" viewBox="0 0 14 14"><circle cx="7" cy="7" r="5.5" fill="none" stroke="#8e8e8e" stroke-width="1.7"/></svg><svg class="a" style="left:1695px;top:668px;" width="12" height="10" viewBox="0 0 12 10"><path d="M1.5 2.5 L6 7 L10.5 2.5" fill="none" stroke="#c8c8c8" stroke-width="1.5"/></svg><svg class="a" style="left:1706px;top:667px;" width="12" height="12" viewBox="0 0 12 12"><path d="M1 1 H5 L4 5 H1 Z M7 1 H11 V5 H6 Z M1 7 H4 L5 11 H1 Z M6 7 H11 V11 H7 Z" fill="#8dc63f"/></svg><div class="t" style="left:1722px;top:666px;color:#e8e8e8;font-size:12px;">Bicep [Y]</div><svg class="a" style="left:1607px;top:689px;" width="15" height="12" viewBox="0 0 15 12"><path d="M1 6 Q7.5 -0.5 14 6 Q7.5 12.5 1 6Z" fill="#bdbdbd"/><circle cx="7.5" cy="6" r="2.6" fill="#262626"/><circle cx="8" cy="5.6" r="1" fill="#bdbdbd"/></svg><svg class="a" style="left:1632px;top:688px;" width="14" height="14" viewBox="0 0 14 14"><circle cx="7" cy="7" r="5.5" fill="none" stroke="#8e8e8e" stroke-width="1.7"/></svg><div class="t" style="left:1730px;top:688px;color:#8fb0f0;font-size:12px;">arm_1_L_shadow_Coat</div><svg class="a" style="left:1607px;top:711px;" width="15" height="12" viewBox="0 0 15 12"><path d="M1 6 Q7.5 -0.5 14 6 Q7.5 12.5 1 6Z" fill="#bdbdbd"/><circle cx="7.5" cy="6" r="2.6" fill="#262626"/><circle cx="8" cy="5.6" r="1" fill="#bdbdbd"/></svg><svg class="a" style="left:1632px;top:710px;" width="14" height="14" viewBox="0 0 14 14"><circle cx="7" cy="7" r="5.5" fill="none" stroke="#8e8e8e" stroke-width="1.7"/></svg><div class="t" style="left:1730px;top:710px;color:#8fb0f0;font-size:12px;">arm_1_L_shadow</div><svg class="a" style="left:1607px;top:733px;" width="15" height="12" viewBox="0 0 15 12"><path d="M1 6 Q7.5 -0.5 14 6 Q7.5 12.5 1 6Z" fill="#bdbdbd"/><circle cx="7.5" cy="6" r="2.6" fill="#262626"/><circle cx="8" cy="5.6" r="1" fill="#bdbdbd"/></svg><svg class="a" style="left:1632px;top:732px;" width="14" height="14" viewBox="0 0 14 14"><circle cx="7" cy="7" r="5.5" fill="none" stroke="#8e8e8e" stroke-width="1.7"/></svg><div class="t" style="left:1730px;top:732px;color:#8fb0f0;font-size:12px;">Arm_L_Bicep</div><svg class="a" style="left:1607px;top:755px;" width="15" height="12" viewBox="0 0 15 12"><path d="M1 6 Q7.5 -0.5 14 6 Q7.5 12.5 1 6Z" fill="#bdbdbd"/><circle cx="7.5" cy="6" r="2.6" fill="#262626"/><circle cx="8" cy="5.6" r="1" fill="#bdbdbd"/></svg><svg class="a" style="left:1632px;top:754px;" width="14" height="14" viewBox="0 0 14 14"><circle cx="7" cy="7" r="5.5" fill="none" stroke="#8e8e8e" stroke-width="1.7"/></svg><svg class="a" style="left:1703px;top:756px;" width="12" height="10" viewBox="0 0 12 10"><path d="M1.5 2.5 L6 7 L10.5 2.5" fill="none" stroke="#c8c8c8" stroke-width="1.5"/></svg><svg class="a" style="left:1714px;top:755px;" width="12" height="12" viewBox="0 0 12 12"><path d="M1 1 H5 L4 5 H1 Z M7 1 H11 V5 H6 Z M1 7 H4 L5 11 H1 Z M6 7 H11 V11 H7 Z" fill="#8dc63f"/></svg><div class="t" style="left:1730px;top:754px;color:#e8e8e8;font-size:12px;">Forearm [Y]</div><div class="a" style="left:1655px;top:772px;width:251px;height:22px;background:#484848;"></div><svg class="a" style="left:1607px;top:777px;" width="15" height="12" viewBox="0 0 15 12"><path d="M1 6 Q7.5 -0.5 14 6 Q7.5 12.5 1 6Z" fill="#bdbdbd"/><circle cx="7.5" cy="6" r="2.6" fill="#262626"/><circle cx="8" cy="5.6" r="1" fill="#bdbdbd"/></svg><svg class="a" style="left:1632px;top:776px;" width="14" height="14" viewBox="0 0 14 14"><circle cx="7" cy="7" r="5.5" fill="none" stroke="#8e8e8e" stroke-width="1.7"/></svg><div class="t" style="left:1738px;top:776px;color:#8fb0f0;font-size:12px;">Arm_L_Forearm</div><svg class="a" style="left:1607px;top:799px;" width="15" height="12" viewBox="0 0 15 12"><path d="M1 6 Q7.5 -0.5 14 6 Q7.5 12.5 1 6Z" fill="#bdbdbd"/><circle cx="7.5" cy="6" r="2.6" fill="#262626"/><circle cx="8" cy="5.6" r="1" fill="#bdbdbd"/></svg><svg class="a" style="left:1632px;top:798px;" width="14" height="14" viewBox="0 0 14 14"><circle cx="7" cy="7" r="5.5" fill="none" stroke="#8e8e8e" stroke-width="1.7"/></svg><svg class="a" style="left:1711px;top:800px;" width="12" height="10" viewBox="0 0 12 10"><path d="M1.5 2.5 L6 7 L10.5 2.5" fill="none" stroke="#c8c8c8" stroke-width="1.5"/></svg><svg class="a" style="left:1722px;top:799px;" width="12" height="12" viewBox="0 0 12 12"><path d="M1 1 H5 L4 5 H1 Z M7 1 H11 V5 H6 Z M1 7 H4 L5 11 H1 Z M6 7 H11 V11 H7 Z" fill="#8dc63f"/></svg><div class="t" style="left:1738px;top:798px;color:#e8e8e8;font-size:12px;">Hand [Y]</div><svg class="a" style="left:1607px;top:821px;" width="15" height="12" viewBox="0 0 15 12"><path d="M1 6 Q7.5 -0.5 14 6 Q7.5 12.5 1 6Z" fill="#bdbdbd"/><circle cx="7.5" cy="6" r="2.6" fill="#262626"/><circle cx="8" cy="5.6" r="1" fill="#bdbdbd"/></svg><svg class="a" style="left:1632px;top:820px;" width="14" height="14" viewBox="0 0 14 14"><circle cx="7" cy="7" r="5.5" fill="none" stroke="#8e8e8e" stroke-width="1.7"/></svg><svg class="a" style="left:1720px;top:821px;" width="10" height="12" viewBox="0 0 10 12"><path d="M3 1.5 L7.5 6 L3 10.5" fill="none" stroke="#c8c8c8" stroke-width="1.5"/></svg><svg class="a" style="left:1730px;top:821px;" width="12" height="12" viewBox="0 0 12 12"><path d="M1 1 H5 L4 5 H1 Z M7 1 H11 V5 H6 Z M1 7 H4 L5 11 H1 Z M6 7 H11 V11 H7 Z" fill="#8dc63f"/></svg><div class="t" style="left:1746px;top:820px;color:#e8e8e8;font-size:12px;">Hand Butterfly</div><svg class="a" style="left:1607px;top:843px;" width="15" height="12" viewBox="0 0 15 12"><path d="M1 6 Q7.5 -0.5 14 6 Q7.5 12.5 1 6Z" fill="#bdbdbd"/><circle cx="7.5" cy="6" r="2.6" fill="#262626"/><circle cx="8" cy="5.6" r="1" fill="#bdbdbd"/></svg><svg class="a" style="left:1632px;top:842px;" width="14" height="14" viewBox="0 0 14 14"><circle cx="7" cy="7" r="5.5" fill="none" stroke="#8e8e8e" stroke-width="1.7"/></svg><svg class="a" style="left:1719px;top:844px;" width="12" height="10" viewBox="0 0 12 10"><path d="M1.5 2.5 L6 7 L10.5 2.5" fill="none" stroke="#c8c8c8" stroke-width="1.5"/></svg><svg class="a" style="left:1730px;top:843px;" width="12" height="12" viewBox="0 0 12 12"><path d="M1 1 H5 L4 5 H1 Z M7 1 H11 V5 H6 Z M1 7 H4 L5 11 H1 Z M6 7 H11 V11 H7 Z" fill="#8dc63f"/></svg><div class="t" style="left:1746px;top:842px;color:#e8e8e8;font-size:12px;">Palm</div><svg class="a" style="left:1607px;top:865px;" width="15" height="12" viewBox="0 0 15 12"><path d="M1 6 Q7.5 -0.5 14 6 Q7.5 12.5 1 6Z" fill="#bdbdbd"/><circle cx="7.5" cy="6" r="2.6" fill="#262626"/><circle cx="8" cy="5.6" r="1" fill="#bdbdbd"/></svg><svg class="a" style="left:1632px;top:864px;" width="14" height="14" viewBox="0 0 14 14"><circle cx="7" cy="7" r="5.5" fill="none" stroke="#8e8e8e" stroke-width="1.7"/></svg><div class="t" style="left:1754px;top:864px;color:#8fb0f0;font-size:12px;">gloves__extra_decoration_L</div><svg class="a" style="left:1607px;top:887px;" width="15" height="12" viewBox="0 0 15 12"><path d="M1 6 Q7.5 -0.5 14 6 Q7.5 12.5 1 6Z" fill="#bdbdbd"/><circle cx="7.5" cy="6" r="2.6" fill="#262626"/><circle cx="8" cy="5.6" r="1" fill="#bdbdbd"/></svg><svg class="a" style="left:1632px;top:886px;" width="14" height="14" viewBox="0 0 14 14"><circle cx="7" cy="7" r="5.5" fill="none" stroke="#8e8e8e" stroke-width="1.7"/></svg><div class="t" style="left:1754px;top:886px;color:#8fb0f0;font-size:12px;">arm_palm_hand_L_gloves_L</div><svg class="a" style="left:1607px;top:909px;" width="15" height="12" viewBox="0 0 15 12"><path d="M1 6 Q7.5 -0.5 14 6 Q7.5 12.5 1 6Z" fill="#bdbdbd"/><circle cx="7.5" cy="6" r="2.6" fill="#262626"/><circle cx="8" cy="5.6" r="1" fill="#bdbdbd"/></svg><svg class="a" style="left:1632px;top:908px;" width="14" height="14" viewBox="0 0 14 14"><circle cx="7" cy="7" r="5.5" fill="none" stroke="#8e8e8e" stroke-width="1.7"/></svg><div class="t" style="left:1754px;top:908px;color:#8fb0f0;font-size:12px;">arm_palm_hand_shadow</div><div class="a" style="left:1655px;top:926px;width:251px;height:22px;background:#484848;"></div><svg class="a" style="left:1607px;top:931px;" width="15" height="12" viewBox="0 0 15 12"><path d="M1 6 Q7.5 -0.5 14 6 Q7.5 12.5 1 6Z" fill="#bdbdbd"/><circle cx="7.5" cy="6" r="2.6" fill="#262626"/><circle cx="8" cy="5.6" r="1" fill="#bdbdbd"/></svg><svg class="a" style="left:1632px;top:930px;" width="14" height="14" viewBox="0 0 14 14"><circle cx="7" cy="7" r="5.5" fill="none" stroke="#8e8e8e" stroke-width="1.7"/></svg><div class="t" style="left:1754px;top:930px;color:#8fb0f0;font-size:12px;">arm_palm_hand_L</div><svg class="a" style="left:1607px;top:953px;" width="15" height="12" viewBox="0 0 15 12"><path d="M1 6 Q7.5 -0.5 14 6 Q7.5 12.5 1 6Z" fill="#bdbdbd"/><circle cx="7.5" cy="6" r="2.6" fill="#262626"/><circle cx="8" cy="5.6" r="1" fill="#bdbdbd"/></svg><svg class="a" style="left:1632px;top:952px;" width="14" height="14" viewBox="0 0 14 14"><circle cx="7" cy="7" r="5.5" fill="none" stroke="#8e8e8e" stroke-width="1.7"/></svg><div class="t" style="left:1754px;top:952px;color:#8fb0f0;font-size:12px;">arm_palm_hand_L</div><svg class="a" style="left:1607px;top:975px;" width="15" height="12" viewBox="0 0 15 12"><path d="M1 6 Q7.5 -0.5 14 6 Q7.5 12.5 1 6Z" fill="#bdbdbd"/><circle cx="7.5" cy="6" r="2.6" fill="#262626"/><circle cx="8" cy="5.6" r="1" fill="#bdbdbd"/></svg><svg class="a" style="left:1632px;top:974px;" width="14" height="14" viewBox="0 0 14 14"><circle cx="7" cy="7" r="5.5" fill="none" stroke="#8e8e8e" stroke-width="1.7"/></svg><div class="t" style="left:1754px;top:974px;color:#8fb0f0;font-size:12px;">arm_palm_hand_linea_art_L</div><svg class="a" style="left:1607px;top:997px;" width="15" height="12" viewBox="0 0 15 12"><path d="M1 6 Q7.5 -0.5 14 6 Q7.5 12.5 1 6Z" fill="#bdbdbd"/><circle cx="7.5" cy="6" r="2.6" fill="#262626"/><circle cx="8" cy="5.6" r="1" fill="#bdbdbd"/></svg><svg class="a" style="left:1632px;top:996px;" width="14" height="14" viewBox="0 0 14 14"><circle cx="7" cy="7" r="5.5" fill="none" stroke="#8e8e8e" stroke-width="1.7"/></svg><svg class="a" style="left:1720px;top:997px;" width="10" height="12" viewBox="0 0 10 12"><path d="M3 1.5 L7.5 6 L3 10.5" fill="none" stroke="#c8c8c8" stroke-width="1.5"/></svg><svg class="a" style="left:1730px;top:997px;" width="12" height="12" viewBox="0 0 12 12"><path d="M1 1 H5 L4 5 H1 Z M7 1 H11 V5 H6 Z M1 7 H4 L5 11 H1 Z M6 7 H11 V11 H7 Z" fill="#8dc63f"/></svg><div class="t" style="left:1746px;top:996px;color:#e8e8e8;font-size:12px;">Thumb</div><svg class="a" style="left:1607px;top:1019px;" width="15" height="12" viewBox="0 0 15 12"><path d="M1 6 Q7.5 -0.5 14 6 Q7.5 12.5 1 6Z" fill="#bdbdbd"/><circle cx="7.5" cy="6" r="2.6" fill="#262626"/><circle cx="8" cy="5.6" r="1" fill="#bdbdbd"/></svg><svg class="a" style="left:1632px;top:1018px;" width="14" height="14" viewBox="0 0 14 14"><circle cx="7" cy="7" r="5.5" fill="none" stroke="#8e8e8e" stroke-width="1.7"/></svg><svg class="a" style="left:1719px;top:1020px;" width="12" height="10" viewBox="0 0 12 10"><path d="M1.5 2.5 L6 7 L10.5 2.5" fill="none" stroke="#c8c8c8" stroke-width="1.5"/></svg><svg class="a" style="left:1730px;top:1019px;" width="12" height="12" viewBox="0 0 12 12"><path d="M1 1 H5 L4 5 H1 Z M7 1 H11 V5 H6 Z M1 7 H4 L5 11 H1 Z M6 7 H11 V11 H7 Z" fill="#8dc63f"/></svg><div class="t" style="left:1746px;top:1018px;color:#e8e8e8;font-size:12px;">Index</div><div class="a" style="left:1655px;top:1036px;width:251px;height:22px;background:#484848;"></div><svg class="a" style="left:1607px;top:1041px;" width="15" height="12" viewBox="0 0 15 12"><path d="M1 6 Q7.5 -0.5 14 6 Q7.5 12.5 1 6Z" fill="#bdbdbd"/><circle cx="7.5" cy="6" r="2.6" fill="#262626"/><circle cx="8" cy="5.6" r="1" fill="#bdbdbd"/></svg><svg class="a" style="left:1632px;top:1040px;" width="14" height="14" viewBox="0 0 14 14"><circle cx="7" cy="7" r="5.5" fill="none" stroke="#8e8e8e" stroke-width="1.7"/></svg><div class="t" style="left:1754px;top:1040px;color:#8fb0f0;font-size:12px;">arm_1_index _L_gloves_L</div><div class="a" style="left:1683px;top:138px;width:1px;height:139px;background:#555;"></div><div class="a" style="left:1708px;top:138px;width:1px;height:117px;background:#555;"></div><div class="a" style="left:1692px;top:288px;width:1px;height:363px;background:#555;"></div><div class="a" style="left:1700px;top:662px;width:1px;height:11px;background:#555;"></div><div class="a" style="left:1707px;top:684px;width:1px;height:77px;background:#555;"></div><div class="a" style="left:1715px;top:772px;width:1px;height:33px;background:#555;"></div><div class="a" style="left:1723px;top:816px;width:1px;height:209px;background:#555;"></div><div class="a" style="left:1731px;top:860px;width:1px;height:121px;background:#555;"></div><div class="a" style="left:1731px;top:1036px;width:1px;height:21px;background:#555;"></div><svg class="a" style="left:1698px;top:292px;" width="14" height="14" viewBox="0 0 14 14"><rect x="1" y="3" width="8" height="4" fill="#f0f0f0"/></svg><svg class="a" style="left:1714px;top:710px;" width="14" height="14" viewBox="0 0 14 14"><path d="M2 9 Q4 1 8 3 L10 8" fill="none" stroke="#c8b8d8" stroke-width="2"/></svg><svg class="a" style="left:1714px;top:732px;" width="14" height="14" viewBox="0 0 14 14"><path d="M4 1 Q8 6 6 13" stroke="#f4e4ea" stroke-width="3" fill="none"/></svg><svg class="a" style="left:1722px;top:776px;" width="14" height="14" viewBox="0 0 14 14"><path d="M3 1 L9 12" stroke="#f4e0e8" stroke-width="3"/></svg><svg class="a" style="left:1738px;top:864px;" width="14" height="14" viewBox="0 0 14 14"><path d="M1 4 L6 3" stroke="#555" stroke-width="1"/></svg><svg class="a" style="left:1738px;top:886px;" width="14" height="14" viewBox="0 0 14 14"><path d="M2 4 L8 2 L9 6 L4 7 Z" fill="#a070b0"/></svg><svg class="a" style="left:1738px;top:908px;" width="14" height="14" viewBox="0 0 14 14"><path d="M3 6 Q6 3 9 10 L3 10Z" fill="#b08898"/></svg><svg class="a" style="left:1738px;top:930px;" width="14" height="14" viewBox="0 0 14 14"><path d="M2 1 Q10 2 11 11 L3 11 Z" fill="#f6e6ec"/></svg><svg class="a" style="left:1738px;top:952px;" width="14" height="14" viewBox="0 0 14 14"><path d="M2 1 Q8 2 8 8 L3 8 Z" fill="#f6e6ec"/></svg><svg class="a" style="left:1738px;top:974px;" width="14" height="14" viewBox="0 0 14 14"><path d="M2 2 Q9 3 10 11 L4 11 Z" fill="#b89098"/></svg><svg class="a" style="left:1738px;top:1040px;" width="14" height="14" viewBox="0 0 14 14"><path d="M1 2 L10 11" stroke="#8a5090" stroke-width="3"/></svg>
</body></html>
